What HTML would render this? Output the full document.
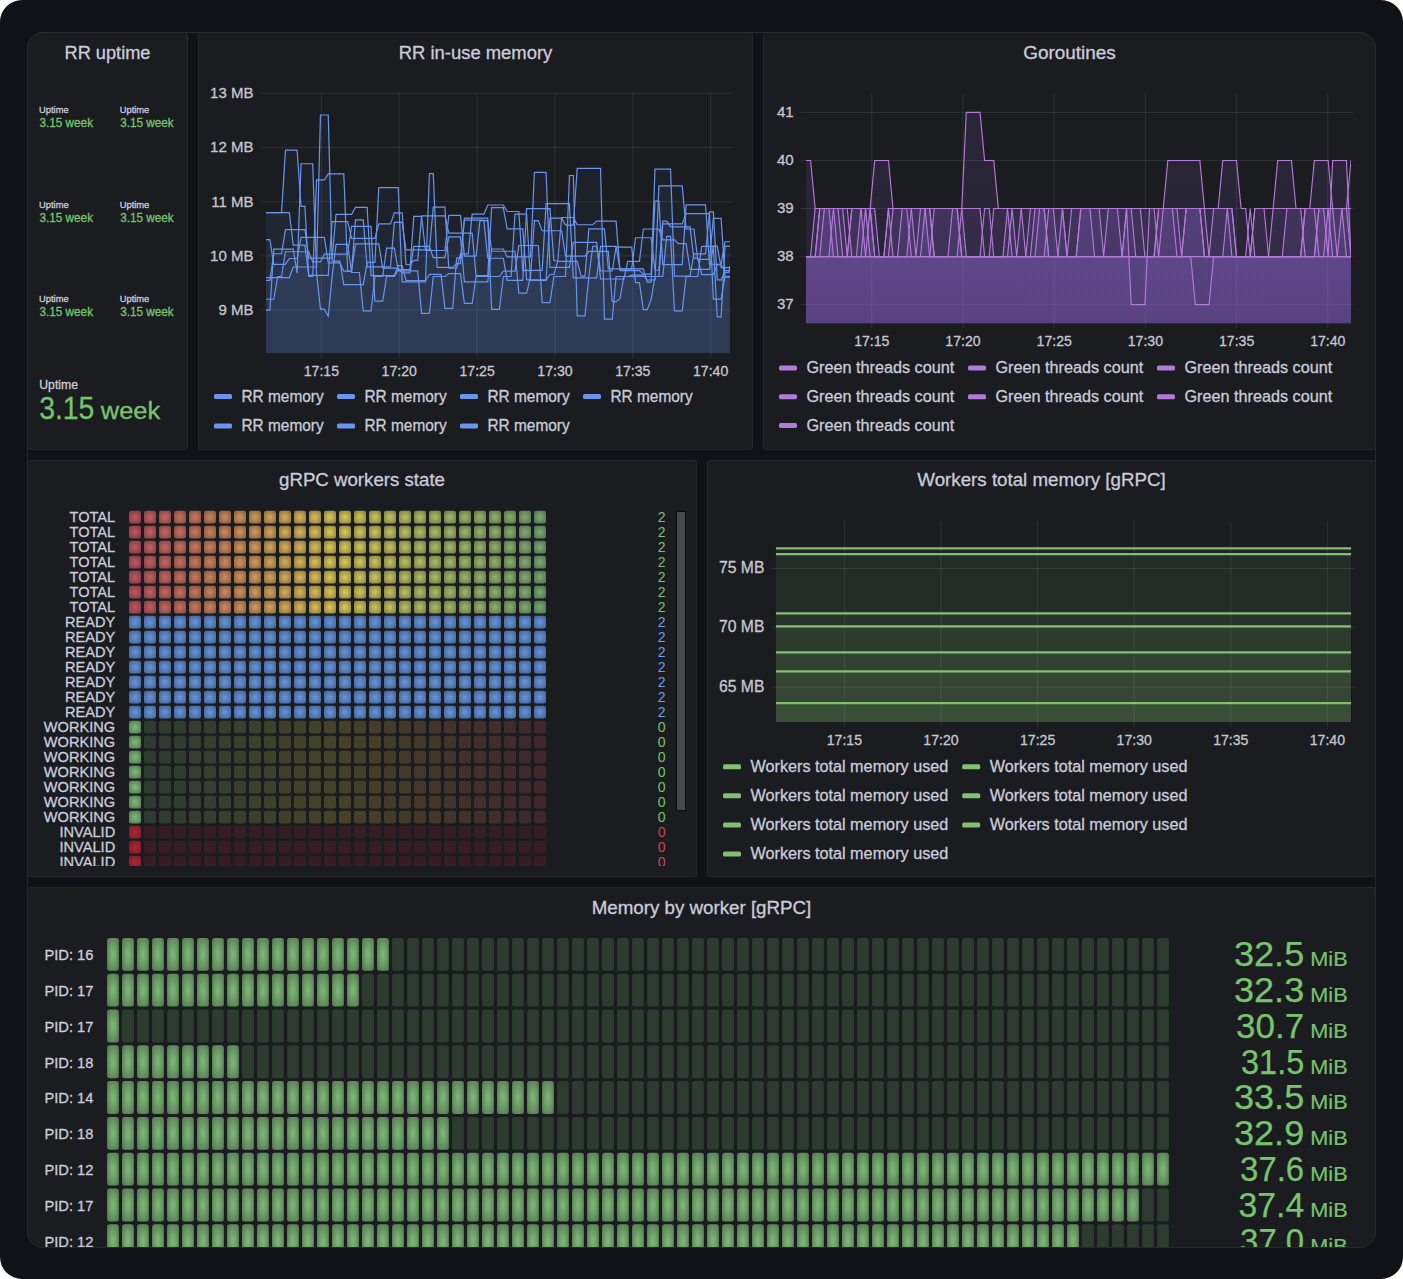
<!DOCTYPE html>
<html><head><meta charset="utf-8"><style>
html,body{margin:0;padding:0;background:#fff;width:1403px;height:1279px;overflow:hidden}
#frame{position:absolute;left:0;top:0;width:1403px;height:1279px;background:#111217;border-radius:22px}
#dash{position:absolute;left:0;top:0;width:1403px;height:1279px;clip-path:inset(32px 27px 31px 27px round 16px)}
.p{position:absolute;box-sizing:border-box;background:#1a1c20;border:1px solid #27282d;border-radius:3px}
#ov{position:absolute;left:27px;top:32px;width:1349px;height:1216px;box-sizing:border-box;border:1px solid #27282d;border-radius:16px;pointer-events:none}
svg{position:absolute;left:0;top:0}
text{font-family:"Liberation Sans", sans-serif}
</style></head><body>
<div id="frame"></div>
<div id="dash">
<div class="p" style="left:27px;top:32px;width:161px;height:418px"></div><div class="p" style="left:198px;top:32px;width:555px;height:418px"></div><div class="p" style="left:763px;top:32px;width:613px;height:418px"></div><div class="p" style="left:27px;top:460px;width:670px;height:417px"></div><div class="p" style="left:707px;top:460px;width:669px;height:417px"></div><div class="p" style="left:27px;top:887px;width:1349px;height:420px"></div>
<svg width="1403" height="1279" viewBox="0 0 1403 1279">
<defs><linearGradient id="lgc2" gradientUnits="userSpaceOnUse" x1="0" y1="93.8" x2="0" y2="323.6"><stop offset="0" stop-color="#a070f0" stop-opacity="0.125"/><stop offset="1" stop-color="#a070f0" stop-opacity="0.085"/></linearGradient><radialGradient id="g1" cx="50%" cy="50%" r="70.7%"><stop offset="10%" stop-color="rgb(198,85,98)" stop-opacity="0.95"/><stop offset="100%" stop-color="rgb(198,85,98)" stop-opacity="0.55"/></radialGradient><radialGradient id="g2" cx="50%" cy="50%" r="70.7%"><stop offset="10%" stop-color="rgb(201,94,97)" stop-opacity="0.95"/><stop offset="100%" stop-color="rgb(201,94,97)" stop-opacity="0.55"/></radialGradient><radialGradient id="g3" cx="50%" cy="50%" r="70.7%"><stop offset="10%" stop-color="rgb(203,103,96)" stop-opacity="0.95"/><stop offset="100%" stop-color="rgb(203,103,96)" stop-opacity="0.55"/></radialGradient><radialGradient id="g4" cx="50%" cy="50%" r="70.7%"><stop offset="10%" stop-color="rgb(205,112,95)" stop-opacity="0.95"/><stop offset="100%" stop-color="rgb(205,112,95)" stop-opacity="0.55"/></radialGradient><radialGradient id="g5" cx="50%" cy="50%" r="70.7%"><stop offset="10%" stop-color="rgb(207,121,95)" stop-opacity="0.95"/><stop offset="100%" stop-color="rgb(207,121,95)" stop-opacity="0.55"/></radialGradient><radialGradient id="g6" cx="50%" cy="50%" r="70.7%"><stop offset="10%" stop-color="rgb(209,130,94)" stop-opacity="0.95"/><stop offset="100%" stop-color="rgb(209,130,94)" stop-opacity="0.55"/></radialGradient><radialGradient id="g7" cx="50%" cy="50%" r="70.7%"><stop offset="10%" stop-color="rgb(211,139,93)" stop-opacity="0.95"/><stop offset="100%" stop-color="rgb(211,139,93)" stop-opacity="0.55"/></radialGradient><radialGradient id="g8" cx="50%" cy="50%" r="70.7%"><stop offset="10%" stop-color="rgb(213,148,92)" stop-opacity="0.95"/><stop offset="100%" stop-color="rgb(213,148,92)" stop-opacity="0.55"/></radialGradient><radialGradient id="g9" cx="50%" cy="50%" r="70.7%"><stop offset="10%" stop-color="rgb(215,157,91)" stop-opacity="0.95"/><stop offset="100%" stop-color="rgb(215,157,91)" stop-opacity="0.55"/></radialGradient><radialGradient id="g10" cx="50%" cy="50%" r="70.7%"><stop offset="10%" stop-color="rgb(217,166,90)" stop-opacity="0.95"/><stop offset="100%" stop-color="rgb(217,166,90)" stop-opacity="0.55"/></radialGradient><radialGradient id="g11" cx="50%" cy="50%" r="70.7%"><stop offset="10%" stop-color="rgb(219,175,89)" stop-opacity="0.95"/><stop offset="100%" stop-color="rgb(219,175,89)" stop-opacity="0.55"/></radialGradient><radialGradient id="g12" cx="50%" cy="50%" r="70.7%"><stop offset="10%" stop-color="rgb(221,184,89)" stop-opacity="0.95"/><stop offset="100%" stop-color="rgb(221,184,89)" stop-opacity="0.55"/></radialGradient><radialGradient id="g13" cx="50%" cy="50%" r="70.7%"><stop offset="10%" stop-color="rgb(223,193,88)" stop-opacity="0.95"/><stop offset="100%" stop-color="rgb(223,193,88)" stop-opacity="0.55"/></radialGradient><radialGradient id="g14" cx="50%" cy="50%" r="70.7%"><stop offset="10%" stop-color="rgb(225,203,87)" stop-opacity="0.95"/><stop offset="100%" stop-color="rgb(225,203,87)" stop-opacity="0.55"/></radialGradient><radialGradient id="g15" cx="50%" cy="50%" r="70.7%"><stop offset="10%" stop-color="rgb(222,206,88)" stop-opacity="0.95"/><stop offset="100%" stop-color="rgb(222,206,88)" stop-opacity="0.55"/></radialGradient><radialGradient id="g16" cx="50%" cy="50%" r="70.7%"><stop offset="10%" stop-color="rgb(214,203,90)" stop-opacity="0.95"/><stop offset="100%" stop-color="rgb(214,203,90)" stop-opacity="0.55"/></radialGradient><radialGradient id="g17" cx="50%" cy="50%" r="70.7%"><stop offset="10%" stop-color="rgb(207,201,92)" stop-opacity="0.95"/><stop offset="100%" stop-color="rgb(207,201,92)" stop-opacity="0.55"/></radialGradient><radialGradient id="g18" cx="50%" cy="50%" r="70.7%"><stop offset="10%" stop-color="rgb(199,198,94)" stop-opacity="0.95"/><stop offset="100%" stop-color="rgb(199,198,94)" stop-opacity="0.55"/></radialGradient><radialGradient id="g19" cx="50%" cy="50%" r="70.7%"><stop offset="10%" stop-color="rgb(191,196,96)" stop-opacity="0.95"/><stop offset="100%" stop-color="rgb(191,196,96)" stop-opacity="0.55"/></radialGradient><radialGradient id="g20" cx="50%" cy="50%" r="70.7%"><stop offset="10%" stop-color="rgb(183,193,98)" stop-opacity="0.95"/><stop offset="100%" stop-color="rgb(183,193,98)" stop-opacity="0.55"/></radialGradient><radialGradient id="g21" cx="50%" cy="50%" r="70.7%"><stop offset="10%" stop-color="rgb(176,191,100)" stop-opacity="0.95"/><stop offset="100%" stop-color="rgb(176,191,100)" stop-opacity="0.55"/></radialGradient><radialGradient id="g22" cx="50%" cy="50%" r="70.7%"><stop offset="10%" stop-color="rgb(168,188,102)" stop-opacity="0.95"/><stop offset="100%" stop-color="rgb(168,188,102)" stop-opacity="0.55"/></radialGradient><radialGradient id="g23" cx="50%" cy="50%" r="70.7%"><stop offset="10%" stop-color="rgb(160,186,105)" stop-opacity="0.95"/><stop offset="100%" stop-color="rgb(160,186,105)" stop-opacity="0.55"/></radialGradient><radialGradient id="g24" cx="50%" cy="50%" r="70.7%"><stop offset="10%" stop-color="rgb(153,183,107)" stop-opacity="0.95"/><stop offset="100%" stop-color="rgb(153,183,107)" stop-opacity="0.55"/></radialGradient><radialGradient id="g25" cx="50%" cy="50%" r="70.7%"><stop offset="10%" stop-color="rgb(145,180,109)" stop-opacity="0.95"/><stop offset="100%" stop-color="rgb(145,180,109)" stop-opacity="0.55"/></radialGradient><radialGradient id="g26" cx="50%" cy="50%" r="70.7%"><stop offset="10%" stop-color="rgb(137,178,111)" stop-opacity="0.95"/><stop offset="100%" stop-color="rgb(137,178,111)" stop-opacity="0.55"/></radialGradient><radialGradient id="g27" cx="50%" cy="50%" r="70.7%"><stop offset="10%" stop-color="rgb(130,175,113)" stop-opacity="0.95"/><stop offset="100%" stop-color="rgb(130,175,113)" stop-opacity="0.55"/></radialGradient><radialGradient id="g28" cx="50%" cy="50%" r="70.7%"><stop offset="10%" stop-color="rgb(122,173,115)" stop-opacity="0.95"/><stop offset="100%" stop-color="rgb(122,173,115)" stop-opacity="0.55"/></radialGradient><radialGradient id="g29" cx="50%" cy="50%" r="70.7%"><stop offset="10%" stop-color="rgb(102,150,226)" stop-opacity="0.95"/><stop offset="100%" stop-color="rgb(102,150,226)" stop-opacity="0.55"/></radialGradient><radialGradient id="g30" cx="50%" cy="50%" r="70.7%"><stop offset="10%" stop-color="rgb(128,188,120)" stop-opacity="0.95"/><stop offset="100%" stop-color="rgb(128,188,120)" stop-opacity="0.55"/></radialGradient><radialGradient id="g31" cx="50%" cy="50%" r="70.7%"><stop offset="10%" stop-color="rgb(182,34,51)" stop-opacity="0.95"/><stop offset="100%" stop-color="rgb(182,34,51)" stop-opacity="0.55"/></radialGradient></defs>
<text x="107.50" y="59.00" font-size="18.54" fill="#ccccdc" text-anchor="middle" font-weight="normal"  textLength="86.0" lengthAdjust="spacingAndGlyphs" stroke="#ccccdc" stroke-width="0.3">RR uptime</text><text x="475.50" y="59.00" font-size="18.54" fill="#ccccdc" text-anchor="middle" font-weight="normal"  textLength="153.5" lengthAdjust="spacingAndGlyphs" stroke="#ccccdc" stroke-width="0.3">RR in-use memory</text><text x="1069.50" y="59.00" font-size="18.54" fill="#ccccdc" text-anchor="middle" font-weight="normal"  textLength="92.6" lengthAdjust="spacingAndGlyphs" stroke="#ccccdc" stroke-width="0.3">Goroutines</text><text x="362.00" y="486.00" font-size="18.54" fill="#ccccdc" text-anchor="middle" font-weight="normal"  textLength="165.9" lengthAdjust="spacingAndGlyphs" stroke="#ccccdc" stroke-width="0.3">gRPC workers state</text><text x="1041.50" y="486.00" font-size="18.54" fill="#ccccdc" text-anchor="middle" font-weight="normal"  textLength="248.4" lengthAdjust="spacingAndGlyphs" stroke="#ccccdc" stroke-width="0.3">Workers total memory [gRPC]</text><text x="701.50" y="913.70" font-size="18.54" fill="#ccccdc" text-anchor="middle" font-weight="normal"  textLength="219.6" lengthAdjust="spacingAndGlyphs" stroke="#ccccdc" stroke-width="0.3">Memory by worker [gRPC]</text><text x="39.10" y="112.60" font-size="9.37" fill="#ccccdc" text-anchor="start" font-weight="normal"  textLength="29.5" lengthAdjust="spacingAndGlyphs" stroke="#ccccdc" stroke-width="0.3">Uptime</text><text x="39.50" y="126.80" font-size="12.09" fill="#78c46d" text-anchor="start" font-weight="normal"  textLength="53.52" lengthAdjust="spacingAndGlyphs" stroke="#78c46d" stroke-width="0.3">3.15 week</text><text x="119.80" y="112.60" font-size="9.37" fill="#ccccdc" text-anchor="start" font-weight="normal"  textLength="29.5" lengthAdjust="spacingAndGlyphs" stroke="#ccccdc" stroke-width="0.3">Uptime</text><text x="120.20" y="126.80" font-size="12.09" fill="#78c46d" text-anchor="start" font-weight="normal"  textLength="53.52" lengthAdjust="spacingAndGlyphs" stroke="#78c46d" stroke-width="0.3">3.15 week</text><text x="39.10" y="207.60" font-size="9.37" fill="#ccccdc" text-anchor="start" font-weight="normal"  textLength="29.5" lengthAdjust="spacingAndGlyphs" stroke="#ccccdc" stroke-width="0.3">Uptime</text><text x="39.50" y="221.80" font-size="12.09" fill="#78c46d" text-anchor="start" font-weight="normal"  textLength="53.52" lengthAdjust="spacingAndGlyphs" stroke="#78c46d" stroke-width="0.3">3.15 week</text><text x="119.80" y="207.60" font-size="9.37" fill="#ccccdc" text-anchor="start" font-weight="normal"  textLength="29.5" lengthAdjust="spacingAndGlyphs" stroke="#ccccdc" stroke-width="0.3">Uptime</text><text x="120.20" y="221.80" font-size="12.09" fill="#78c46d" text-anchor="start" font-weight="normal"  textLength="53.52" lengthAdjust="spacingAndGlyphs" stroke="#78c46d" stroke-width="0.3">3.15 week</text><text x="39.10" y="301.60" font-size="9.37" fill="#ccccdc" text-anchor="start" font-weight="normal"  textLength="29.5" lengthAdjust="spacingAndGlyphs" stroke="#ccccdc" stroke-width="0.3">Uptime</text><text x="39.50" y="315.80" font-size="12.09" fill="#78c46d" text-anchor="start" font-weight="normal"  textLength="53.52" lengthAdjust="spacingAndGlyphs" stroke="#78c46d" stroke-width="0.3">3.15 week</text><text x="119.80" y="301.60" font-size="9.37" fill="#ccccdc" text-anchor="start" font-weight="normal"  textLength="29.5" lengthAdjust="spacingAndGlyphs" stroke="#ccccdc" stroke-width="0.3">Uptime</text><text x="120.20" y="315.80" font-size="12.09" fill="#78c46d" text-anchor="start" font-weight="normal"  textLength="53.52" lengthAdjust="spacingAndGlyphs" stroke="#78c46d" stroke-width="0.3">3.15 week</text><text x="39.30" y="389.00" font-size="12.57" fill="#ccccdc" text-anchor="start" font-weight="normal"  textLength="38.64" lengthAdjust="spacingAndGlyphs" stroke="#ccccdc" stroke-width="0.3">Uptime</text><text x="39.20" y="418.90" font-size="30.9" fill="#78c46d" text-anchor="start" font-weight="normal"  textLength="55.2" lengthAdjust="spacingAndGlyphs" stroke="#78c46d" stroke-width="0.3">3.15</text><text x="100.80" y="418.90" font-size="24.21" fill="#78c46d" text-anchor="start" font-weight="normal"  textLength="59.5" lengthAdjust="spacingAndGlyphs" stroke="#78c46d" stroke-width="0.3">week</text><line x1="260.50" y1="93.30" x2="732.40" y2="93.30" stroke="rgba(240,250,255,0.09)" stroke-width="1"/><text x="253.40" y="98.10" font-size="15.45" fill="#c7c7d1" text-anchor="end" font-weight="normal"  textLength="43.35" lengthAdjust="spacingAndGlyphs" stroke="#c7c7d1" stroke-width="0.3">13 MB</text><line x1="260.50" y1="147.50" x2="732.40" y2="147.50" stroke="rgba(240,250,255,0.09)" stroke-width="1"/><text x="253.40" y="152.30" font-size="15.45" fill="#c7c7d1" text-anchor="end" font-weight="normal"  textLength="43.35" lengthAdjust="spacingAndGlyphs" stroke="#c7c7d1" stroke-width="0.3">12 MB</text><line x1="260.50" y1="201.70" x2="732.40" y2="201.70" stroke="rgba(240,250,255,0.09)" stroke-width="1"/><text x="253.40" y="206.50" font-size="15.45" fill="#c7c7d1" text-anchor="end" font-weight="normal"  textLength="42.24" lengthAdjust="spacingAndGlyphs" stroke="#c7c7d1" stroke-width="0.3">11 MB</text><line x1="260.50" y1="255.90" x2="732.40" y2="255.90" stroke="rgba(240,250,255,0.09)" stroke-width="1"/><text x="253.40" y="260.70" font-size="15.45" fill="#c7c7d1" text-anchor="end" font-weight="normal"  textLength="43.35" lengthAdjust="spacingAndGlyphs" stroke="#c7c7d1" stroke-width="0.3">10 MB</text><line x1="260.50" y1="310.10" x2="732.40" y2="310.10" stroke="rgba(240,250,255,0.09)" stroke-width="1"/><text x="253.40" y="314.90" font-size="15.45" fill="#c7c7d1" text-anchor="end" font-weight="normal"  textLength="35.01" lengthAdjust="spacingAndGlyphs" stroke="#c7c7d1" stroke-width="0.3">9 MB</text><line x1="321.40" y1="93.30" x2="321.40" y2="358.00" stroke="rgba(240,250,255,0.09)" stroke-width="1"/><text x="321.40" y="375.80" font-size="14.52" fill="#c7c7d1" text-anchor="middle" font-weight="normal"  textLength="35.28" lengthAdjust="spacingAndGlyphs" stroke="#c7c7d1" stroke-width="0.3">17:15</text><line x1="399.25" y1="93.30" x2="399.25" y2="358.00" stroke="rgba(240,250,255,0.09)" stroke-width="1"/><text x="399.25" y="375.80" font-size="14.52" fill="#c7c7d1" text-anchor="middle" font-weight="normal"  textLength="35.28" lengthAdjust="spacingAndGlyphs" stroke="#c7c7d1" stroke-width="0.3">17:20</text><line x1="477.10" y1="93.30" x2="477.10" y2="358.00" stroke="rgba(240,250,255,0.09)" stroke-width="1"/><text x="477.10" y="375.80" font-size="14.52" fill="#c7c7d1" text-anchor="middle" font-weight="normal"  textLength="35.28" lengthAdjust="spacingAndGlyphs" stroke="#c7c7d1" stroke-width="0.3">17:25</text><line x1="554.95" y1="93.30" x2="554.95" y2="358.00" stroke="rgba(240,250,255,0.09)" stroke-width="1"/><text x="554.95" y="375.80" font-size="14.52" fill="#c7c7d1" text-anchor="middle" font-weight="normal"  textLength="35.28" lengthAdjust="spacingAndGlyphs" stroke="#c7c7d1" stroke-width="0.3">17:30</text><line x1="632.80" y1="93.30" x2="632.80" y2="358.00" stroke="rgba(240,250,255,0.09)" stroke-width="1"/><text x="632.80" y="375.80" font-size="14.52" fill="#c7c7d1" text-anchor="middle" font-weight="normal"  textLength="35.28" lengthAdjust="spacingAndGlyphs" stroke="#c7c7d1" stroke-width="0.3">17:35</text><line x1="710.65" y1="93.30" x2="710.65" y2="358.00" stroke="rgba(240,250,255,0.09)" stroke-width="1"/><text x="710.65" y="375.80" font-size="14.52" fill="#c7c7d1" text-anchor="middle" font-weight="normal"  textLength="35.28" lengthAdjust="spacingAndGlyphs" stroke="#c7c7d1" stroke-width="0.3">17:40</text><clipPath id="c1"><rect x="266" y="90.3" width="464" height="263.2"/></clipPath><g clip-path="url(#c1)"><path d="M266.00,277.58 L269.89,277.58 L273.78,277.58 L277.67,277.58 L281.56,277.58 L285.45,277.58 L289.34,277.58 L293.23,267.00 L297.12,267.00 L301.01,267.00 L304.90,267.00 L308.79,267.00 L312.68,267.00 L316.57,267.00 L320.46,114.98 L324.35,114.98 L328.24,114.98 L332.13,261.15 L336.02,261.15 L339.91,261.15 L343.80,284.70 L347.69,284.70 L351.58,284.70 L355.47,284.70 L359.36,284.70 L363.25,284.70 L367.14,262.33 L371.03,262.33 L374.92,262.33 L378.81,187.66 L382.70,187.66 L386.59,187.66 L390.48,187.66 L394.37,187.66 L398.26,187.66 L402.15,281.80 L406.04,281.80 L409.93,281.80 L413.82,281.80 L417.71,281.80 L421.60,281.80 L425.49,281.80 L429.38,173.70 L433.27,173.70 L437.16,267.47 L441.05,267.47 L444.94,267.47 L448.83,267.47 L452.72,267.47 L456.61,263.54 L460.50,263.54 L464.39,220.19 L468.28,220.19 L472.17,220.19 L476.06,220.19 L479.95,220.19 L483.84,220.19 L487.73,258.23 L491.62,258.23 L495.51,258.23 L499.40,258.23 L503.29,258.23 L507.18,280.42 L511.07,280.42 L514.96,280.42 L518.85,280.42 L522.74,280.42 L526.63,208.55 L530.52,208.55 L534.41,208.55 L538.30,208.55 L542.19,208.55 L546.08,208.55 L549.97,208.55 L553.86,260.75 L557.75,260.75 L561.64,217.49 L565.53,217.49 L569.42,217.49 L573.31,217.49 L577.20,224.77 L581.09,224.77 L584.98,224.77 L588.87,224.77 L592.76,224.77 L596.65,221.09 L600.54,221.09 L604.43,221.09 L608.32,221.09 L612.21,221.09 L616.10,221.09 L619.99,270.62 L623.88,270.62 L627.77,270.62 L631.66,270.62 L635.55,270.62 L639.44,270.62 L643.33,274.15 L647.22,274.15 L651.11,274.15 L655.00,169.16 L658.89,169.16 L662.78,169.16 L666.67,169.16 L670.56,169.16 L674.45,276.11 L678.34,276.11 L682.23,276.11 L686.12,276.11 L690.01,276.11 L693.90,253.88 L697.79,253.88 L701.68,253.88 L705.57,253.88 L709.46,211.96 L713.35,211.96 L717.24,279.83 L721.13,279.83 L725.02,272.36 L728.91,272.36 L730.00,265.89 L730.00,353.50 L266.00,353.50 Z" fill="#6a95ee" fill-opacity="0.046" stroke="none"/><path d="M266.00,212.54 L269.89,212.54 L273.78,212.54 L277.67,212.54 L281.56,212.54 L285.45,150.21 L289.34,150.21 L293.23,150.21 L297.12,150.21 L301.01,206.36 L304.90,206.36 L308.79,275.30 L312.68,275.30 L316.57,275.30 L320.46,275.30 L324.35,275.30 L328.24,275.30 L332.13,221.55 L336.02,221.55 L339.91,221.55 L343.80,221.55 L347.69,221.55 L351.58,238.41 L355.47,238.41 L359.36,238.41 L363.25,238.41 L367.14,238.41 L371.03,238.41 L374.92,238.41 L378.81,223.96 L382.70,223.96 L386.59,223.96 L390.48,223.96 L394.37,212.80 L398.26,212.80 L402.15,212.80 L406.04,264.76 L409.93,264.76 L413.82,260.33 L417.71,260.33 L421.60,215.86 L425.49,215.86 L429.38,215.86 L433.27,215.86 L437.16,215.86 L441.05,215.86 L444.94,215.86 L448.83,233.21 L452.72,233.21 L456.61,233.21 L460.50,233.21 L464.39,233.21 L468.28,233.21 L472.17,233.21 L476.06,275.70 L479.95,275.70 L483.84,275.70 L487.73,275.70 L491.62,207.69 L495.51,207.69 L499.40,207.69 L503.29,207.69 L507.18,228.87 L511.07,228.87 L514.96,228.87 L518.85,228.87 L522.74,228.87 L526.63,279.81 L530.52,279.81 L534.41,279.81 L538.30,279.81 L542.19,279.81 L546.08,279.81 L549.97,274.49 L553.86,274.49 L557.75,261.33 L561.64,261.33 L565.53,261.33 L569.42,261.33 L573.31,261.33 L577.20,261.33 L581.09,276.03 L584.98,276.03 L588.87,228.90 L592.76,228.90 L596.65,228.90 L600.54,228.90 L604.43,228.90 L608.32,268.84 L612.21,268.84 L616.10,268.84 L619.99,268.84 L623.88,268.84 L627.77,268.84 L631.66,268.84 L635.55,237.74 L639.44,237.74 L643.33,237.74 L647.22,237.74 L651.11,237.74 L655.00,270.25 L658.89,270.25 L662.78,221.19 L666.67,221.19 L670.56,226.92 L674.45,226.92 L678.34,226.92 L682.23,226.92 L686.12,226.92 L690.01,226.92 L693.90,258.06 L697.79,258.06 L701.68,274.68 L705.57,274.68 L709.46,274.68 L713.35,274.68 L717.24,264.75 L721.13,264.75 L725.02,270.56 L728.91,270.56 L730.00,270.56 L730.00,353.50 L266.00,353.50 Z" fill="#6a95ee" fill-opacity="0.046" stroke="none"/><path d="M266.00,310.10 L269.89,310.10 L273.78,249.09 L277.67,249.09 L281.56,249.09 L285.45,249.09 L289.34,249.09 L293.23,249.09 L297.12,272.89 L301.01,163.76 L304.90,163.76 L308.79,163.76 L312.68,163.76 L316.57,272.89 L320.46,309.16 L324.35,309.16 L328.24,316.00 L332.13,276.50 L336.02,244.45 L339.91,244.45 L343.80,244.45 L347.69,244.45 L351.58,272.49 L355.47,272.49 L359.36,272.49 L363.25,310.85 L367.14,310.85 L371.03,310.85 L374.92,276.50 L378.81,276.50 L382.70,276.50 L386.59,248.06 L390.48,248.06 L394.37,248.06 L398.26,270.95 L402.15,270.95 L406.04,270.95 L409.93,270.95 L413.82,270.95 L417.71,270.95 L421.60,313.45 L425.49,313.45 L429.38,313.45 L433.27,276.50 L437.16,276.50 L441.05,276.50 L444.94,276.50 L448.83,273.55 L452.72,273.55 L456.61,273.55 L460.50,273.55 L464.39,303.30 L468.28,303.30 L472.17,303.30 L476.06,276.50 L479.95,276.50 L483.84,276.50 L487.73,276.50 L491.62,276.50 L495.51,276.50 L499.40,276.50 L503.29,271.06 L507.18,271.06 L511.07,271.06 L514.96,271.06 L518.85,245.51 L522.74,245.51 L526.63,245.51 L530.52,245.51 L534.41,245.51 L538.30,245.51 L542.19,302.59 L546.08,302.59 L549.97,302.59 L553.86,276.50 L557.75,276.50 L561.64,276.50 L565.53,276.50 L569.42,175.48 L573.31,175.48 L577.20,315.91 L581.09,315.91 L584.98,315.91 L588.87,276.50 L592.76,246.27 L596.65,246.27 L600.54,270.98 L604.43,270.98 L608.32,270.98 L612.21,270.98 L616.10,247.13 L619.99,247.13 L623.88,247.13 L627.77,247.13 L631.66,247.13 L635.55,282.69 L639.44,282.69 L643.33,309.62 L647.22,309.62 L651.11,299.61 L655.00,276.50 L658.89,276.50 L662.78,276.50 L666.67,236.45 L670.56,236.45 L674.45,310.93 L678.34,310.93 L682.23,310.93 L686.12,276.50 L690.01,276.50 L693.90,276.50 L697.79,276.50 L701.68,246.44 L705.57,246.44 L709.46,246.44 L713.35,246.44 L717.24,316.92 L721.13,316.92 L725.02,246.11 L728.91,246.11 L730.00,246.11 L730.00,353.50 L266.00,353.50 Z" fill="#6a95ee" fill-opacity="0.046" stroke="none"/><path d="M266.00,239.64 L269.89,239.64 L273.78,264.44 L277.67,264.44 L281.56,264.44 L285.45,264.44 L289.34,258.51 L293.23,258.51 L297.12,258.51 L301.01,237.45 L304.90,237.45 L308.79,237.45 L312.68,237.45 L316.57,237.45 L320.46,237.45 L324.35,237.45 L328.24,262.96 L332.13,262.96 L336.02,262.96 L339.91,262.96 L343.80,271.15 L347.69,271.15 L351.58,271.15 L355.47,243.83 L359.36,243.83 L363.25,243.83 L367.14,243.83 L371.03,243.83 L374.92,243.83 L378.81,243.83 L382.70,268.08 L386.59,268.08 L390.48,268.08 L394.37,268.08 L398.26,268.08 L402.15,272.95 L406.04,272.95 L409.93,272.95 L413.82,246.45 L417.71,246.45 L421.60,246.45 L425.49,246.45 L429.38,246.45 L433.27,257.54 L437.16,257.54 L441.05,257.54 L444.94,257.54 L448.83,236.87 L452.72,236.87 L456.61,236.87 L460.50,236.87 L464.39,281.97 L468.28,281.97 L472.17,281.97 L476.06,281.97 L479.95,281.97 L483.84,281.97 L487.73,281.97 L491.62,248.98 L495.51,248.98 L499.40,248.98 L503.29,248.98 L507.18,256.79 L511.07,256.79 L514.96,256.79 L518.85,256.79 L522.74,256.79 L526.63,256.79 L530.52,256.79 L534.41,172.31 L538.30,172.31 L542.19,172.31 L546.08,172.31 L549.97,267.32 L553.86,267.32 L557.75,267.32 L561.64,267.32 L565.53,267.32 L569.42,267.32 L573.31,242.45 L577.20,242.45 L581.09,242.45 L584.98,242.45 L588.87,242.45 L592.76,242.45 L596.65,242.45 L600.54,279.00 L604.43,279.00 L608.32,279.00 L612.21,279.00 L616.10,279.00 L619.99,279.00 L623.88,279.00 L627.77,261.28 L631.66,261.28 L635.55,261.28 L639.44,261.28 L643.33,229.00 L647.22,229.00 L651.11,229.00 L655.00,229.00 L658.89,229.00 L662.78,239.81 L666.67,239.81 L670.56,239.81 L674.45,239.81 L678.34,243.70 L682.23,243.70 L686.12,243.70 L690.01,269.41 L693.90,269.41 L697.79,269.41 L701.68,269.41 L705.57,269.41 L709.46,269.41 L713.35,246.05 L717.24,246.05 L721.13,267.65 L725.02,267.65 L728.91,267.65 L730.00,267.65 L730.00,353.50 L266.00,353.50 Z" fill="#6a95ee" fill-opacity="0.046" stroke="none"/><path d="M266.00,299.26 L269.89,299.26 L273.78,299.26 L277.67,276.50 L281.56,276.50 L285.45,251.76 L289.34,251.76 L293.23,251.76 L297.12,251.76 L301.01,251.76 L304.90,251.76 L308.79,251.76 L312.68,261.93 L316.57,261.93 L320.46,261.93 L324.35,254.22 L328.24,254.22 L332.13,254.22 L336.02,254.22 L339.91,254.22 L343.80,254.22 L347.69,254.22 L351.58,226.32 L355.47,226.32 L359.36,226.32 L363.25,226.32 L367.14,226.32 L371.03,226.32 L374.92,301.14 L378.81,301.14 L382.70,301.14 L386.59,276.50 L390.48,276.50 L394.37,276.50 L398.26,269.55 L402.15,269.55 L406.04,269.55 L409.93,269.55 L413.82,216.34 L417.71,216.34 L421.60,216.34 L425.49,250.50 L429.38,250.50 L433.27,250.50 L437.16,250.50 L441.05,250.50 L444.94,250.50 L448.83,215.30 L452.72,215.30 L456.61,215.30 L460.50,215.30 L464.39,256.14 L468.28,256.14 L472.17,256.14 L476.06,256.14 L479.95,220.63 L483.84,220.63 L487.73,220.63 L491.62,251.25 L495.51,251.25 L499.40,251.25 L503.29,251.25 L507.18,251.25 L511.07,251.25 L514.96,251.25 L518.85,293.15 L522.74,293.15 L526.63,293.15 L530.52,276.50 L534.41,220.64 L538.30,220.64 L542.19,230.75 L546.08,230.75 L549.97,230.75 L553.86,230.75 L557.75,230.75 L561.64,230.75 L565.53,256.16 L569.42,256.16 L573.31,256.16 L577.20,256.16 L581.09,256.16 L584.98,256.16 L588.87,251.29 L592.76,251.29 L596.65,251.29 L600.54,251.29 L604.43,251.29 L608.32,251.29 L612.21,301.69 L616.10,301.69 L619.99,298.76 L623.88,276.50 L627.77,276.50 L631.66,276.50 L635.55,276.50 L639.44,276.50 L643.33,276.50 L647.22,276.50 L651.11,276.50 L655.00,276.50 L658.89,276.50 L662.78,223.97 L666.67,223.97 L670.56,223.97 L674.45,223.97 L678.34,223.97 L682.23,223.97 L686.12,213.67 L690.01,213.67 L693.90,213.67 L697.79,213.67 L701.68,213.67 L705.57,213.67 L709.46,213.67 L713.35,299.15 L717.24,299.15 L721.13,299.15 L725.02,276.50 L728.91,276.50 L730.00,276.50 L730.00,353.50 L266.00,353.50 Z" fill="#6a95ee" fill-opacity="0.046" stroke="none"/><path d="M266.00,280.29 L269.89,280.29 L273.78,253.76 L277.67,253.76 L281.56,253.76 L285.45,229.54 L289.34,229.54 L293.23,229.54 L297.12,229.54 L301.01,229.54 L304.90,229.54 L308.79,258.12 L312.68,258.12 L316.57,258.12 L320.46,258.12 L324.35,258.12 L328.24,258.12 L332.13,258.12 L336.02,214.30 L339.91,214.30 L343.80,214.30 L347.69,214.30 L351.58,214.30 L355.47,207.30 L359.36,207.30 L363.25,207.30 L367.14,207.30 L371.03,275.68 L374.92,275.68 L378.81,275.68 L382.70,275.68 L386.59,275.68 L390.48,275.68 L394.37,275.68 L398.26,265.53 L402.15,265.53 L406.04,280.50 L409.93,280.50 L413.82,280.50 L417.71,280.50 L421.60,280.50 L425.49,280.50 L429.38,274.42 L433.27,274.42 L437.16,274.42 L441.05,274.42 L444.94,308.39 L448.83,308.39 L452.72,308.39 L456.61,258.06 L460.50,258.06 L464.39,218.04 L468.28,218.04 L472.17,218.04 L476.06,218.04 L479.95,218.04 L483.84,218.04 L487.73,218.04 L491.62,309.37 L495.51,309.37 L499.40,309.37 L503.29,276.50 L507.18,276.50 L511.07,276.50 L514.96,214.03 L518.85,214.03 L522.74,214.03 L526.63,214.03 L530.52,280.35 L534.41,280.35 L538.30,280.35 L542.19,280.35 L546.08,280.35 L549.97,218.03 L553.86,218.03 L557.75,218.03 L561.64,218.03 L565.53,225.03 L569.42,225.03 L573.31,225.03 L577.20,168.46 L581.09,168.46 L584.98,168.46 L588.87,168.46 L592.76,168.46 L596.65,168.46 L600.54,168.46 L604.43,319.18 L608.32,319.18 L612.21,319.18 L616.10,276.50 L619.99,276.50 L623.88,276.50 L627.77,276.50 L631.66,275.20 L635.55,275.20 L639.44,275.20 L643.33,275.20 L647.22,280.01 L651.11,280.01 L655.00,280.01 L658.89,185.91 L662.78,185.91 L666.67,185.91 L670.56,185.91 L674.45,185.91 L678.34,185.91 L682.23,185.91 L686.12,229.02 L690.01,229.02 L693.90,229.02 L697.79,259.46 L701.68,259.46 L705.57,259.46 L709.46,259.46 L713.35,218.36 L717.24,218.36 L721.13,218.36 L725.02,277.19 L728.91,277.19 L730.00,277.19 L730.00,353.50 L266.00,353.50 Z" fill="#6a95ee" fill-opacity="0.046" stroke="none"/><path d="M266.00,212.54 L269.89,212.54 L273.78,212.54 L277.67,212.54 L281.56,212.54 L285.45,212.54 L289.34,212.54 L293.23,245.13 L297.12,245.13 L301.01,245.13 L304.90,245.13 L308.79,276.31 L312.68,276.31 L316.57,179.92 L320.46,179.92 L324.35,179.92 L328.24,173.87 L332.13,173.87 L336.02,173.87 L339.91,173.87 L343.80,173.87 L347.69,271.36 L351.58,271.36 L355.47,219.92 L359.36,219.92 L363.25,219.92 L367.14,266.95 L371.03,266.95 L374.92,266.95 L378.81,266.95 L382.70,266.95 L386.59,266.95 L390.48,266.95 L394.37,222.35 L398.26,222.35 L402.15,222.35 L406.04,249.82 L409.93,249.82 L413.82,249.82 L417.71,249.82 L421.60,249.82 L425.49,249.82 L429.38,249.82 L433.27,207.11 L437.16,207.11 L441.05,207.11 L444.94,207.11 L448.83,268.25 L452.72,268.25 L456.61,268.25 L460.50,253.82 L464.39,253.82 L468.28,253.82 L472.17,214.14 L476.06,214.14 L479.95,214.14 L483.84,214.14 L487.73,205.01 L491.62,205.01 L495.51,205.01 L499.40,205.01 L503.29,205.01 L507.18,211.50 L511.07,211.50 L514.96,211.50 L518.85,211.50 L522.74,270.42 L526.63,270.42 L530.52,270.42 L534.41,270.42 L538.30,270.42 L542.19,270.42 L546.08,203.64 L549.97,203.64 L553.86,203.64 L557.75,203.64 L561.64,203.64 L565.53,203.64 L569.42,203.64 L573.31,277.87 L577.20,277.87 L581.09,277.87 L584.98,277.87 L588.87,277.87 L592.76,277.87 L596.65,277.87 L600.54,246.38 L604.43,246.38 L608.32,246.38 L612.21,246.38 L616.10,246.38 L619.99,268.82 L623.88,268.82 L627.77,268.82 L631.66,268.82 L635.55,268.82 L639.44,268.82 L643.33,268.82 L647.22,282.14 L651.11,282.14 L655.00,201.21 L658.89,201.21 L662.78,264.64 L666.67,264.64 L670.56,264.64 L674.45,264.64 L678.34,264.64 L682.23,264.64 L686.12,204.89 L690.01,204.89 L693.90,204.89 L697.79,204.89 L701.68,204.89 L705.57,204.89 L709.46,264.23 L713.35,264.23 L717.24,264.23 L721.13,264.23 L725.02,241.76 L728.91,241.76 L730.00,241.76 L730.00,353.50 L266.00,353.50 Z" fill="#6a95ee" fill-opacity="0.046" stroke="none"/><path d="M266.00,277.58 L269.89,277.58 L273.78,277.58 L277.67,277.58 L281.56,277.58 L285.45,277.58 L289.34,277.58 L293.23,267.00 L297.12,267.00 L301.01,267.00 L304.90,267.00 L308.79,267.00 L312.68,267.00 L316.57,267.00 L320.46,114.98 L324.35,114.98 L328.24,114.98 L332.13,261.15 L336.02,261.15 L339.91,261.15 L343.80,284.70 L347.69,284.70 L351.58,284.70 L355.47,284.70 L359.36,284.70 L363.25,284.70 L367.14,262.33 L371.03,262.33 L374.92,262.33 L378.81,187.66 L382.70,187.66 L386.59,187.66 L390.48,187.66 L394.37,187.66 L398.26,187.66 L402.15,281.80 L406.04,281.80 L409.93,281.80 L413.82,281.80 L417.71,281.80 L421.60,281.80 L425.49,281.80 L429.38,173.70 L433.27,173.70 L437.16,267.47 L441.05,267.47 L444.94,267.47 L448.83,267.47 L452.72,267.47 L456.61,263.54 L460.50,263.54 L464.39,220.19 L468.28,220.19 L472.17,220.19 L476.06,220.19 L479.95,220.19 L483.84,220.19 L487.73,258.23 L491.62,258.23 L495.51,258.23 L499.40,258.23 L503.29,258.23 L507.18,280.42 L511.07,280.42 L514.96,280.42 L518.85,280.42 L522.74,280.42 L526.63,208.55 L530.52,208.55 L534.41,208.55 L538.30,208.55 L542.19,208.55 L546.08,208.55 L549.97,208.55 L553.86,260.75 L557.75,260.75 L561.64,217.49 L565.53,217.49 L569.42,217.49 L573.31,217.49 L577.20,224.77 L581.09,224.77 L584.98,224.77 L588.87,224.77 L592.76,224.77 L596.65,221.09 L600.54,221.09 L604.43,221.09 L608.32,221.09 L612.21,221.09 L616.10,221.09 L619.99,270.62 L623.88,270.62 L627.77,270.62 L631.66,270.62 L635.55,270.62 L639.44,270.62 L643.33,274.15 L647.22,274.15 L651.11,274.15 L655.00,169.16 L658.89,169.16 L662.78,169.16 L666.67,169.16 L670.56,169.16 L674.45,276.11 L678.34,276.11 L682.23,276.11 L686.12,276.11 L690.01,276.11 L693.90,253.88 L697.79,253.88 L701.68,253.88 L705.57,253.88 L709.46,211.96 L713.35,211.96 L717.24,279.83 L721.13,279.83 L725.02,272.36 L728.91,272.36 L730.00,265.89" fill="none" stroke="#6a95ee" stroke-width="1.2" stroke-linejoin="miter"/><path d="M266.00,212.54 L269.89,212.54 L273.78,212.54 L277.67,212.54 L281.56,212.54 L285.45,150.21 L289.34,150.21 L293.23,150.21 L297.12,150.21 L301.01,206.36 L304.90,206.36 L308.79,275.30 L312.68,275.30 L316.57,275.30 L320.46,275.30 L324.35,275.30 L328.24,275.30 L332.13,221.55 L336.02,221.55 L339.91,221.55 L343.80,221.55 L347.69,221.55 L351.58,238.41 L355.47,238.41 L359.36,238.41 L363.25,238.41 L367.14,238.41 L371.03,238.41 L374.92,238.41 L378.81,223.96 L382.70,223.96 L386.59,223.96 L390.48,223.96 L394.37,212.80 L398.26,212.80 L402.15,212.80 L406.04,264.76 L409.93,264.76 L413.82,260.33 L417.71,260.33 L421.60,215.86 L425.49,215.86 L429.38,215.86 L433.27,215.86 L437.16,215.86 L441.05,215.86 L444.94,215.86 L448.83,233.21 L452.72,233.21 L456.61,233.21 L460.50,233.21 L464.39,233.21 L468.28,233.21 L472.17,233.21 L476.06,275.70 L479.95,275.70 L483.84,275.70 L487.73,275.70 L491.62,207.69 L495.51,207.69 L499.40,207.69 L503.29,207.69 L507.18,228.87 L511.07,228.87 L514.96,228.87 L518.85,228.87 L522.74,228.87 L526.63,279.81 L530.52,279.81 L534.41,279.81 L538.30,279.81 L542.19,279.81 L546.08,279.81 L549.97,274.49 L553.86,274.49 L557.75,261.33 L561.64,261.33 L565.53,261.33 L569.42,261.33 L573.31,261.33 L577.20,261.33 L581.09,276.03 L584.98,276.03 L588.87,228.90 L592.76,228.90 L596.65,228.90 L600.54,228.90 L604.43,228.90 L608.32,268.84 L612.21,268.84 L616.10,268.84 L619.99,268.84 L623.88,268.84 L627.77,268.84 L631.66,268.84 L635.55,237.74 L639.44,237.74 L643.33,237.74 L647.22,237.74 L651.11,237.74 L655.00,270.25 L658.89,270.25 L662.78,221.19 L666.67,221.19 L670.56,226.92 L674.45,226.92 L678.34,226.92 L682.23,226.92 L686.12,226.92 L690.01,226.92 L693.90,258.06 L697.79,258.06 L701.68,274.68 L705.57,274.68 L709.46,274.68 L713.35,274.68 L717.24,264.75 L721.13,264.75 L725.02,270.56 L728.91,270.56 L730.00,270.56" fill="none" stroke="#6a95ee" stroke-width="1.2" stroke-linejoin="miter"/><path d="M266.00,310.10 L269.89,310.10 L273.78,249.09 L277.67,249.09 L281.56,249.09 L285.45,249.09 L289.34,249.09 L293.23,249.09 L297.12,272.89 L301.01,163.76 L304.90,163.76 L308.79,163.76 L312.68,163.76 L316.57,272.89 L320.46,309.16 L324.35,309.16 L328.24,316.00 L332.13,276.50 L336.02,244.45 L339.91,244.45 L343.80,244.45 L347.69,244.45 L351.58,272.49 L355.47,272.49 L359.36,272.49 L363.25,310.85 L367.14,310.85 L371.03,310.85 L374.92,276.50 L378.81,276.50 L382.70,276.50 L386.59,248.06 L390.48,248.06 L394.37,248.06 L398.26,270.95 L402.15,270.95 L406.04,270.95 L409.93,270.95 L413.82,270.95 L417.71,270.95 L421.60,313.45 L425.49,313.45 L429.38,313.45 L433.27,276.50 L437.16,276.50 L441.05,276.50 L444.94,276.50 L448.83,273.55 L452.72,273.55 L456.61,273.55 L460.50,273.55 L464.39,303.30 L468.28,303.30 L472.17,303.30 L476.06,276.50 L479.95,276.50 L483.84,276.50 L487.73,276.50 L491.62,276.50 L495.51,276.50 L499.40,276.50 L503.29,271.06 L507.18,271.06 L511.07,271.06 L514.96,271.06 L518.85,245.51 L522.74,245.51 L526.63,245.51 L530.52,245.51 L534.41,245.51 L538.30,245.51 L542.19,302.59 L546.08,302.59 L549.97,302.59 L553.86,276.50 L557.75,276.50 L561.64,276.50 L565.53,276.50 L569.42,175.48 L573.31,175.48 L577.20,315.91 L581.09,315.91 L584.98,315.91 L588.87,276.50 L592.76,246.27 L596.65,246.27 L600.54,270.98 L604.43,270.98 L608.32,270.98 L612.21,270.98 L616.10,247.13 L619.99,247.13 L623.88,247.13 L627.77,247.13 L631.66,247.13 L635.55,282.69 L639.44,282.69 L643.33,309.62 L647.22,309.62 L651.11,299.61 L655.00,276.50 L658.89,276.50 L662.78,276.50 L666.67,236.45 L670.56,236.45 L674.45,310.93 L678.34,310.93 L682.23,310.93 L686.12,276.50 L690.01,276.50 L693.90,276.50 L697.79,276.50 L701.68,246.44 L705.57,246.44 L709.46,246.44 L713.35,246.44 L717.24,316.92 L721.13,316.92 L725.02,246.11 L728.91,246.11 L730.00,246.11" fill="none" stroke="#6a95ee" stroke-width="1.2" stroke-linejoin="miter"/><path d="M266.00,239.64 L269.89,239.64 L273.78,264.44 L277.67,264.44 L281.56,264.44 L285.45,264.44 L289.34,258.51 L293.23,258.51 L297.12,258.51 L301.01,237.45 L304.90,237.45 L308.79,237.45 L312.68,237.45 L316.57,237.45 L320.46,237.45 L324.35,237.45 L328.24,262.96 L332.13,262.96 L336.02,262.96 L339.91,262.96 L343.80,271.15 L347.69,271.15 L351.58,271.15 L355.47,243.83 L359.36,243.83 L363.25,243.83 L367.14,243.83 L371.03,243.83 L374.92,243.83 L378.81,243.83 L382.70,268.08 L386.59,268.08 L390.48,268.08 L394.37,268.08 L398.26,268.08 L402.15,272.95 L406.04,272.95 L409.93,272.95 L413.82,246.45 L417.71,246.45 L421.60,246.45 L425.49,246.45 L429.38,246.45 L433.27,257.54 L437.16,257.54 L441.05,257.54 L444.94,257.54 L448.83,236.87 L452.72,236.87 L456.61,236.87 L460.50,236.87 L464.39,281.97 L468.28,281.97 L472.17,281.97 L476.06,281.97 L479.95,281.97 L483.84,281.97 L487.73,281.97 L491.62,248.98 L495.51,248.98 L499.40,248.98 L503.29,248.98 L507.18,256.79 L511.07,256.79 L514.96,256.79 L518.85,256.79 L522.74,256.79 L526.63,256.79 L530.52,256.79 L534.41,172.31 L538.30,172.31 L542.19,172.31 L546.08,172.31 L549.97,267.32 L553.86,267.32 L557.75,267.32 L561.64,267.32 L565.53,267.32 L569.42,267.32 L573.31,242.45 L577.20,242.45 L581.09,242.45 L584.98,242.45 L588.87,242.45 L592.76,242.45 L596.65,242.45 L600.54,279.00 L604.43,279.00 L608.32,279.00 L612.21,279.00 L616.10,279.00 L619.99,279.00 L623.88,279.00 L627.77,261.28 L631.66,261.28 L635.55,261.28 L639.44,261.28 L643.33,229.00 L647.22,229.00 L651.11,229.00 L655.00,229.00 L658.89,229.00 L662.78,239.81 L666.67,239.81 L670.56,239.81 L674.45,239.81 L678.34,243.70 L682.23,243.70 L686.12,243.70 L690.01,269.41 L693.90,269.41 L697.79,269.41 L701.68,269.41 L705.57,269.41 L709.46,269.41 L713.35,246.05 L717.24,246.05 L721.13,267.65 L725.02,267.65 L728.91,267.65 L730.00,267.65" fill="none" stroke="#6a95ee" stroke-width="1.2" stroke-linejoin="miter"/><path d="M266.00,299.26 L269.89,299.26 L273.78,299.26 L277.67,276.50 L281.56,276.50 L285.45,251.76 L289.34,251.76 L293.23,251.76 L297.12,251.76 L301.01,251.76 L304.90,251.76 L308.79,251.76 L312.68,261.93 L316.57,261.93 L320.46,261.93 L324.35,254.22 L328.24,254.22 L332.13,254.22 L336.02,254.22 L339.91,254.22 L343.80,254.22 L347.69,254.22 L351.58,226.32 L355.47,226.32 L359.36,226.32 L363.25,226.32 L367.14,226.32 L371.03,226.32 L374.92,301.14 L378.81,301.14 L382.70,301.14 L386.59,276.50 L390.48,276.50 L394.37,276.50 L398.26,269.55 L402.15,269.55 L406.04,269.55 L409.93,269.55 L413.82,216.34 L417.71,216.34 L421.60,216.34 L425.49,250.50 L429.38,250.50 L433.27,250.50 L437.16,250.50 L441.05,250.50 L444.94,250.50 L448.83,215.30 L452.72,215.30 L456.61,215.30 L460.50,215.30 L464.39,256.14 L468.28,256.14 L472.17,256.14 L476.06,256.14 L479.95,220.63 L483.84,220.63 L487.73,220.63 L491.62,251.25 L495.51,251.25 L499.40,251.25 L503.29,251.25 L507.18,251.25 L511.07,251.25 L514.96,251.25 L518.85,293.15 L522.74,293.15 L526.63,293.15 L530.52,276.50 L534.41,220.64 L538.30,220.64 L542.19,230.75 L546.08,230.75 L549.97,230.75 L553.86,230.75 L557.75,230.75 L561.64,230.75 L565.53,256.16 L569.42,256.16 L573.31,256.16 L577.20,256.16 L581.09,256.16 L584.98,256.16 L588.87,251.29 L592.76,251.29 L596.65,251.29 L600.54,251.29 L604.43,251.29 L608.32,251.29 L612.21,301.69 L616.10,301.69 L619.99,298.76 L623.88,276.50 L627.77,276.50 L631.66,276.50 L635.55,276.50 L639.44,276.50 L643.33,276.50 L647.22,276.50 L651.11,276.50 L655.00,276.50 L658.89,276.50 L662.78,223.97 L666.67,223.97 L670.56,223.97 L674.45,223.97 L678.34,223.97 L682.23,223.97 L686.12,213.67 L690.01,213.67 L693.90,213.67 L697.79,213.67 L701.68,213.67 L705.57,213.67 L709.46,213.67 L713.35,299.15 L717.24,299.15 L721.13,299.15 L725.02,276.50 L728.91,276.50 L730.00,276.50" fill="none" stroke="#6a95ee" stroke-width="1.2" stroke-linejoin="miter"/><path d="M266.00,280.29 L269.89,280.29 L273.78,253.76 L277.67,253.76 L281.56,253.76 L285.45,229.54 L289.34,229.54 L293.23,229.54 L297.12,229.54 L301.01,229.54 L304.90,229.54 L308.79,258.12 L312.68,258.12 L316.57,258.12 L320.46,258.12 L324.35,258.12 L328.24,258.12 L332.13,258.12 L336.02,214.30 L339.91,214.30 L343.80,214.30 L347.69,214.30 L351.58,214.30 L355.47,207.30 L359.36,207.30 L363.25,207.30 L367.14,207.30 L371.03,275.68 L374.92,275.68 L378.81,275.68 L382.70,275.68 L386.59,275.68 L390.48,275.68 L394.37,275.68 L398.26,265.53 L402.15,265.53 L406.04,280.50 L409.93,280.50 L413.82,280.50 L417.71,280.50 L421.60,280.50 L425.49,280.50 L429.38,274.42 L433.27,274.42 L437.16,274.42 L441.05,274.42 L444.94,308.39 L448.83,308.39 L452.72,308.39 L456.61,258.06 L460.50,258.06 L464.39,218.04 L468.28,218.04 L472.17,218.04 L476.06,218.04 L479.95,218.04 L483.84,218.04 L487.73,218.04 L491.62,309.37 L495.51,309.37 L499.40,309.37 L503.29,276.50 L507.18,276.50 L511.07,276.50 L514.96,214.03 L518.85,214.03 L522.74,214.03 L526.63,214.03 L530.52,280.35 L534.41,280.35 L538.30,280.35 L542.19,280.35 L546.08,280.35 L549.97,218.03 L553.86,218.03 L557.75,218.03 L561.64,218.03 L565.53,225.03 L569.42,225.03 L573.31,225.03 L577.20,168.46 L581.09,168.46 L584.98,168.46 L588.87,168.46 L592.76,168.46 L596.65,168.46 L600.54,168.46 L604.43,319.18 L608.32,319.18 L612.21,319.18 L616.10,276.50 L619.99,276.50 L623.88,276.50 L627.77,276.50 L631.66,275.20 L635.55,275.20 L639.44,275.20 L643.33,275.20 L647.22,280.01 L651.11,280.01 L655.00,280.01 L658.89,185.91 L662.78,185.91 L666.67,185.91 L670.56,185.91 L674.45,185.91 L678.34,185.91 L682.23,185.91 L686.12,229.02 L690.01,229.02 L693.90,229.02 L697.79,259.46 L701.68,259.46 L705.57,259.46 L709.46,259.46 L713.35,218.36 L717.24,218.36 L721.13,218.36 L725.02,277.19 L728.91,277.19 L730.00,277.19" fill="none" stroke="#6a95ee" stroke-width="1.2" stroke-linejoin="miter"/><path d="M266.00,212.54 L269.89,212.54 L273.78,212.54 L277.67,212.54 L281.56,212.54 L285.45,212.54 L289.34,212.54 L293.23,245.13 L297.12,245.13 L301.01,245.13 L304.90,245.13 L308.79,276.31 L312.68,276.31 L316.57,179.92 L320.46,179.92 L324.35,179.92 L328.24,173.87 L332.13,173.87 L336.02,173.87 L339.91,173.87 L343.80,173.87 L347.69,271.36 L351.58,271.36 L355.47,219.92 L359.36,219.92 L363.25,219.92 L367.14,266.95 L371.03,266.95 L374.92,266.95 L378.81,266.95 L382.70,266.95 L386.59,266.95 L390.48,266.95 L394.37,222.35 L398.26,222.35 L402.15,222.35 L406.04,249.82 L409.93,249.82 L413.82,249.82 L417.71,249.82 L421.60,249.82 L425.49,249.82 L429.38,249.82 L433.27,207.11 L437.16,207.11 L441.05,207.11 L444.94,207.11 L448.83,268.25 L452.72,268.25 L456.61,268.25 L460.50,253.82 L464.39,253.82 L468.28,253.82 L472.17,214.14 L476.06,214.14 L479.95,214.14 L483.84,214.14 L487.73,205.01 L491.62,205.01 L495.51,205.01 L499.40,205.01 L503.29,205.01 L507.18,211.50 L511.07,211.50 L514.96,211.50 L518.85,211.50 L522.74,270.42 L526.63,270.42 L530.52,270.42 L534.41,270.42 L538.30,270.42 L542.19,270.42 L546.08,203.64 L549.97,203.64 L553.86,203.64 L557.75,203.64 L561.64,203.64 L565.53,203.64 L569.42,203.64 L573.31,277.87 L577.20,277.87 L581.09,277.87 L584.98,277.87 L588.87,277.87 L592.76,277.87 L596.65,277.87 L600.54,246.38 L604.43,246.38 L608.32,246.38 L612.21,246.38 L616.10,246.38 L619.99,268.82 L623.88,268.82 L627.77,268.82 L631.66,268.82 L635.55,268.82 L639.44,268.82 L643.33,268.82 L647.22,282.14 L651.11,282.14 L655.00,201.21 L658.89,201.21 L662.78,264.64 L666.67,264.64 L670.56,264.64 L674.45,264.64 L678.34,264.64 L682.23,264.64 L686.12,204.89 L690.01,204.89 L693.90,204.89 L697.79,204.89 L701.68,204.89 L705.57,204.89 L709.46,264.23 L713.35,264.23 L717.24,264.23 L721.13,264.23 L725.02,241.76 L728.91,241.76 L730.00,241.76" fill="none" stroke="#6a95ee" stroke-width="1.2" stroke-linejoin="miter"/></g><rect x="214.00" y="394.00" width="18.00" height="5.00" rx="1.5" fill="#6a95ee" /><text x="241.50" y="401.70" font-size="15.86" fill="#ccccdc" text-anchor="start" font-weight="normal"  textLength="82.14" lengthAdjust="spacingAndGlyphs" stroke="#ccccdc" stroke-width="0.3">RR memory</text><rect x="337.00" y="394.00" width="18.00" height="5.00" rx="1.5" fill="#6a95ee" /><text x="364.50" y="401.70" font-size="15.86" fill="#ccccdc" text-anchor="start" font-weight="normal"  textLength="82.14" lengthAdjust="spacingAndGlyphs" stroke="#ccccdc" stroke-width="0.3">RR memory</text><rect x="460.00" y="394.00" width="18.00" height="5.00" rx="1.5" fill="#6a95ee" /><text x="487.50" y="401.70" font-size="15.86" fill="#ccccdc" text-anchor="start" font-weight="normal"  textLength="82.14" lengthAdjust="spacingAndGlyphs" stroke="#ccccdc" stroke-width="0.3">RR memory</text><rect x="583.00" y="394.00" width="18.00" height="5.00" rx="1.5" fill="#6a95ee" /><text x="610.50" y="401.70" font-size="15.86" fill="#ccccdc" text-anchor="start" font-weight="normal"  textLength="82.14" lengthAdjust="spacingAndGlyphs" stroke="#ccccdc" stroke-width="0.3">RR memory</text><rect x="214.00" y="423.50" width="18.00" height="5.00" rx="1.5" fill="#6a95ee" /><text x="241.50" y="431.20" font-size="15.86" fill="#ccccdc" text-anchor="start" font-weight="normal"  textLength="82.14" lengthAdjust="spacingAndGlyphs" stroke="#ccccdc" stroke-width="0.3">RR memory</text><rect x="337.00" y="423.50" width="18.00" height="5.00" rx="1.5" fill="#6a95ee" /><text x="364.50" y="431.20" font-size="15.86" fill="#ccccdc" text-anchor="start" font-weight="normal"  textLength="82.14" lengthAdjust="spacingAndGlyphs" stroke="#ccccdc" stroke-width="0.3">RR memory</text><rect x="460.00" y="423.50" width="18.00" height="5.00" rx="1.5" fill="#6a95ee" /><text x="487.50" y="431.20" font-size="15.86" fill="#ccccdc" text-anchor="start" font-weight="normal"  textLength="82.14" lengthAdjust="spacingAndGlyphs" stroke="#ccccdc" stroke-width="0.3">RR memory</text><line x1="800.60" y1="112.40" x2="1353.50" y2="112.40" stroke="rgba(240,250,255,0.09)" stroke-width="1"/><text x="793.60" y="117.20" font-size="15.45" fill="#c7c7d1" text-anchor="end" font-weight="normal"  textLength="16.68" lengthAdjust="spacingAndGlyphs" stroke="#c7c7d1" stroke-width="0.3">41</text><line x1="800.60" y1="160.45" x2="1353.50" y2="160.45" stroke="rgba(240,250,255,0.09)" stroke-width="1"/><text x="793.60" y="165.25" font-size="15.45" fill="#c7c7d1" text-anchor="end" font-weight="normal"  textLength="16.68" lengthAdjust="spacingAndGlyphs" stroke="#c7c7d1" stroke-width="0.3">40</text><line x1="800.60" y1="208.50" x2="1353.50" y2="208.50" stroke="rgba(240,250,255,0.09)" stroke-width="1"/><text x="793.60" y="213.30" font-size="15.45" fill="#c7c7d1" text-anchor="end" font-weight="normal"  textLength="16.68" lengthAdjust="spacingAndGlyphs" stroke="#c7c7d1" stroke-width="0.3">39</text><line x1="800.60" y1="256.55" x2="1353.50" y2="256.55" stroke="rgba(240,250,255,0.09)" stroke-width="1"/><text x="793.60" y="261.35" font-size="15.45" fill="#c7c7d1" text-anchor="end" font-weight="normal"  textLength="16.68" lengthAdjust="spacingAndGlyphs" stroke="#c7c7d1" stroke-width="0.3">38</text><line x1="800.60" y1="304.60" x2="1353.50" y2="304.60" stroke="rgba(240,250,255,0.09)" stroke-width="1"/><text x="793.60" y="309.40" font-size="15.45" fill="#c7c7d1" text-anchor="end" font-weight="normal"  textLength="16.68" lengthAdjust="spacingAndGlyphs" stroke="#c7c7d1" stroke-width="0.3">37</text><line x1="871.80" y1="93.80" x2="871.80" y2="328.00" stroke="rgba(240,250,255,0.09)" stroke-width="1"/><text x="871.80" y="346.30" font-size="14.52" fill="#c7c7d1" text-anchor="middle" font-weight="normal"  textLength="35.28" lengthAdjust="spacingAndGlyphs" stroke="#c7c7d1" stroke-width="0.3">17:15</text><line x1="963.00" y1="93.80" x2="963.00" y2="328.00" stroke="rgba(240,250,255,0.09)" stroke-width="1"/><text x="963.00" y="346.30" font-size="14.52" fill="#c7c7d1" text-anchor="middle" font-weight="normal"  textLength="35.28" lengthAdjust="spacingAndGlyphs" stroke="#c7c7d1" stroke-width="0.3">17:20</text><line x1="1054.20" y1="93.80" x2="1054.20" y2="328.00" stroke="rgba(240,250,255,0.09)" stroke-width="1"/><text x="1054.20" y="346.30" font-size="14.52" fill="#c7c7d1" text-anchor="middle" font-weight="normal"  textLength="35.28" lengthAdjust="spacingAndGlyphs" stroke="#c7c7d1" stroke-width="0.3">17:25</text><line x1="1145.40" y1="93.80" x2="1145.40" y2="328.00" stroke="rgba(240,250,255,0.09)" stroke-width="1"/><text x="1145.40" y="346.30" font-size="14.52" fill="#c7c7d1" text-anchor="middle" font-weight="normal"  textLength="35.28" lengthAdjust="spacingAndGlyphs" stroke="#c7c7d1" stroke-width="0.3">17:30</text><line x1="1236.60" y1="93.80" x2="1236.60" y2="328.00" stroke="rgba(240,250,255,0.09)" stroke-width="1"/><text x="1236.60" y="346.30" font-size="14.52" fill="#c7c7d1" text-anchor="middle" font-weight="normal"  textLength="35.28" lengthAdjust="spacingAndGlyphs" stroke="#c7c7d1" stroke-width="0.3">17:35</text><line x1="1327.80" y1="93.80" x2="1327.80" y2="328.00" stroke="rgba(240,250,255,0.09)" stroke-width="1"/><text x="1327.80" y="346.30" font-size="14.52" fill="#c7c7d1" text-anchor="middle" font-weight="normal"  textLength="35.28" lengthAdjust="spacingAndGlyphs" stroke="#c7c7d1" stroke-width="0.3">17:40</text><clipPath id="c2"><rect x="806" y="90.8" width="545" height="232.8"/></clipPath><g clip-path="url(#c2)"><path d="M806.00,256.55 L810.58,256.55 L815.16,256.55 L819.74,208.50 L824.32,208.50 L828.90,208.50 L833.48,208.50 L838.06,256.55 L842.64,256.55 L847.22,256.55 L851.80,256.55 L856.38,256.55 L860.96,256.55 L865.54,208.50 L870.12,256.55 L874.70,256.55 L879.28,256.55 L883.86,256.55 L888.44,208.50 L893.02,256.55 L897.60,256.55 L902.18,256.55 L906.76,256.55 L911.34,256.55 L915.92,256.55 L920.50,256.55 L925.08,208.50 L929.66,208.50 L934.24,208.50 L938.82,208.50 L943.39,208.50 L947.97,208.50 L952.55,208.50 L957.13,208.50 L961.71,208.50 L966.29,256.55 L970.87,256.55 L975.45,256.55 L980.03,256.55 L984.61,256.55 L989.19,256.55 L993.77,256.55 L998.35,256.55 L1002.93,256.55 L1007.51,208.50 L1012.09,208.50 L1016.67,208.50 L1021.25,208.50 L1025.83,256.55 L1030.41,256.55 L1034.99,256.55 L1039.57,256.55 L1044.15,256.55 L1048.73,208.50 L1053.31,208.50 L1057.89,256.55 L1062.47,256.55 L1067.05,256.55 L1071.63,256.55 L1076.21,256.55 L1080.79,208.50 L1085.37,208.50 L1089.95,208.50 L1094.53,208.50 L1099.11,208.50 L1103.69,256.55 L1108.27,208.50 L1112.85,208.50 L1117.43,208.50 L1122.01,208.50 L1126.59,208.50 L1131.17,208.50 L1135.75,256.55 L1140.33,256.55 L1144.91,256.55 L1149.49,256.55 L1154.07,256.55 L1158.65,256.55 L1163.23,256.55 L1167.81,256.55 L1172.39,256.55 L1176.97,256.55 L1181.55,256.55 L1186.13,208.50 L1190.71,208.50 L1195.29,208.50 L1199.87,208.50 L1204.45,208.50 L1209.03,256.55 L1213.61,256.55 L1218.18,256.55 L1222.76,256.55 L1227.34,256.55 L1231.92,256.55 L1236.50,256.55 L1241.08,256.55 L1245.66,256.55 L1250.24,208.50 L1254.82,256.55 L1259.40,256.55 L1263.98,256.55 L1268.56,256.55 L1273.14,208.50 L1277.72,208.50 L1282.30,208.50 L1286.88,208.50 L1291.46,208.50 L1296.04,208.50 L1300.62,208.50 L1305.20,208.50 L1309.78,208.50 L1314.36,208.50 L1318.94,208.50 L1323.52,208.50 L1328.10,256.55 L1332.68,160.45 L1337.26,160.45 L1341.84,160.45 L1346.42,160.45 L1351.00,256.55 L1351.00,323.60 L806.00,323.60 Z" fill="url(#lgc2)" stroke="none"/><path d="M806.00,256.55 L810.58,256.55 L815.16,208.50 L819.74,208.50 L824.32,208.50 L828.90,208.50 L833.48,256.55 L838.06,256.55 L842.64,256.55 L847.22,256.55 L851.80,208.50 L856.38,208.50 L860.96,208.50 L865.54,256.55 L870.12,256.55 L874.70,256.55 L879.28,256.55 L883.86,256.55 L888.44,256.55 L893.02,256.55 L897.60,256.55 L902.18,256.55 L906.76,256.55 L911.34,256.55 L915.92,256.55 L920.50,256.55 L925.08,256.55 L929.66,256.55 L934.24,256.55 L938.82,256.55 L943.39,256.55 L947.97,256.55 L952.55,256.55 L957.13,256.55 L961.71,256.55 L966.29,256.55 L970.87,256.55 L975.45,256.55 L980.03,256.55 L984.61,256.55 L989.19,256.55 L993.77,256.55 L998.35,256.55 L1002.93,256.55 L1007.51,256.55 L1012.09,256.55 L1016.67,256.55 L1021.25,256.55 L1025.83,256.55 L1030.41,256.55 L1034.99,256.55 L1039.57,208.50 L1044.15,208.50 L1048.73,208.50 L1053.31,208.50 L1057.89,208.50 L1062.47,208.50 L1067.05,256.55 L1071.63,256.55 L1076.21,256.55 L1080.79,256.55 L1085.37,256.55 L1089.95,256.55 L1094.53,256.55 L1099.11,256.55 L1103.69,256.55 L1108.27,256.55 L1112.85,256.55 L1117.43,256.55 L1122.01,256.55 L1126.59,256.55 L1131.17,256.55 L1135.75,256.55 L1140.33,256.55 L1144.91,256.55 L1149.49,256.55 L1154.07,256.55 L1158.65,208.50 L1163.23,208.50 L1167.81,208.50 L1172.39,208.50 L1176.97,208.50 L1181.55,208.50 L1186.13,208.50 L1190.71,208.50 L1195.29,208.50 L1199.87,208.50 L1204.45,256.55 L1209.03,256.55 L1213.61,256.55 L1218.18,256.55 L1222.76,256.55 L1227.34,256.55 L1231.92,256.55 L1236.50,256.55 L1241.08,256.55 L1245.66,256.55 L1250.24,256.55 L1254.82,256.55 L1259.40,256.55 L1263.98,256.55 L1268.56,256.55 L1273.14,256.55 L1277.72,256.55 L1282.30,256.55 L1286.88,256.55 L1291.46,256.55 L1296.04,256.55 L1300.62,256.55 L1305.20,256.55 L1309.78,256.55 L1314.36,256.55 L1318.94,256.55 L1323.52,256.55 L1328.10,208.50 L1332.68,208.50 L1337.26,208.50 L1341.84,208.50 L1346.42,208.50 L1351.00,256.55 L1351.00,323.60 L806.00,323.60 Z" fill="url(#lgc2)" stroke="none"/><path d="M806.00,256.55 L810.58,256.55 L815.16,256.55 L819.74,256.55 L824.32,208.50 L828.90,208.50 L833.48,208.50 L838.06,208.50 L842.64,208.50 L847.22,256.55 L851.80,256.55 L856.38,256.55 L860.96,256.55 L865.54,256.55 L870.12,208.50 L874.70,256.55 L879.28,256.55 L883.86,256.55 L888.44,256.55 L893.02,208.50 L897.60,208.50 L902.18,208.50 L906.76,208.50 L911.34,208.50 L915.92,208.50 L920.50,208.50 L925.08,208.50 L929.66,256.55 L934.24,256.55 L938.82,256.55 L943.39,256.55 L947.97,256.55 L952.55,256.55 L957.13,256.55 L961.71,256.55 L966.29,256.55 L970.87,256.55 L975.45,256.55 L980.03,256.55 L984.61,256.55 L989.19,256.55 L993.77,256.55 L998.35,256.55 L1002.93,256.55 L1007.51,256.55 L1012.09,208.50 L1016.67,256.55 L1021.25,208.50 L1025.83,208.50 L1030.41,208.50 L1034.99,208.50 L1039.57,208.50 L1044.15,208.50 L1048.73,256.55 L1053.31,256.55 L1057.89,256.55 L1062.47,256.55 L1067.05,256.55 L1071.63,256.55 L1076.21,256.55 L1080.79,256.55 L1085.37,256.55 L1089.95,256.55 L1094.53,256.55 L1099.11,256.55 L1103.69,256.55 L1108.27,256.55 L1112.85,256.55 L1117.43,256.55 L1122.01,256.55 L1126.59,208.50 L1131.17,208.50 L1135.75,208.50 L1140.33,208.50 L1144.91,208.50 L1149.49,208.50 L1154.07,208.50 L1158.65,256.55 L1163.23,208.50 L1167.81,208.50 L1172.39,208.50 L1176.97,208.50 L1181.55,208.50 L1186.13,208.50 L1190.71,208.50 L1195.29,208.50 L1199.87,208.50 L1204.45,208.50 L1209.03,208.50 L1213.61,208.50 L1218.18,208.50 L1222.76,208.50 L1227.34,208.50 L1231.92,208.50 L1236.50,256.55 L1241.08,256.55 L1245.66,256.55 L1250.24,256.55 L1254.82,256.55 L1259.40,256.55 L1263.98,256.55 L1268.56,256.55 L1273.14,256.55 L1277.72,256.55 L1282.30,256.55 L1286.88,256.55 L1291.46,256.55 L1296.04,256.55 L1300.62,256.55 L1305.20,256.55 L1309.78,256.55 L1314.36,256.55 L1318.94,208.50 L1323.52,208.50 L1328.10,208.50 L1332.68,256.55 L1337.26,256.55 L1341.84,256.55 L1346.42,256.55 L1351.00,256.55 L1351.00,323.60 L806.00,323.60 Z" fill="url(#lgc2)" stroke="none"/><path d="M806.00,256.55 L810.58,256.55 L815.16,256.55 L819.74,208.50 L824.32,208.50 L828.90,208.50 L833.48,208.50 L838.06,208.50 L842.64,256.55 L847.22,256.55 L851.80,208.50 L856.38,208.50 L860.96,208.50 L865.54,208.50 L870.12,208.50 L874.70,256.55 L879.28,256.55 L883.86,256.55 L888.44,256.55 L893.02,256.55 L897.60,256.55 L902.18,208.50 L906.76,208.50 L911.34,208.50 L915.92,208.50 L920.50,208.50 L925.08,208.50 L929.66,208.50 L934.24,256.55 L938.82,256.55 L943.39,256.55 L947.97,256.55 L952.55,208.50 L957.13,208.50 L961.71,256.55 L966.29,256.55 L970.87,256.55 L975.45,256.55 L980.03,256.55 L984.61,256.55 L989.19,256.55 L993.77,208.50 L998.35,208.50 L1002.93,208.50 L1007.51,208.50 L1012.09,256.55 L1016.67,256.55 L1021.25,256.55 L1025.83,256.55 L1030.41,208.50 L1034.99,208.50 L1039.57,208.50 L1044.15,208.50 L1048.73,256.55 L1053.31,256.55 L1057.89,256.55 L1062.47,208.50 L1067.05,208.50 L1071.63,208.50 L1076.21,208.50 L1080.79,208.50 L1085.37,208.50 L1089.95,208.50 L1094.53,208.50 L1099.11,208.50 L1103.69,208.50 L1108.27,208.50 L1112.85,208.50 L1117.43,208.50 L1122.01,256.55 L1126.59,256.55 L1131.17,256.55 L1135.75,256.55 L1140.33,256.55 L1144.91,256.55 L1149.49,256.55 L1154.07,256.55 L1158.65,256.55 L1163.23,256.55 L1167.81,256.55 L1172.39,256.55 L1176.97,256.55 L1181.55,256.55 L1186.13,208.50 L1190.71,208.50 L1195.29,208.50 L1199.87,208.50 L1204.45,256.55 L1209.03,256.55 L1213.61,208.50 L1218.18,208.50 L1222.76,208.50 L1227.34,208.50 L1231.92,208.50 L1236.50,256.55 L1241.08,256.55 L1245.66,256.55 L1250.24,256.55 L1254.82,256.55 L1259.40,256.55 L1263.98,256.55 L1268.56,256.55 L1273.14,256.55 L1277.72,256.55 L1282.30,256.55 L1286.88,256.55 L1291.46,256.55 L1296.04,256.55 L1300.62,256.55 L1305.20,208.50 L1309.78,208.50 L1314.36,208.50 L1318.94,256.55 L1323.52,256.55 L1328.10,256.55 L1332.68,256.55 L1337.26,256.55 L1341.84,208.50 L1346.42,208.50 L1351.00,208.50 L1351.00,323.60 L806.00,323.60 Z" fill="url(#lgc2)" stroke="none"/><path d="M806.00,256.55 L810.58,256.55 L815.16,256.55 L819.74,256.55 L824.32,256.55 L828.90,256.55 L833.48,208.50 L838.06,208.50 L842.64,208.50 L847.22,208.50 L851.80,256.55 L856.38,256.55 L860.96,256.55 L865.54,256.55 L870.12,256.55 L874.70,256.55 L879.28,256.55 L883.86,256.55 L888.44,256.55 L893.02,256.55 L897.60,256.55 L902.18,256.55 L906.76,256.55 L911.34,208.50 L915.92,208.50 L920.50,208.50 L925.08,208.50 L929.66,208.50 L934.24,256.55 L938.82,256.55 L943.39,256.55 L947.97,256.55 L952.55,256.55 L957.13,256.55 L961.71,208.50 L966.29,208.50 L970.87,208.50 L975.45,208.50 L980.03,208.50 L984.61,256.55 L989.19,256.55 L993.77,256.55 L998.35,256.55 L1002.93,256.55 L1007.51,256.55 L1012.09,256.55 L1016.67,256.55 L1021.25,256.55 L1025.83,256.55 L1030.41,256.55 L1034.99,208.50 L1039.57,208.50 L1044.15,208.50 L1048.73,208.50 L1053.31,208.50 L1057.89,208.50 L1062.47,208.50 L1067.05,208.50 L1071.63,208.50 L1076.21,208.50 L1080.79,208.50 L1085.37,208.50 L1089.95,208.50 L1094.53,208.50 L1099.11,208.50 L1103.69,208.50 L1108.27,208.50 L1112.85,208.50 L1117.43,208.50 L1122.01,208.50 L1126.59,208.50 L1131.17,208.50 L1135.75,208.50 L1140.33,208.50 L1144.91,256.55 L1149.49,256.55 L1154.07,256.55 L1158.65,208.50 L1163.23,208.50 L1167.81,208.50 L1172.39,208.50 L1176.97,208.50 L1181.55,256.55 L1186.13,256.55 L1190.71,256.55 L1195.29,256.55 L1199.87,256.55 L1204.45,256.55 L1209.03,256.55 L1213.61,256.55 L1218.18,256.55 L1222.76,256.55 L1227.34,256.55 L1231.92,256.55 L1236.50,256.55 L1241.08,256.55 L1245.66,256.55 L1250.24,256.55 L1254.82,256.55 L1259.40,256.55 L1263.98,256.55 L1268.56,256.55 L1273.14,256.55 L1277.72,256.55 L1282.30,256.55 L1286.88,256.55 L1291.46,256.55 L1296.04,256.55 L1300.62,256.55 L1305.20,208.50 L1309.78,208.50 L1314.36,208.50 L1318.94,208.50 L1323.52,208.50 L1328.10,208.50 L1332.68,208.50 L1337.26,208.50 L1341.84,208.50 L1346.42,256.55 L1351.00,256.55 L1351.00,323.60 L806.00,323.60 Z" fill="url(#lgc2)" stroke="none"/><path d="M806.00,160.45 L810.58,160.45 L815.16,208.50 L819.74,208.50 L824.32,208.50 L828.90,208.50 L833.48,208.50 L838.06,208.50 L842.64,208.50 L847.22,208.50 L851.80,208.50 L856.38,208.50 L860.96,208.50 L865.54,208.50 L870.12,208.50 L874.70,160.45 L879.28,160.45 L883.86,160.45 L888.44,160.45 L893.02,208.50 L897.60,208.50 L902.18,208.50 L906.76,208.50 L911.34,208.50 L915.92,256.55 L920.50,208.50 L925.08,208.50 L929.66,208.50 L934.24,208.50 L938.82,208.50 L943.39,208.50 L947.97,208.50 L952.55,208.50 L957.13,208.50 L961.71,208.50 L966.29,112.40 L970.87,112.40 L975.45,112.40 L980.03,112.40 L984.61,160.45 L989.19,160.45 L993.77,160.45 L998.35,208.50 L1002.93,208.50 L1007.51,208.50 L1012.09,208.50 L1016.67,208.50 L1021.25,208.50 L1025.83,208.50 L1030.41,208.50 L1034.99,208.50 L1039.57,208.50 L1044.15,208.50 L1048.73,208.50 L1053.31,208.50 L1057.89,208.50 L1062.47,208.50 L1067.05,256.55 L1071.63,208.50 L1076.21,208.50 L1080.79,208.50 L1085.37,208.50 L1089.95,208.50 L1094.53,208.50 L1099.11,208.50 L1103.69,208.50 L1108.27,208.50 L1112.85,208.50 L1117.43,208.50 L1122.01,208.50 L1126.59,208.50 L1131.17,208.50 L1135.75,208.50 L1140.33,208.50 L1144.91,208.50 L1149.49,208.50 L1154.07,208.50 L1158.65,208.50 L1163.23,208.50 L1167.81,160.45 L1172.39,160.45 L1176.97,160.45 L1181.55,160.45 L1186.13,160.45 L1190.71,160.45 L1195.29,160.45 L1199.87,160.45 L1204.45,208.50 L1209.03,208.50 L1213.61,208.50 L1218.18,208.50 L1222.76,160.45 L1227.34,160.45 L1231.92,160.45 L1236.50,160.45 L1241.08,208.50 L1245.66,208.50 L1250.24,256.55 L1254.82,208.50 L1259.40,208.50 L1263.98,208.50 L1268.56,208.50 L1273.14,208.50 L1277.72,160.45 L1282.30,160.45 L1286.88,160.45 L1291.46,160.45 L1296.04,208.50 L1300.62,208.50 L1305.20,208.50 L1309.78,208.50 L1314.36,160.45 L1318.94,160.45 L1323.52,160.45 L1328.10,160.45 L1332.68,208.50 L1337.26,208.50 L1341.84,208.50 L1346.42,208.50 L1351.00,160.45 L1351.00,323.60 L806.00,323.60 Z" fill="url(#lgc2)" stroke="none"/><path d="M806.00,256.55 L810.58,256.55 L815.16,256.55 L819.74,256.55 L824.32,256.55 L828.90,256.55 L833.48,256.55 L838.06,256.55 L842.64,256.55 L847.22,256.55 L851.80,256.55 L856.38,256.55 L860.96,208.50 L865.54,208.50 L870.12,208.50 L874.70,208.50 L879.28,256.55 L883.86,256.55 L888.44,208.50 L893.02,208.50 L897.60,208.50 L902.18,208.50 L906.76,208.50 L911.34,256.55 L915.92,256.55 L920.50,256.55 L925.08,256.55 L929.66,256.55 L934.24,208.50 L938.82,208.50 L943.39,208.50 L947.97,208.50 L952.55,208.50 L957.13,208.50 L961.71,256.55 L966.29,256.55 L970.87,256.55 L975.45,256.55 L980.03,256.55 L984.61,208.50 L989.19,208.50 L993.77,256.55 L998.35,256.55 L1002.93,256.55 L1007.51,256.55 L1012.09,256.55 L1016.67,256.55 L1021.25,256.55 L1025.83,256.55 L1030.41,256.55 L1034.99,256.55 L1039.57,256.55 L1044.15,256.55 L1048.73,256.55 L1053.31,256.55 L1057.89,256.55 L1062.47,256.55 L1067.05,256.55 L1071.63,256.55 L1076.21,256.55 L1080.79,208.50 L1085.37,208.50 L1089.95,208.50 L1094.53,256.55 L1099.11,256.55 L1103.69,256.55 L1108.27,256.55 L1112.85,256.55 L1117.43,256.55 L1122.01,256.55 L1126.59,208.50 L1131.17,304.60 L1135.75,304.60 L1140.33,304.60 L1144.91,304.60 L1149.49,208.50 L1154.07,208.50 L1158.65,208.50 L1163.23,208.50 L1167.81,208.50 L1172.39,208.50 L1176.97,256.55 L1181.55,256.55 L1186.13,256.55 L1190.71,256.55 L1195.29,304.60 L1199.87,304.60 L1204.45,304.60 L1209.03,304.60 L1213.61,256.55 L1218.18,256.55 L1222.76,256.55 L1227.34,208.50 L1231.92,256.55 L1236.50,256.55 L1241.08,256.55 L1245.66,256.55 L1250.24,256.55 L1254.82,208.50 L1259.40,208.50 L1263.98,208.50 L1268.56,256.55 L1273.14,256.55 L1277.72,256.55 L1282.30,256.55 L1286.88,208.50 L1291.46,208.50 L1296.04,208.50 L1300.62,208.50 L1305.20,256.55 L1309.78,256.55 L1314.36,256.55 L1318.94,208.50 L1323.52,208.50 L1328.10,208.50 L1332.68,208.50 L1337.26,256.55 L1341.84,256.55 L1346.42,256.55 L1351.00,256.55 L1351.00,323.60 L806.00,323.60 Z" fill="url(#lgc2)" stroke="none"/><path d="M806.00,256.55 L810.58,256.55 L815.16,256.55 L819.74,208.50 L824.32,208.50 L828.90,208.50 L833.48,208.50 L838.06,256.55 L842.64,256.55 L847.22,256.55 L851.80,256.55 L856.38,256.55 L860.96,256.55 L865.54,208.50 L870.12,256.55 L874.70,256.55 L879.28,256.55 L883.86,256.55 L888.44,208.50 L893.02,256.55 L897.60,256.55 L902.18,256.55 L906.76,256.55 L911.34,256.55 L915.92,256.55 L920.50,256.55 L925.08,208.50 L929.66,208.50 L934.24,208.50 L938.82,208.50 L943.39,208.50 L947.97,208.50 L952.55,208.50 L957.13,208.50 L961.71,208.50 L966.29,256.55 L970.87,256.55 L975.45,256.55 L980.03,256.55 L984.61,256.55 L989.19,256.55 L993.77,256.55 L998.35,256.55 L1002.93,256.55 L1007.51,208.50 L1012.09,208.50 L1016.67,208.50 L1021.25,208.50 L1025.83,256.55 L1030.41,256.55 L1034.99,256.55 L1039.57,256.55 L1044.15,256.55 L1048.73,208.50 L1053.31,208.50 L1057.89,256.55 L1062.47,256.55 L1067.05,256.55 L1071.63,256.55 L1076.21,256.55 L1080.79,208.50 L1085.37,208.50 L1089.95,208.50 L1094.53,208.50 L1099.11,208.50 L1103.69,256.55 L1108.27,208.50 L1112.85,208.50 L1117.43,208.50 L1122.01,208.50 L1126.59,208.50 L1131.17,208.50 L1135.75,256.55 L1140.33,256.55 L1144.91,256.55 L1149.49,256.55 L1154.07,256.55 L1158.65,256.55 L1163.23,256.55 L1167.81,256.55 L1172.39,256.55 L1176.97,256.55 L1181.55,256.55 L1186.13,208.50 L1190.71,208.50 L1195.29,208.50 L1199.87,208.50 L1204.45,208.50 L1209.03,256.55 L1213.61,256.55 L1218.18,256.55 L1222.76,256.55 L1227.34,256.55 L1231.92,256.55 L1236.50,256.55 L1241.08,256.55 L1245.66,256.55 L1250.24,208.50 L1254.82,256.55 L1259.40,256.55 L1263.98,256.55 L1268.56,256.55 L1273.14,208.50 L1277.72,208.50 L1282.30,208.50 L1286.88,208.50 L1291.46,208.50 L1296.04,208.50 L1300.62,208.50 L1305.20,208.50 L1309.78,208.50 L1314.36,208.50 L1318.94,208.50 L1323.52,208.50 L1328.10,256.55 L1332.68,160.45 L1337.26,160.45 L1341.84,160.45 L1346.42,160.45 L1351.00,256.55" fill="none" stroke="#b47ad8" stroke-width="1.15" stroke-linejoin="miter"/><path d="M806.00,256.55 L810.58,256.55 L815.16,208.50 L819.74,208.50 L824.32,208.50 L828.90,208.50 L833.48,256.55 L838.06,256.55 L842.64,256.55 L847.22,256.55 L851.80,208.50 L856.38,208.50 L860.96,208.50 L865.54,256.55 L870.12,256.55 L874.70,256.55 L879.28,256.55 L883.86,256.55 L888.44,256.55 L893.02,256.55 L897.60,256.55 L902.18,256.55 L906.76,256.55 L911.34,256.55 L915.92,256.55 L920.50,256.55 L925.08,256.55 L929.66,256.55 L934.24,256.55 L938.82,256.55 L943.39,256.55 L947.97,256.55 L952.55,256.55 L957.13,256.55 L961.71,256.55 L966.29,256.55 L970.87,256.55 L975.45,256.55 L980.03,256.55 L984.61,256.55 L989.19,256.55 L993.77,256.55 L998.35,256.55 L1002.93,256.55 L1007.51,256.55 L1012.09,256.55 L1016.67,256.55 L1021.25,256.55 L1025.83,256.55 L1030.41,256.55 L1034.99,256.55 L1039.57,208.50 L1044.15,208.50 L1048.73,208.50 L1053.31,208.50 L1057.89,208.50 L1062.47,208.50 L1067.05,256.55 L1071.63,256.55 L1076.21,256.55 L1080.79,256.55 L1085.37,256.55 L1089.95,256.55 L1094.53,256.55 L1099.11,256.55 L1103.69,256.55 L1108.27,256.55 L1112.85,256.55 L1117.43,256.55 L1122.01,256.55 L1126.59,256.55 L1131.17,256.55 L1135.75,256.55 L1140.33,256.55 L1144.91,256.55 L1149.49,256.55 L1154.07,256.55 L1158.65,208.50 L1163.23,208.50 L1167.81,208.50 L1172.39,208.50 L1176.97,208.50 L1181.55,208.50 L1186.13,208.50 L1190.71,208.50 L1195.29,208.50 L1199.87,208.50 L1204.45,256.55 L1209.03,256.55 L1213.61,256.55 L1218.18,256.55 L1222.76,256.55 L1227.34,256.55 L1231.92,256.55 L1236.50,256.55 L1241.08,256.55 L1245.66,256.55 L1250.24,256.55 L1254.82,256.55 L1259.40,256.55 L1263.98,256.55 L1268.56,256.55 L1273.14,256.55 L1277.72,256.55 L1282.30,256.55 L1286.88,256.55 L1291.46,256.55 L1296.04,256.55 L1300.62,256.55 L1305.20,256.55 L1309.78,256.55 L1314.36,256.55 L1318.94,256.55 L1323.52,256.55 L1328.10,208.50 L1332.68,208.50 L1337.26,208.50 L1341.84,208.50 L1346.42,208.50 L1351.00,256.55" fill="none" stroke="#b47ad8" stroke-width="1.15" stroke-linejoin="miter"/><path d="M806.00,256.55 L810.58,256.55 L815.16,256.55 L819.74,256.55 L824.32,208.50 L828.90,208.50 L833.48,208.50 L838.06,208.50 L842.64,208.50 L847.22,256.55 L851.80,256.55 L856.38,256.55 L860.96,256.55 L865.54,256.55 L870.12,208.50 L874.70,256.55 L879.28,256.55 L883.86,256.55 L888.44,256.55 L893.02,208.50 L897.60,208.50 L902.18,208.50 L906.76,208.50 L911.34,208.50 L915.92,208.50 L920.50,208.50 L925.08,208.50 L929.66,256.55 L934.24,256.55 L938.82,256.55 L943.39,256.55 L947.97,256.55 L952.55,256.55 L957.13,256.55 L961.71,256.55 L966.29,256.55 L970.87,256.55 L975.45,256.55 L980.03,256.55 L984.61,256.55 L989.19,256.55 L993.77,256.55 L998.35,256.55 L1002.93,256.55 L1007.51,256.55 L1012.09,208.50 L1016.67,256.55 L1021.25,208.50 L1025.83,208.50 L1030.41,208.50 L1034.99,208.50 L1039.57,208.50 L1044.15,208.50 L1048.73,256.55 L1053.31,256.55 L1057.89,256.55 L1062.47,256.55 L1067.05,256.55 L1071.63,256.55 L1076.21,256.55 L1080.79,256.55 L1085.37,256.55 L1089.95,256.55 L1094.53,256.55 L1099.11,256.55 L1103.69,256.55 L1108.27,256.55 L1112.85,256.55 L1117.43,256.55 L1122.01,256.55 L1126.59,208.50 L1131.17,208.50 L1135.75,208.50 L1140.33,208.50 L1144.91,208.50 L1149.49,208.50 L1154.07,208.50 L1158.65,256.55 L1163.23,208.50 L1167.81,208.50 L1172.39,208.50 L1176.97,208.50 L1181.55,208.50 L1186.13,208.50 L1190.71,208.50 L1195.29,208.50 L1199.87,208.50 L1204.45,208.50 L1209.03,208.50 L1213.61,208.50 L1218.18,208.50 L1222.76,208.50 L1227.34,208.50 L1231.92,208.50 L1236.50,256.55 L1241.08,256.55 L1245.66,256.55 L1250.24,256.55 L1254.82,256.55 L1259.40,256.55 L1263.98,256.55 L1268.56,256.55 L1273.14,256.55 L1277.72,256.55 L1282.30,256.55 L1286.88,256.55 L1291.46,256.55 L1296.04,256.55 L1300.62,256.55 L1305.20,256.55 L1309.78,256.55 L1314.36,256.55 L1318.94,208.50 L1323.52,208.50 L1328.10,208.50 L1332.68,256.55 L1337.26,256.55 L1341.84,256.55 L1346.42,256.55 L1351.00,256.55" fill="none" stroke="#b47ad8" stroke-width="1.15" stroke-linejoin="miter"/><path d="M806.00,256.55 L810.58,256.55 L815.16,256.55 L819.74,208.50 L824.32,208.50 L828.90,208.50 L833.48,208.50 L838.06,208.50 L842.64,256.55 L847.22,256.55 L851.80,208.50 L856.38,208.50 L860.96,208.50 L865.54,208.50 L870.12,208.50 L874.70,256.55 L879.28,256.55 L883.86,256.55 L888.44,256.55 L893.02,256.55 L897.60,256.55 L902.18,208.50 L906.76,208.50 L911.34,208.50 L915.92,208.50 L920.50,208.50 L925.08,208.50 L929.66,208.50 L934.24,256.55 L938.82,256.55 L943.39,256.55 L947.97,256.55 L952.55,208.50 L957.13,208.50 L961.71,256.55 L966.29,256.55 L970.87,256.55 L975.45,256.55 L980.03,256.55 L984.61,256.55 L989.19,256.55 L993.77,208.50 L998.35,208.50 L1002.93,208.50 L1007.51,208.50 L1012.09,256.55 L1016.67,256.55 L1021.25,256.55 L1025.83,256.55 L1030.41,208.50 L1034.99,208.50 L1039.57,208.50 L1044.15,208.50 L1048.73,256.55 L1053.31,256.55 L1057.89,256.55 L1062.47,208.50 L1067.05,208.50 L1071.63,208.50 L1076.21,208.50 L1080.79,208.50 L1085.37,208.50 L1089.95,208.50 L1094.53,208.50 L1099.11,208.50 L1103.69,208.50 L1108.27,208.50 L1112.85,208.50 L1117.43,208.50 L1122.01,256.55 L1126.59,256.55 L1131.17,256.55 L1135.75,256.55 L1140.33,256.55 L1144.91,256.55 L1149.49,256.55 L1154.07,256.55 L1158.65,256.55 L1163.23,256.55 L1167.81,256.55 L1172.39,256.55 L1176.97,256.55 L1181.55,256.55 L1186.13,208.50 L1190.71,208.50 L1195.29,208.50 L1199.87,208.50 L1204.45,256.55 L1209.03,256.55 L1213.61,208.50 L1218.18,208.50 L1222.76,208.50 L1227.34,208.50 L1231.92,208.50 L1236.50,256.55 L1241.08,256.55 L1245.66,256.55 L1250.24,256.55 L1254.82,256.55 L1259.40,256.55 L1263.98,256.55 L1268.56,256.55 L1273.14,256.55 L1277.72,256.55 L1282.30,256.55 L1286.88,256.55 L1291.46,256.55 L1296.04,256.55 L1300.62,256.55 L1305.20,208.50 L1309.78,208.50 L1314.36,208.50 L1318.94,256.55 L1323.52,256.55 L1328.10,256.55 L1332.68,256.55 L1337.26,256.55 L1341.84,208.50 L1346.42,208.50 L1351.00,208.50" fill="none" stroke="#b47ad8" stroke-width="1.15" stroke-linejoin="miter"/><path d="M806.00,256.55 L810.58,256.55 L815.16,256.55 L819.74,256.55 L824.32,256.55 L828.90,256.55 L833.48,208.50 L838.06,208.50 L842.64,208.50 L847.22,208.50 L851.80,256.55 L856.38,256.55 L860.96,256.55 L865.54,256.55 L870.12,256.55 L874.70,256.55 L879.28,256.55 L883.86,256.55 L888.44,256.55 L893.02,256.55 L897.60,256.55 L902.18,256.55 L906.76,256.55 L911.34,208.50 L915.92,208.50 L920.50,208.50 L925.08,208.50 L929.66,208.50 L934.24,256.55 L938.82,256.55 L943.39,256.55 L947.97,256.55 L952.55,256.55 L957.13,256.55 L961.71,208.50 L966.29,208.50 L970.87,208.50 L975.45,208.50 L980.03,208.50 L984.61,256.55 L989.19,256.55 L993.77,256.55 L998.35,256.55 L1002.93,256.55 L1007.51,256.55 L1012.09,256.55 L1016.67,256.55 L1021.25,256.55 L1025.83,256.55 L1030.41,256.55 L1034.99,208.50 L1039.57,208.50 L1044.15,208.50 L1048.73,208.50 L1053.31,208.50 L1057.89,208.50 L1062.47,208.50 L1067.05,208.50 L1071.63,208.50 L1076.21,208.50 L1080.79,208.50 L1085.37,208.50 L1089.95,208.50 L1094.53,208.50 L1099.11,208.50 L1103.69,208.50 L1108.27,208.50 L1112.85,208.50 L1117.43,208.50 L1122.01,208.50 L1126.59,208.50 L1131.17,208.50 L1135.75,208.50 L1140.33,208.50 L1144.91,256.55 L1149.49,256.55 L1154.07,256.55 L1158.65,208.50 L1163.23,208.50 L1167.81,208.50 L1172.39,208.50 L1176.97,208.50 L1181.55,256.55 L1186.13,256.55 L1190.71,256.55 L1195.29,256.55 L1199.87,256.55 L1204.45,256.55 L1209.03,256.55 L1213.61,256.55 L1218.18,256.55 L1222.76,256.55 L1227.34,256.55 L1231.92,256.55 L1236.50,256.55 L1241.08,256.55 L1245.66,256.55 L1250.24,256.55 L1254.82,256.55 L1259.40,256.55 L1263.98,256.55 L1268.56,256.55 L1273.14,256.55 L1277.72,256.55 L1282.30,256.55 L1286.88,256.55 L1291.46,256.55 L1296.04,256.55 L1300.62,256.55 L1305.20,208.50 L1309.78,208.50 L1314.36,208.50 L1318.94,208.50 L1323.52,208.50 L1328.10,208.50 L1332.68,208.50 L1337.26,208.50 L1341.84,208.50 L1346.42,256.55 L1351.00,256.55" fill="none" stroke="#b47ad8" stroke-width="1.15" stroke-linejoin="miter"/><path d="M806.00,160.45 L810.58,160.45 L815.16,208.50 L819.74,208.50 L824.32,208.50 L828.90,208.50 L833.48,208.50 L838.06,208.50 L842.64,208.50 L847.22,208.50 L851.80,208.50 L856.38,208.50 L860.96,208.50 L865.54,208.50 L870.12,208.50 L874.70,160.45 L879.28,160.45 L883.86,160.45 L888.44,160.45 L893.02,208.50 L897.60,208.50 L902.18,208.50 L906.76,208.50 L911.34,208.50 L915.92,256.55 L920.50,208.50 L925.08,208.50 L929.66,208.50 L934.24,208.50 L938.82,208.50 L943.39,208.50 L947.97,208.50 L952.55,208.50 L957.13,208.50 L961.71,208.50 L966.29,112.40 L970.87,112.40 L975.45,112.40 L980.03,112.40 L984.61,160.45 L989.19,160.45 L993.77,160.45 L998.35,208.50 L1002.93,208.50 L1007.51,208.50 L1012.09,208.50 L1016.67,208.50 L1021.25,208.50 L1025.83,208.50 L1030.41,208.50 L1034.99,208.50 L1039.57,208.50 L1044.15,208.50 L1048.73,208.50 L1053.31,208.50 L1057.89,208.50 L1062.47,208.50 L1067.05,256.55 L1071.63,208.50 L1076.21,208.50 L1080.79,208.50 L1085.37,208.50 L1089.95,208.50 L1094.53,208.50 L1099.11,208.50 L1103.69,208.50 L1108.27,208.50 L1112.85,208.50 L1117.43,208.50 L1122.01,208.50 L1126.59,208.50 L1131.17,208.50 L1135.75,208.50 L1140.33,208.50 L1144.91,208.50 L1149.49,208.50 L1154.07,208.50 L1158.65,208.50 L1163.23,208.50 L1167.81,160.45 L1172.39,160.45 L1176.97,160.45 L1181.55,160.45 L1186.13,160.45 L1190.71,160.45 L1195.29,160.45 L1199.87,160.45 L1204.45,208.50 L1209.03,208.50 L1213.61,208.50 L1218.18,208.50 L1222.76,160.45 L1227.34,160.45 L1231.92,160.45 L1236.50,160.45 L1241.08,208.50 L1245.66,208.50 L1250.24,256.55 L1254.82,208.50 L1259.40,208.50 L1263.98,208.50 L1268.56,208.50 L1273.14,208.50 L1277.72,160.45 L1282.30,160.45 L1286.88,160.45 L1291.46,160.45 L1296.04,208.50 L1300.62,208.50 L1305.20,208.50 L1309.78,208.50 L1314.36,160.45 L1318.94,160.45 L1323.52,160.45 L1328.10,160.45 L1332.68,208.50 L1337.26,208.50 L1341.84,208.50 L1346.42,208.50 L1351.00,160.45" fill="none" stroke="#b47ad8" stroke-width="1.15" stroke-linejoin="miter"/><path d="M806.00,256.55 L810.58,256.55 L815.16,256.55 L819.74,256.55 L824.32,256.55 L828.90,256.55 L833.48,256.55 L838.06,256.55 L842.64,256.55 L847.22,256.55 L851.80,256.55 L856.38,256.55 L860.96,208.50 L865.54,208.50 L870.12,208.50 L874.70,208.50 L879.28,256.55 L883.86,256.55 L888.44,208.50 L893.02,208.50 L897.60,208.50 L902.18,208.50 L906.76,208.50 L911.34,256.55 L915.92,256.55 L920.50,256.55 L925.08,256.55 L929.66,256.55 L934.24,208.50 L938.82,208.50 L943.39,208.50 L947.97,208.50 L952.55,208.50 L957.13,208.50 L961.71,256.55 L966.29,256.55 L970.87,256.55 L975.45,256.55 L980.03,256.55 L984.61,208.50 L989.19,208.50 L993.77,256.55 L998.35,256.55 L1002.93,256.55 L1007.51,256.55 L1012.09,256.55 L1016.67,256.55 L1021.25,256.55 L1025.83,256.55 L1030.41,256.55 L1034.99,256.55 L1039.57,256.55 L1044.15,256.55 L1048.73,256.55 L1053.31,256.55 L1057.89,256.55 L1062.47,256.55 L1067.05,256.55 L1071.63,256.55 L1076.21,256.55 L1080.79,208.50 L1085.37,208.50 L1089.95,208.50 L1094.53,256.55 L1099.11,256.55 L1103.69,256.55 L1108.27,256.55 L1112.85,256.55 L1117.43,256.55 L1122.01,256.55 L1126.59,208.50 L1131.17,304.60 L1135.75,304.60 L1140.33,304.60 L1144.91,304.60 L1149.49,208.50 L1154.07,208.50 L1158.65,208.50 L1163.23,208.50 L1167.81,208.50 L1172.39,208.50 L1176.97,256.55 L1181.55,256.55 L1186.13,256.55 L1190.71,256.55 L1195.29,304.60 L1199.87,304.60 L1204.45,304.60 L1209.03,304.60 L1213.61,256.55 L1218.18,256.55 L1222.76,256.55 L1227.34,208.50 L1231.92,256.55 L1236.50,256.55 L1241.08,256.55 L1245.66,256.55 L1250.24,256.55 L1254.82,208.50 L1259.40,208.50 L1263.98,208.50 L1268.56,256.55 L1273.14,256.55 L1277.72,256.55 L1282.30,256.55 L1286.88,208.50 L1291.46,208.50 L1296.04,208.50 L1300.62,208.50 L1305.20,256.55 L1309.78,256.55 L1314.36,256.55 L1318.94,208.50 L1323.52,208.50 L1328.10,208.50 L1332.68,208.50 L1337.26,256.55 L1341.84,256.55 L1346.42,256.55 L1351.00,256.55" fill="none" stroke="#b47ad8" stroke-width="1.15" stroke-linejoin="miter"/></g><rect x="779.00" y="365.50" width="18.00" height="5.00" rx="1.5" fill="#b47ad8" /><text x="806.50" y="373.20" font-size="16.69" fill="#ccccdc" text-anchor="start" font-weight="normal"  textLength="147.69" lengthAdjust="spacingAndGlyphs" stroke="#ccccdc" stroke-width="0.3">Green threads count</text><rect x="968.00" y="365.50" width="18.00" height="5.00" rx="1.5" fill="#b47ad8" /><text x="995.50" y="373.20" font-size="16.69" fill="#ccccdc" text-anchor="start" font-weight="normal"  textLength="147.69" lengthAdjust="spacingAndGlyphs" stroke="#ccccdc" stroke-width="0.3">Green threads count</text><rect x="1157.00" y="365.50" width="18.00" height="5.00" rx="1.5" fill="#b47ad8" /><text x="1184.50" y="373.20" font-size="16.69" fill="#ccccdc" text-anchor="start" font-weight="normal"  textLength="147.69" lengthAdjust="spacingAndGlyphs" stroke="#ccccdc" stroke-width="0.3">Green threads count</text><rect x="779.00" y="394.20" width="18.00" height="5.00" rx="1.5" fill="#b47ad8" /><text x="806.50" y="401.90" font-size="16.69" fill="#ccccdc" text-anchor="start" font-weight="normal"  textLength="147.69" lengthAdjust="spacingAndGlyphs" stroke="#ccccdc" stroke-width="0.3">Green threads count</text><rect x="968.00" y="394.20" width="18.00" height="5.00" rx="1.5" fill="#b47ad8" /><text x="995.50" y="401.90" font-size="16.69" fill="#ccccdc" text-anchor="start" font-weight="normal"  textLength="147.69" lengthAdjust="spacingAndGlyphs" stroke="#ccccdc" stroke-width="0.3">Green threads count</text><rect x="1157.00" y="394.20" width="18.00" height="5.00" rx="1.5" fill="#b47ad8" /><text x="1184.50" y="401.90" font-size="16.69" fill="#ccccdc" text-anchor="start" font-weight="normal"  textLength="147.69" lengthAdjust="spacingAndGlyphs" stroke="#ccccdc" stroke-width="0.3">Green threads count</text><rect x="779.00" y="422.90" width="18.00" height="5.00" rx="1.5" fill="#b47ad8" /><text x="806.50" y="430.60" font-size="16.69" fill="#ccccdc" text-anchor="start" font-weight="normal"  textLength="147.69" lengthAdjust="spacingAndGlyphs" stroke="#ccccdc" stroke-width="0.3">Green threads count</text><line x1="771.60" y1="568.50" x2="1354.80" y2="568.50" stroke="rgba(240,250,255,0.09)" stroke-width="1"/><text x="764.40" y="573.30" font-size="16.17" fill="#c7c7d1" text-anchor="end" font-weight="normal"  textLength="45.38" lengthAdjust="spacingAndGlyphs" stroke="#c7c7d1" stroke-width="0.3">75 MB</text><line x1="771.60" y1="627.60" x2="1354.80" y2="627.60" stroke="rgba(240,250,255,0.09)" stroke-width="1"/><text x="764.40" y="632.40" font-size="16.17" fill="#c7c7d1" text-anchor="end" font-weight="normal"  textLength="45.38" lengthAdjust="spacingAndGlyphs" stroke="#c7c7d1" stroke-width="0.3">70 MB</text><line x1="771.60" y1="687.20" x2="1354.80" y2="687.20" stroke="rgba(240,250,255,0.09)" stroke-width="1"/><text x="764.40" y="692.00" font-size="16.17" fill="#c7c7d1" text-anchor="end" font-weight="normal"  textLength="45.38" lengthAdjust="spacingAndGlyphs" stroke="#c7c7d1" stroke-width="0.3">65 MB</text><line x1="844.40" y1="521.70" x2="844.40" y2="727.00" stroke="rgba(240,250,255,0.09)" stroke-width="1"/><text x="844.40" y="745.30" font-size="14.52" fill="#c7c7d1" text-anchor="middle" font-weight="normal"  textLength="35.28" lengthAdjust="spacingAndGlyphs" stroke="#c7c7d1" stroke-width="0.3">17:15</text><line x1="941.00" y1="521.70" x2="941.00" y2="727.00" stroke="rgba(240,250,255,0.09)" stroke-width="1"/><text x="941.00" y="745.30" font-size="14.52" fill="#c7c7d1" text-anchor="middle" font-weight="normal"  textLength="35.28" lengthAdjust="spacingAndGlyphs" stroke="#c7c7d1" stroke-width="0.3">17:20</text><line x1="1037.60" y1="521.70" x2="1037.60" y2="727.00" stroke="rgba(240,250,255,0.09)" stroke-width="1"/><text x="1037.60" y="745.30" font-size="14.52" fill="#c7c7d1" text-anchor="middle" font-weight="normal"  textLength="35.28" lengthAdjust="spacingAndGlyphs" stroke="#c7c7d1" stroke-width="0.3">17:25</text><line x1="1134.20" y1="521.70" x2="1134.20" y2="727.00" stroke="rgba(240,250,255,0.09)" stroke-width="1"/><text x="1134.20" y="745.30" font-size="14.52" fill="#c7c7d1" text-anchor="middle" font-weight="normal"  textLength="35.28" lengthAdjust="spacingAndGlyphs" stroke="#c7c7d1" stroke-width="0.3">17:30</text><line x1="1230.80" y1="521.70" x2="1230.80" y2="727.00" stroke="rgba(240,250,255,0.09)" stroke-width="1"/><text x="1230.80" y="745.30" font-size="14.52" fill="#c7c7d1" text-anchor="middle" font-weight="normal"  textLength="35.28" lengthAdjust="spacingAndGlyphs" stroke="#c7c7d1" stroke-width="0.3">17:35</text><line x1="1327.40" y1="521.70" x2="1327.40" y2="727.00" stroke="rgba(240,250,255,0.09)" stroke-width="1"/><text x="1327.40" y="745.30" font-size="14.52" fill="#c7c7d1" text-anchor="middle" font-weight="normal"  textLength="35.28" lengthAdjust="spacingAndGlyphs" stroke="#c7c7d1" stroke-width="0.3">17:40</text><clipPath id="c3"><rect x="775.8" y="518.7" width="575.5" height="203.5999999999999"/></clipPath><g clip-path="url(#c3)"><path d="M775.80,548.30 L1351.30,548.30 L1351.30,722.30 L775.80,722.30 Z" fill="#80c070" fill-opacity="0.05" stroke="none"/><path d="M775.80,554.20 L1351.30,554.20 L1351.30,722.30 L775.80,722.30 Z" fill="#80c070" fill-opacity="0.05" stroke="none"/><path d="M775.80,613.30 L1351.30,613.30 L1351.30,722.30 L775.80,722.30 Z" fill="#80c070" fill-opacity="0.05" stroke="none"/><path d="M775.80,626.40 L1351.30,626.40 L1351.30,722.30 L775.80,722.30 Z" fill="#80c070" fill-opacity="0.05" stroke="none"/><path d="M775.80,652.30 L1351.30,652.30 L1351.30,722.30 L775.80,722.30 Z" fill="#80c070" fill-opacity="0.05" stroke="none"/><path d="M775.80,671.30 L1351.30,671.30 L1351.30,722.30 L775.80,722.30 Z" fill="#80c070" fill-opacity="0.05" stroke="none"/><path d="M775.80,703.10 L1351.30,703.10 L1351.30,722.30 L775.80,722.30 Z" fill="#80c070" fill-opacity="0.05" stroke="none"/><path d="M775.80,548.30 L1351.30,548.30" fill="none" stroke="#80c070" stroke-width="2.2" stroke-linejoin="miter"/><path d="M775.80,554.20 L1351.30,554.20" fill="none" stroke="#80c070" stroke-width="2.2" stroke-linejoin="miter"/><path d="M775.80,613.30 L1351.30,613.30" fill="none" stroke="#80c070" stroke-width="2.2" stroke-linejoin="miter"/><path d="M775.80,626.40 L1351.30,626.40" fill="none" stroke="#80c070" stroke-width="2.2" stroke-linejoin="miter"/><path d="M775.80,652.30 L1351.30,652.30" fill="none" stroke="#80c070" stroke-width="2.2" stroke-linejoin="miter"/><path d="M775.80,671.30 L1351.30,671.30" fill="none" stroke="#80c070" stroke-width="2.2" stroke-linejoin="miter"/><path d="M775.80,703.10 L1351.30,703.10" fill="none" stroke="#80c070" stroke-width="2.2" stroke-linejoin="miter"/></g><rect x="723.00" y="764.20" width="18.00" height="5.00" rx="1.5" fill="#80c070" /><text x="750.50" y="771.90" font-size="16.69" fill="#ccccdc" text-anchor="start" font-weight="normal"  textLength="197.76" lengthAdjust="spacingAndGlyphs" stroke="#ccccdc" stroke-width="0.3">Workers total memory used</text><rect x="962.20" y="764.20" width="18.00" height="5.00" rx="1.5" fill="#80c070" /><text x="989.70" y="771.90" font-size="16.69" fill="#ccccdc" text-anchor="start" font-weight="normal"  textLength="197.76" lengthAdjust="spacingAndGlyphs" stroke="#ccccdc" stroke-width="0.3">Workers total memory used</text><rect x="723.00" y="793.30" width="18.00" height="5.00" rx="1.5" fill="#80c070" /><text x="750.50" y="801.00" font-size="16.69" fill="#ccccdc" text-anchor="start" font-weight="normal"  textLength="197.76" lengthAdjust="spacingAndGlyphs" stroke="#ccccdc" stroke-width="0.3">Workers total memory used</text><rect x="962.20" y="793.30" width="18.00" height="5.00" rx="1.5" fill="#80c070" /><text x="989.70" y="801.00" font-size="16.69" fill="#ccccdc" text-anchor="start" font-weight="normal"  textLength="197.76" lengthAdjust="spacingAndGlyphs" stroke="#ccccdc" stroke-width="0.3">Workers total memory used</text><rect x="723.00" y="822.40" width="18.00" height="5.00" rx="1.5" fill="#80c070" /><text x="750.50" y="830.10" font-size="16.69" fill="#ccccdc" text-anchor="start" font-weight="normal"  textLength="197.76" lengthAdjust="spacingAndGlyphs" stroke="#ccccdc" stroke-width="0.3">Workers total memory used</text><rect x="962.20" y="822.40" width="18.00" height="5.00" rx="1.5" fill="#80c070" /><text x="989.70" y="830.10" font-size="16.69" fill="#ccccdc" text-anchor="start" font-weight="normal"  textLength="197.76" lengthAdjust="spacingAndGlyphs" stroke="#ccccdc" stroke-width="0.3">Workers total memory used</text><rect x="723.00" y="851.50" width="18.00" height="5.00" rx="1.5" fill="#80c070" /><text x="750.50" y="859.20" font-size="16.69" fill="#ccccdc" text-anchor="start" font-weight="normal"  textLength="197.76" lengthAdjust="spacingAndGlyphs" stroke="#ccccdc" stroke-width="0.3">Workers total memory used</text><clipPath id="c4"><rect x="28" y="500" width="660" height="366"/></clipPath><g clip-path="url(#c4)"><text x="115.20" y="522.00" font-size="15.04" fill="#ccccdc" text-anchor="end" font-weight="normal"  textLength="45.7" lengthAdjust="spacingAndGlyphs" stroke="#ccccdc" stroke-width="0.3">TOTAL</text><rect x="129.00" y="510.80" width="12.00" height="12.80" rx="2" fill="url(#g1)" /><rect x="144.00" y="510.80" width="12.00" height="12.80" rx="2" fill="url(#g2)" /><rect x="159.00" y="510.80" width="12.00" height="12.80" rx="2" fill="url(#g3)" /><rect x="174.00" y="510.80" width="12.00" height="12.80" rx="2" fill="url(#g4)" /><rect x="189.00" y="510.80" width="12.00" height="12.80" rx="2" fill="url(#g5)" /><rect x="204.00" y="510.80" width="12.00" height="12.80" rx="2" fill="url(#g6)" /><rect x="219.00" y="510.80" width="12.00" height="12.80" rx="2" fill="url(#g7)" /><rect x="234.00" y="510.80" width="12.00" height="12.80" rx="2" fill="url(#g8)" /><rect x="249.00" y="510.80" width="12.00" height="12.80" rx="2" fill="url(#g9)" /><rect x="264.00" y="510.80" width="12.00" height="12.80" rx="2" fill="url(#g10)" /><rect x="279.00" y="510.80" width="12.00" height="12.80" rx="2" fill="url(#g11)" /><rect x="294.00" y="510.80" width="12.00" height="12.80" rx="2" fill="url(#g12)" /><rect x="309.00" y="510.80" width="12.00" height="12.80" rx="2" fill="url(#g13)" /><rect x="324.00" y="510.80" width="12.00" height="12.80" rx="2" fill="url(#g14)" /><rect x="339.00" y="510.80" width="12.00" height="12.80" rx="2" fill="url(#g15)" /><rect x="354.00" y="510.80" width="12.00" height="12.80" rx="2" fill="url(#g16)" /><rect x="369.00" y="510.80" width="12.00" height="12.80" rx="2" fill="url(#g17)" /><rect x="384.00" y="510.80" width="12.00" height="12.80" rx="2" fill="url(#g18)" /><rect x="399.00" y="510.80" width="12.00" height="12.80" rx="2" fill="url(#g19)" /><rect x="414.00" y="510.80" width="12.00" height="12.80" rx="2" fill="url(#g20)" /><rect x="429.00" y="510.80" width="12.00" height="12.80" rx="2" fill="url(#g21)" /><rect x="444.00" y="510.80" width="12.00" height="12.80" rx="2" fill="url(#g22)" /><rect x="459.00" y="510.80" width="12.00" height="12.80" rx="2" fill="url(#g23)" /><rect x="474.00" y="510.80" width="12.00" height="12.80" rx="2" fill="url(#g24)" /><rect x="489.00" y="510.80" width="12.00" height="12.80" rx="2" fill="url(#g25)" /><rect x="504.00" y="510.80" width="12.00" height="12.80" rx="2" fill="url(#g26)" /><rect x="519.00" y="510.80" width="12.00" height="12.80" rx="2" fill="url(#g27)" /><rect x="534.00" y="510.80" width="12.00" height="12.80" rx="2" fill="url(#g28)" /><text x="661.70" y="522.00" font-size="14.42" fill="#78c46d" text-anchor="middle" font-weight="normal"  textLength="7.79" lengthAdjust="spacingAndGlyphs">2</text><text x="115.20" y="537.00" font-size="15.04" fill="#ccccdc" text-anchor="end" font-weight="normal"  textLength="45.7" lengthAdjust="spacingAndGlyphs" stroke="#ccccdc" stroke-width="0.3">TOTAL</text><rect x="129.00" y="525.80" width="12.00" height="12.80" rx="2" fill="url(#g1)" /><rect x="144.00" y="525.80" width="12.00" height="12.80" rx="2" fill="url(#g2)" /><rect x="159.00" y="525.80" width="12.00" height="12.80" rx="2" fill="url(#g3)" /><rect x="174.00" y="525.80" width="12.00" height="12.80" rx="2" fill="url(#g4)" /><rect x="189.00" y="525.80" width="12.00" height="12.80" rx="2" fill="url(#g5)" /><rect x="204.00" y="525.80" width="12.00" height="12.80" rx="2" fill="url(#g6)" /><rect x="219.00" y="525.80" width="12.00" height="12.80" rx="2" fill="url(#g7)" /><rect x="234.00" y="525.80" width="12.00" height="12.80" rx="2" fill="url(#g8)" /><rect x="249.00" y="525.80" width="12.00" height="12.80" rx="2" fill="url(#g9)" /><rect x="264.00" y="525.80" width="12.00" height="12.80" rx="2" fill="url(#g10)" /><rect x="279.00" y="525.80" width="12.00" height="12.80" rx="2" fill="url(#g11)" /><rect x="294.00" y="525.80" width="12.00" height="12.80" rx="2" fill="url(#g12)" /><rect x="309.00" y="525.80" width="12.00" height="12.80" rx="2" fill="url(#g13)" /><rect x="324.00" y="525.80" width="12.00" height="12.80" rx="2" fill="url(#g14)" /><rect x="339.00" y="525.80" width="12.00" height="12.80" rx="2" fill="url(#g15)" /><rect x="354.00" y="525.80" width="12.00" height="12.80" rx="2" fill="url(#g16)" /><rect x="369.00" y="525.80" width="12.00" height="12.80" rx="2" fill="url(#g17)" /><rect x="384.00" y="525.80" width="12.00" height="12.80" rx="2" fill="url(#g18)" /><rect x="399.00" y="525.80" width="12.00" height="12.80" rx="2" fill="url(#g19)" /><rect x="414.00" y="525.80" width="12.00" height="12.80" rx="2" fill="url(#g20)" /><rect x="429.00" y="525.80" width="12.00" height="12.80" rx="2" fill="url(#g21)" /><rect x="444.00" y="525.80" width="12.00" height="12.80" rx="2" fill="url(#g22)" /><rect x="459.00" y="525.80" width="12.00" height="12.80" rx="2" fill="url(#g23)" /><rect x="474.00" y="525.80" width="12.00" height="12.80" rx="2" fill="url(#g24)" /><rect x="489.00" y="525.80" width="12.00" height="12.80" rx="2" fill="url(#g25)" /><rect x="504.00" y="525.80" width="12.00" height="12.80" rx="2" fill="url(#g26)" /><rect x="519.00" y="525.80" width="12.00" height="12.80" rx="2" fill="url(#g27)" /><rect x="534.00" y="525.80" width="12.00" height="12.80" rx="2" fill="url(#g28)" /><text x="661.70" y="537.00" font-size="14.42" fill="#78c46d" text-anchor="middle" font-weight="normal"  textLength="7.79" lengthAdjust="spacingAndGlyphs">2</text><text x="115.20" y="552.00" font-size="15.04" fill="#ccccdc" text-anchor="end" font-weight="normal"  textLength="45.7" lengthAdjust="spacingAndGlyphs" stroke="#ccccdc" stroke-width="0.3">TOTAL</text><rect x="129.00" y="540.80" width="12.00" height="12.80" rx="2" fill="url(#g1)" /><rect x="144.00" y="540.80" width="12.00" height="12.80" rx="2" fill="url(#g2)" /><rect x="159.00" y="540.80" width="12.00" height="12.80" rx="2" fill="url(#g3)" /><rect x="174.00" y="540.80" width="12.00" height="12.80" rx="2" fill="url(#g4)" /><rect x="189.00" y="540.80" width="12.00" height="12.80" rx="2" fill="url(#g5)" /><rect x="204.00" y="540.80" width="12.00" height="12.80" rx="2" fill="url(#g6)" /><rect x="219.00" y="540.80" width="12.00" height="12.80" rx="2" fill="url(#g7)" /><rect x="234.00" y="540.80" width="12.00" height="12.80" rx="2" fill="url(#g8)" /><rect x="249.00" y="540.80" width="12.00" height="12.80" rx="2" fill="url(#g9)" /><rect x="264.00" y="540.80" width="12.00" height="12.80" rx="2" fill="url(#g10)" /><rect x="279.00" y="540.80" width="12.00" height="12.80" rx="2" fill="url(#g11)" /><rect x="294.00" y="540.80" width="12.00" height="12.80" rx="2" fill="url(#g12)" /><rect x="309.00" y="540.80" width="12.00" height="12.80" rx="2" fill="url(#g13)" /><rect x="324.00" y="540.80" width="12.00" height="12.80" rx="2" fill="url(#g14)" /><rect x="339.00" y="540.80" width="12.00" height="12.80" rx="2" fill="url(#g15)" /><rect x="354.00" y="540.80" width="12.00" height="12.80" rx="2" fill="url(#g16)" /><rect x="369.00" y="540.80" width="12.00" height="12.80" rx="2" fill="url(#g17)" /><rect x="384.00" y="540.80" width="12.00" height="12.80" rx="2" fill="url(#g18)" /><rect x="399.00" y="540.80" width="12.00" height="12.80" rx="2" fill="url(#g19)" /><rect x="414.00" y="540.80" width="12.00" height="12.80" rx="2" fill="url(#g20)" /><rect x="429.00" y="540.80" width="12.00" height="12.80" rx="2" fill="url(#g21)" /><rect x="444.00" y="540.80" width="12.00" height="12.80" rx="2" fill="url(#g22)" /><rect x="459.00" y="540.80" width="12.00" height="12.80" rx="2" fill="url(#g23)" /><rect x="474.00" y="540.80" width="12.00" height="12.80" rx="2" fill="url(#g24)" /><rect x="489.00" y="540.80" width="12.00" height="12.80" rx="2" fill="url(#g25)" /><rect x="504.00" y="540.80" width="12.00" height="12.80" rx="2" fill="url(#g26)" /><rect x="519.00" y="540.80" width="12.00" height="12.80" rx="2" fill="url(#g27)" /><rect x="534.00" y="540.80" width="12.00" height="12.80" rx="2" fill="url(#g28)" /><text x="661.70" y="552.00" font-size="14.42" fill="#78c46d" text-anchor="middle" font-weight="normal"  textLength="7.79" lengthAdjust="spacingAndGlyphs">2</text><text x="115.20" y="567.00" font-size="15.04" fill="#ccccdc" text-anchor="end" font-weight="normal"  textLength="45.7" lengthAdjust="spacingAndGlyphs" stroke="#ccccdc" stroke-width="0.3">TOTAL</text><rect x="129.00" y="555.80" width="12.00" height="12.80" rx="2" fill="url(#g1)" /><rect x="144.00" y="555.80" width="12.00" height="12.80" rx="2" fill="url(#g2)" /><rect x="159.00" y="555.80" width="12.00" height="12.80" rx="2" fill="url(#g3)" /><rect x="174.00" y="555.80" width="12.00" height="12.80" rx="2" fill="url(#g4)" /><rect x="189.00" y="555.80" width="12.00" height="12.80" rx="2" fill="url(#g5)" /><rect x="204.00" y="555.80" width="12.00" height="12.80" rx="2" fill="url(#g6)" /><rect x="219.00" y="555.80" width="12.00" height="12.80" rx="2" fill="url(#g7)" /><rect x="234.00" y="555.80" width="12.00" height="12.80" rx="2" fill="url(#g8)" /><rect x="249.00" y="555.80" width="12.00" height="12.80" rx="2" fill="url(#g9)" /><rect x="264.00" y="555.80" width="12.00" height="12.80" rx="2" fill="url(#g10)" /><rect x="279.00" y="555.80" width="12.00" height="12.80" rx="2" fill="url(#g11)" /><rect x="294.00" y="555.80" width="12.00" height="12.80" rx="2" fill="url(#g12)" /><rect x="309.00" y="555.80" width="12.00" height="12.80" rx="2" fill="url(#g13)" /><rect x="324.00" y="555.80" width="12.00" height="12.80" rx="2" fill="url(#g14)" /><rect x="339.00" y="555.80" width="12.00" height="12.80" rx="2" fill="url(#g15)" /><rect x="354.00" y="555.80" width="12.00" height="12.80" rx="2" fill="url(#g16)" /><rect x="369.00" y="555.80" width="12.00" height="12.80" rx="2" fill="url(#g17)" /><rect x="384.00" y="555.80" width="12.00" height="12.80" rx="2" fill="url(#g18)" /><rect x="399.00" y="555.80" width="12.00" height="12.80" rx="2" fill="url(#g19)" /><rect x="414.00" y="555.80" width="12.00" height="12.80" rx="2" fill="url(#g20)" /><rect x="429.00" y="555.80" width="12.00" height="12.80" rx="2" fill="url(#g21)" /><rect x="444.00" y="555.80" width="12.00" height="12.80" rx="2" fill="url(#g22)" /><rect x="459.00" y="555.80" width="12.00" height="12.80" rx="2" fill="url(#g23)" /><rect x="474.00" y="555.80" width="12.00" height="12.80" rx="2" fill="url(#g24)" /><rect x="489.00" y="555.80" width="12.00" height="12.80" rx="2" fill="url(#g25)" /><rect x="504.00" y="555.80" width="12.00" height="12.80" rx="2" fill="url(#g26)" /><rect x="519.00" y="555.80" width="12.00" height="12.80" rx="2" fill="url(#g27)" /><rect x="534.00" y="555.80" width="12.00" height="12.80" rx="2" fill="url(#g28)" /><text x="661.70" y="567.00" font-size="14.42" fill="#78c46d" text-anchor="middle" font-weight="normal"  textLength="7.79" lengthAdjust="spacingAndGlyphs">2</text><text x="115.20" y="582.00" font-size="15.04" fill="#ccccdc" text-anchor="end" font-weight="normal"  textLength="45.7" lengthAdjust="spacingAndGlyphs" stroke="#ccccdc" stroke-width="0.3">TOTAL</text><rect x="129.00" y="570.80" width="12.00" height="12.80" rx="2" fill="url(#g1)" /><rect x="144.00" y="570.80" width="12.00" height="12.80" rx="2" fill="url(#g2)" /><rect x="159.00" y="570.80" width="12.00" height="12.80" rx="2" fill="url(#g3)" /><rect x="174.00" y="570.80" width="12.00" height="12.80" rx="2" fill="url(#g4)" /><rect x="189.00" y="570.80" width="12.00" height="12.80" rx="2" fill="url(#g5)" /><rect x="204.00" y="570.80" width="12.00" height="12.80" rx="2" fill="url(#g6)" /><rect x="219.00" y="570.80" width="12.00" height="12.80" rx="2" fill="url(#g7)" /><rect x="234.00" y="570.80" width="12.00" height="12.80" rx="2" fill="url(#g8)" /><rect x="249.00" y="570.80" width="12.00" height="12.80" rx="2" fill="url(#g9)" /><rect x="264.00" y="570.80" width="12.00" height="12.80" rx="2" fill="url(#g10)" /><rect x="279.00" y="570.80" width="12.00" height="12.80" rx="2" fill="url(#g11)" /><rect x="294.00" y="570.80" width="12.00" height="12.80" rx="2" fill="url(#g12)" /><rect x="309.00" y="570.80" width="12.00" height="12.80" rx="2" fill="url(#g13)" /><rect x="324.00" y="570.80" width="12.00" height="12.80" rx="2" fill="url(#g14)" /><rect x="339.00" y="570.80" width="12.00" height="12.80" rx="2" fill="url(#g15)" /><rect x="354.00" y="570.80" width="12.00" height="12.80" rx="2" fill="url(#g16)" /><rect x="369.00" y="570.80" width="12.00" height="12.80" rx="2" fill="url(#g17)" /><rect x="384.00" y="570.80" width="12.00" height="12.80" rx="2" fill="url(#g18)" /><rect x="399.00" y="570.80" width="12.00" height="12.80" rx="2" fill="url(#g19)" /><rect x="414.00" y="570.80" width="12.00" height="12.80" rx="2" fill="url(#g20)" /><rect x="429.00" y="570.80" width="12.00" height="12.80" rx="2" fill="url(#g21)" /><rect x="444.00" y="570.80" width="12.00" height="12.80" rx="2" fill="url(#g22)" /><rect x="459.00" y="570.80" width="12.00" height="12.80" rx="2" fill="url(#g23)" /><rect x="474.00" y="570.80" width="12.00" height="12.80" rx="2" fill="url(#g24)" /><rect x="489.00" y="570.80" width="12.00" height="12.80" rx="2" fill="url(#g25)" /><rect x="504.00" y="570.80" width="12.00" height="12.80" rx="2" fill="url(#g26)" /><rect x="519.00" y="570.80" width="12.00" height="12.80" rx="2" fill="url(#g27)" /><rect x="534.00" y="570.80" width="12.00" height="12.80" rx="2" fill="url(#g28)" /><text x="661.70" y="582.00" font-size="14.42" fill="#78c46d" text-anchor="middle" font-weight="normal"  textLength="7.79" lengthAdjust="spacingAndGlyphs">2</text><text x="115.20" y="597.00" font-size="15.04" fill="#ccccdc" text-anchor="end" font-weight="normal"  textLength="45.7" lengthAdjust="spacingAndGlyphs" stroke="#ccccdc" stroke-width="0.3">TOTAL</text><rect x="129.00" y="585.80" width="12.00" height="12.80" rx="2" fill="url(#g1)" /><rect x="144.00" y="585.80" width="12.00" height="12.80" rx="2" fill="url(#g2)" /><rect x="159.00" y="585.80" width="12.00" height="12.80" rx="2" fill="url(#g3)" /><rect x="174.00" y="585.80" width="12.00" height="12.80" rx="2" fill="url(#g4)" /><rect x="189.00" y="585.80" width="12.00" height="12.80" rx="2" fill="url(#g5)" /><rect x="204.00" y="585.80" width="12.00" height="12.80" rx="2" fill="url(#g6)" /><rect x="219.00" y="585.80" width="12.00" height="12.80" rx="2" fill="url(#g7)" /><rect x="234.00" y="585.80" width="12.00" height="12.80" rx="2" fill="url(#g8)" /><rect x="249.00" y="585.80" width="12.00" height="12.80" rx="2" fill="url(#g9)" /><rect x="264.00" y="585.80" width="12.00" height="12.80" rx="2" fill="url(#g10)" /><rect x="279.00" y="585.80" width="12.00" height="12.80" rx="2" fill="url(#g11)" /><rect x="294.00" y="585.80" width="12.00" height="12.80" rx="2" fill="url(#g12)" /><rect x="309.00" y="585.80" width="12.00" height="12.80" rx="2" fill="url(#g13)" /><rect x="324.00" y="585.80" width="12.00" height="12.80" rx="2" fill="url(#g14)" /><rect x="339.00" y="585.80" width="12.00" height="12.80" rx="2" fill="url(#g15)" /><rect x="354.00" y="585.80" width="12.00" height="12.80" rx="2" fill="url(#g16)" /><rect x="369.00" y="585.80" width="12.00" height="12.80" rx="2" fill="url(#g17)" /><rect x="384.00" y="585.80" width="12.00" height="12.80" rx="2" fill="url(#g18)" /><rect x="399.00" y="585.80" width="12.00" height="12.80" rx="2" fill="url(#g19)" /><rect x="414.00" y="585.80" width="12.00" height="12.80" rx="2" fill="url(#g20)" /><rect x="429.00" y="585.80" width="12.00" height="12.80" rx="2" fill="url(#g21)" /><rect x="444.00" y="585.80" width="12.00" height="12.80" rx="2" fill="url(#g22)" /><rect x="459.00" y="585.80" width="12.00" height="12.80" rx="2" fill="url(#g23)" /><rect x="474.00" y="585.80" width="12.00" height="12.80" rx="2" fill="url(#g24)" /><rect x="489.00" y="585.80" width="12.00" height="12.80" rx="2" fill="url(#g25)" /><rect x="504.00" y="585.80" width="12.00" height="12.80" rx="2" fill="url(#g26)" /><rect x="519.00" y="585.80" width="12.00" height="12.80" rx="2" fill="url(#g27)" /><rect x="534.00" y="585.80" width="12.00" height="12.80" rx="2" fill="url(#g28)" /><text x="661.70" y="597.00" font-size="14.42" fill="#78c46d" text-anchor="middle" font-weight="normal"  textLength="7.79" lengthAdjust="spacingAndGlyphs">2</text><text x="115.20" y="612.00" font-size="15.04" fill="#ccccdc" text-anchor="end" font-weight="normal"  textLength="45.7" lengthAdjust="spacingAndGlyphs" stroke="#ccccdc" stroke-width="0.3">TOTAL</text><rect x="129.00" y="600.80" width="12.00" height="12.80" rx="2" fill="url(#g1)" /><rect x="144.00" y="600.80" width="12.00" height="12.80" rx="2" fill="url(#g2)" /><rect x="159.00" y="600.80" width="12.00" height="12.80" rx="2" fill="url(#g3)" /><rect x="174.00" y="600.80" width="12.00" height="12.80" rx="2" fill="url(#g4)" /><rect x="189.00" y="600.80" width="12.00" height="12.80" rx="2" fill="url(#g5)" /><rect x="204.00" y="600.80" width="12.00" height="12.80" rx="2" fill="url(#g6)" /><rect x="219.00" y="600.80" width="12.00" height="12.80" rx="2" fill="url(#g7)" /><rect x="234.00" y="600.80" width="12.00" height="12.80" rx="2" fill="url(#g8)" /><rect x="249.00" y="600.80" width="12.00" height="12.80" rx="2" fill="url(#g9)" /><rect x="264.00" y="600.80" width="12.00" height="12.80" rx="2" fill="url(#g10)" /><rect x="279.00" y="600.80" width="12.00" height="12.80" rx="2" fill="url(#g11)" /><rect x="294.00" y="600.80" width="12.00" height="12.80" rx="2" fill="url(#g12)" /><rect x="309.00" y="600.80" width="12.00" height="12.80" rx="2" fill="url(#g13)" /><rect x="324.00" y="600.80" width="12.00" height="12.80" rx="2" fill="url(#g14)" /><rect x="339.00" y="600.80" width="12.00" height="12.80" rx="2" fill="url(#g15)" /><rect x="354.00" y="600.80" width="12.00" height="12.80" rx="2" fill="url(#g16)" /><rect x="369.00" y="600.80" width="12.00" height="12.80" rx="2" fill="url(#g17)" /><rect x="384.00" y="600.80" width="12.00" height="12.80" rx="2" fill="url(#g18)" /><rect x="399.00" y="600.80" width="12.00" height="12.80" rx="2" fill="url(#g19)" /><rect x="414.00" y="600.80" width="12.00" height="12.80" rx="2" fill="url(#g20)" /><rect x="429.00" y="600.80" width="12.00" height="12.80" rx="2" fill="url(#g21)" /><rect x="444.00" y="600.80" width="12.00" height="12.80" rx="2" fill="url(#g22)" /><rect x="459.00" y="600.80" width="12.00" height="12.80" rx="2" fill="url(#g23)" /><rect x="474.00" y="600.80" width="12.00" height="12.80" rx="2" fill="url(#g24)" /><rect x="489.00" y="600.80" width="12.00" height="12.80" rx="2" fill="url(#g25)" /><rect x="504.00" y="600.80" width="12.00" height="12.80" rx="2" fill="url(#g26)" /><rect x="519.00" y="600.80" width="12.00" height="12.80" rx="2" fill="url(#g27)" /><rect x="534.00" y="600.80" width="12.00" height="12.80" rx="2" fill="url(#g28)" /><text x="661.70" y="612.00" font-size="14.42" fill="#78c46d" text-anchor="middle" font-weight="normal"  textLength="7.79" lengthAdjust="spacingAndGlyphs">2</text><text x="115.20" y="627.00" font-size="15.04" fill="#ccccdc" text-anchor="end" font-weight="normal"  textLength="50.3" lengthAdjust="spacingAndGlyphs" stroke="#ccccdc" stroke-width="0.3">READY</text><rect x="129.00" y="615.80" width="12.00" height="12.80" rx="2" fill="url(#g29)" /><rect x="144.00" y="615.80" width="12.00" height="12.80" rx="2" fill="url(#g29)" /><rect x="159.00" y="615.80" width="12.00" height="12.80" rx="2" fill="url(#g29)" /><rect x="174.00" y="615.80" width="12.00" height="12.80" rx="2" fill="url(#g29)" /><rect x="189.00" y="615.80" width="12.00" height="12.80" rx="2" fill="url(#g29)" /><rect x="204.00" y="615.80" width="12.00" height="12.80" rx="2" fill="url(#g29)" /><rect x="219.00" y="615.80" width="12.00" height="12.80" rx="2" fill="url(#g29)" /><rect x="234.00" y="615.80" width="12.00" height="12.80" rx="2" fill="url(#g29)" /><rect x="249.00" y="615.80" width="12.00" height="12.80" rx="2" fill="url(#g29)" /><rect x="264.00" y="615.80" width="12.00" height="12.80" rx="2" fill="url(#g29)" /><rect x="279.00" y="615.80" width="12.00" height="12.80" rx="2" fill="url(#g29)" /><rect x="294.00" y="615.80" width="12.00" height="12.80" rx="2" fill="url(#g29)" /><rect x="309.00" y="615.80" width="12.00" height="12.80" rx="2" fill="url(#g29)" /><rect x="324.00" y="615.80" width="12.00" height="12.80" rx="2" fill="url(#g29)" /><rect x="339.00" y="615.80" width="12.00" height="12.80" rx="2" fill="url(#g29)" /><rect x="354.00" y="615.80" width="12.00" height="12.80" rx="2" fill="url(#g29)" /><rect x="369.00" y="615.80" width="12.00" height="12.80" rx="2" fill="url(#g29)" /><rect x="384.00" y="615.80" width="12.00" height="12.80" rx="2" fill="url(#g29)" /><rect x="399.00" y="615.80" width="12.00" height="12.80" rx="2" fill="url(#g29)" /><rect x="414.00" y="615.80" width="12.00" height="12.80" rx="2" fill="url(#g29)" /><rect x="429.00" y="615.80" width="12.00" height="12.80" rx="2" fill="url(#g29)" /><rect x="444.00" y="615.80" width="12.00" height="12.80" rx="2" fill="url(#g29)" /><rect x="459.00" y="615.80" width="12.00" height="12.80" rx="2" fill="url(#g29)" /><rect x="474.00" y="615.80" width="12.00" height="12.80" rx="2" fill="url(#g29)" /><rect x="489.00" y="615.80" width="12.00" height="12.80" rx="2" fill="url(#g29)" /><rect x="504.00" y="615.80" width="12.00" height="12.80" rx="2" fill="url(#g29)" /><rect x="519.00" y="615.80" width="12.00" height="12.80" rx="2" fill="url(#g29)" /><rect x="534.00" y="615.80" width="12.00" height="12.80" rx="2" fill="url(#g29)" /><text x="661.70" y="627.00" font-size="14.42" fill="#6e9df2" text-anchor="middle" font-weight="normal"  textLength="7.79" lengthAdjust="spacingAndGlyphs">2</text><text x="115.20" y="642.00" font-size="15.04" fill="#ccccdc" text-anchor="end" font-weight="normal"  textLength="50.3" lengthAdjust="spacingAndGlyphs" stroke="#ccccdc" stroke-width="0.3">READY</text><rect x="129.00" y="630.80" width="12.00" height="12.80" rx="2" fill="url(#g29)" /><rect x="144.00" y="630.80" width="12.00" height="12.80" rx="2" fill="url(#g29)" /><rect x="159.00" y="630.80" width="12.00" height="12.80" rx="2" fill="url(#g29)" /><rect x="174.00" y="630.80" width="12.00" height="12.80" rx="2" fill="url(#g29)" /><rect x="189.00" y="630.80" width="12.00" height="12.80" rx="2" fill="url(#g29)" /><rect x="204.00" y="630.80" width="12.00" height="12.80" rx="2" fill="url(#g29)" /><rect x="219.00" y="630.80" width="12.00" height="12.80" rx="2" fill="url(#g29)" /><rect x="234.00" y="630.80" width="12.00" height="12.80" rx="2" fill="url(#g29)" /><rect x="249.00" y="630.80" width="12.00" height="12.80" rx="2" fill="url(#g29)" /><rect x="264.00" y="630.80" width="12.00" height="12.80" rx="2" fill="url(#g29)" /><rect x="279.00" y="630.80" width="12.00" height="12.80" rx="2" fill="url(#g29)" /><rect x="294.00" y="630.80" width="12.00" height="12.80" rx="2" fill="url(#g29)" /><rect x="309.00" y="630.80" width="12.00" height="12.80" rx="2" fill="url(#g29)" /><rect x="324.00" y="630.80" width="12.00" height="12.80" rx="2" fill="url(#g29)" /><rect x="339.00" y="630.80" width="12.00" height="12.80" rx="2" fill="url(#g29)" /><rect x="354.00" y="630.80" width="12.00" height="12.80" rx="2" fill="url(#g29)" /><rect x="369.00" y="630.80" width="12.00" height="12.80" rx="2" fill="url(#g29)" /><rect x="384.00" y="630.80" width="12.00" height="12.80" rx="2" fill="url(#g29)" /><rect x="399.00" y="630.80" width="12.00" height="12.80" rx="2" fill="url(#g29)" /><rect x="414.00" y="630.80" width="12.00" height="12.80" rx="2" fill="url(#g29)" /><rect x="429.00" y="630.80" width="12.00" height="12.80" rx="2" fill="url(#g29)" /><rect x="444.00" y="630.80" width="12.00" height="12.80" rx="2" fill="url(#g29)" /><rect x="459.00" y="630.80" width="12.00" height="12.80" rx="2" fill="url(#g29)" /><rect x="474.00" y="630.80" width="12.00" height="12.80" rx="2" fill="url(#g29)" /><rect x="489.00" y="630.80" width="12.00" height="12.80" rx="2" fill="url(#g29)" /><rect x="504.00" y="630.80" width="12.00" height="12.80" rx="2" fill="url(#g29)" /><rect x="519.00" y="630.80" width="12.00" height="12.80" rx="2" fill="url(#g29)" /><rect x="534.00" y="630.80" width="12.00" height="12.80" rx="2" fill="url(#g29)" /><text x="661.70" y="642.00" font-size="14.42" fill="#6e9df2" text-anchor="middle" font-weight="normal"  textLength="7.79" lengthAdjust="spacingAndGlyphs">2</text><text x="115.20" y="657.00" font-size="15.04" fill="#ccccdc" text-anchor="end" font-weight="normal"  textLength="50.3" lengthAdjust="spacingAndGlyphs" stroke="#ccccdc" stroke-width="0.3">READY</text><rect x="129.00" y="645.80" width="12.00" height="12.80" rx="2" fill="url(#g29)" /><rect x="144.00" y="645.80" width="12.00" height="12.80" rx="2" fill="url(#g29)" /><rect x="159.00" y="645.80" width="12.00" height="12.80" rx="2" fill="url(#g29)" /><rect x="174.00" y="645.80" width="12.00" height="12.80" rx="2" fill="url(#g29)" /><rect x="189.00" y="645.80" width="12.00" height="12.80" rx="2" fill="url(#g29)" /><rect x="204.00" y="645.80" width="12.00" height="12.80" rx="2" fill="url(#g29)" /><rect x="219.00" y="645.80" width="12.00" height="12.80" rx="2" fill="url(#g29)" /><rect x="234.00" y="645.80" width="12.00" height="12.80" rx="2" fill="url(#g29)" /><rect x="249.00" y="645.80" width="12.00" height="12.80" rx="2" fill="url(#g29)" /><rect x="264.00" y="645.80" width="12.00" height="12.80" rx="2" fill="url(#g29)" /><rect x="279.00" y="645.80" width="12.00" height="12.80" rx="2" fill="url(#g29)" /><rect x="294.00" y="645.80" width="12.00" height="12.80" rx="2" fill="url(#g29)" /><rect x="309.00" y="645.80" width="12.00" height="12.80" rx="2" fill="url(#g29)" /><rect x="324.00" y="645.80" width="12.00" height="12.80" rx="2" fill="url(#g29)" /><rect x="339.00" y="645.80" width="12.00" height="12.80" rx="2" fill="url(#g29)" /><rect x="354.00" y="645.80" width="12.00" height="12.80" rx="2" fill="url(#g29)" /><rect x="369.00" y="645.80" width="12.00" height="12.80" rx="2" fill="url(#g29)" /><rect x="384.00" y="645.80" width="12.00" height="12.80" rx="2" fill="url(#g29)" /><rect x="399.00" y="645.80" width="12.00" height="12.80" rx="2" fill="url(#g29)" /><rect x="414.00" y="645.80" width="12.00" height="12.80" rx="2" fill="url(#g29)" /><rect x="429.00" y="645.80" width="12.00" height="12.80" rx="2" fill="url(#g29)" /><rect x="444.00" y="645.80" width="12.00" height="12.80" rx="2" fill="url(#g29)" /><rect x="459.00" y="645.80" width="12.00" height="12.80" rx="2" fill="url(#g29)" /><rect x="474.00" y="645.80" width="12.00" height="12.80" rx="2" fill="url(#g29)" /><rect x="489.00" y="645.80" width="12.00" height="12.80" rx="2" fill="url(#g29)" /><rect x="504.00" y="645.80" width="12.00" height="12.80" rx="2" fill="url(#g29)" /><rect x="519.00" y="645.80" width="12.00" height="12.80" rx="2" fill="url(#g29)" /><rect x="534.00" y="645.80" width="12.00" height="12.80" rx="2" fill="url(#g29)" /><text x="661.70" y="657.00" font-size="14.42" fill="#6e9df2" text-anchor="middle" font-weight="normal"  textLength="7.79" lengthAdjust="spacingAndGlyphs">2</text><text x="115.20" y="672.00" font-size="15.04" fill="#ccccdc" text-anchor="end" font-weight="normal"  textLength="50.3" lengthAdjust="spacingAndGlyphs" stroke="#ccccdc" stroke-width="0.3">READY</text><rect x="129.00" y="660.80" width="12.00" height="12.80" rx="2" fill="url(#g29)" /><rect x="144.00" y="660.80" width="12.00" height="12.80" rx="2" fill="url(#g29)" /><rect x="159.00" y="660.80" width="12.00" height="12.80" rx="2" fill="url(#g29)" /><rect x="174.00" y="660.80" width="12.00" height="12.80" rx="2" fill="url(#g29)" /><rect x="189.00" y="660.80" width="12.00" height="12.80" rx="2" fill="url(#g29)" /><rect x="204.00" y="660.80" width="12.00" height="12.80" rx="2" fill="url(#g29)" /><rect x="219.00" y="660.80" width="12.00" height="12.80" rx="2" fill="url(#g29)" /><rect x="234.00" y="660.80" width="12.00" height="12.80" rx="2" fill="url(#g29)" /><rect x="249.00" y="660.80" width="12.00" height="12.80" rx="2" fill="url(#g29)" /><rect x="264.00" y="660.80" width="12.00" height="12.80" rx="2" fill="url(#g29)" /><rect x="279.00" y="660.80" width="12.00" height="12.80" rx="2" fill="url(#g29)" /><rect x="294.00" y="660.80" width="12.00" height="12.80" rx="2" fill="url(#g29)" /><rect x="309.00" y="660.80" width="12.00" height="12.80" rx="2" fill="url(#g29)" /><rect x="324.00" y="660.80" width="12.00" height="12.80" rx="2" fill="url(#g29)" /><rect x="339.00" y="660.80" width="12.00" height="12.80" rx="2" fill="url(#g29)" /><rect x="354.00" y="660.80" width="12.00" height="12.80" rx="2" fill="url(#g29)" /><rect x="369.00" y="660.80" width="12.00" height="12.80" rx="2" fill="url(#g29)" /><rect x="384.00" y="660.80" width="12.00" height="12.80" rx="2" fill="url(#g29)" /><rect x="399.00" y="660.80" width="12.00" height="12.80" rx="2" fill="url(#g29)" /><rect x="414.00" y="660.80" width="12.00" height="12.80" rx="2" fill="url(#g29)" /><rect x="429.00" y="660.80" width="12.00" height="12.80" rx="2" fill="url(#g29)" /><rect x="444.00" y="660.80" width="12.00" height="12.80" rx="2" fill="url(#g29)" /><rect x="459.00" y="660.80" width="12.00" height="12.80" rx="2" fill="url(#g29)" /><rect x="474.00" y="660.80" width="12.00" height="12.80" rx="2" fill="url(#g29)" /><rect x="489.00" y="660.80" width="12.00" height="12.80" rx="2" fill="url(#g29)" /><rect x="504.00" y="660.80" width="12.00" height="12.80" rx="2" fill="url(#g29)" /><rect x="519.00" y="660.80" width="12.00" height="12.80" rx="2" fill="url(#g29)" /><rect x="534.00" y="660.80" width="12.00" height="12.80" rx="2" fill="url(#g29)" /><text x="661.70" y="672.00" font-size="14.42" fill="#6e9df2" text-anchor="middle" font-weight="normal"  textLength="7.79" lengthAdjust="spacingAndGlyphs">2</text><text x="115.20" y="687.00" font-size="15.04" fill="#ccccdc" text-anchor="end" font-weight="normal"  textLength="50.3" lengthAdjust="spacingAndGlyphs" stroke="#ccccdc" stroke-width="0.3">READY</text><rect x="129.00" y="675.80" width="12.00" height="12.80" rx="2" fill="url(#g29)" /><rect x="144.00" y="675.80" width="12.00" height="12.80" rx="2" fill="url(#g29)" /><rect x="159.00" y="675.80" width="12.00" height="12.80" rx="2" fill="url(#g29)" /><rect x="174.00" y="675.80" width="12.00" height="12.80" rx="2" fill="url(#g29)" /><rect x="189.00" y="675.80" width="12.00" height="12.80" rx="2" fill="url(#g29)" /><rect x="204.00" y="675.80" width="12.00" height="12.80" rx="2" fill="url(#g29)" /><rect x="219.00" y="675.80" width="12.00" height="12.80" rx="2" fill="url(#g29)" /><rect x="234.00" y="675.80" width="12.00" height="12.80" rx="2" fill="url(#g29)" /><rect x="249.00" y="675.80" width="12.00" height="12.80" rx="2" fill="url(#g29)" /><rect x="264.00" y="675.80" width="12.00" height="12.80" rx="2" fill="url(#g29)" /><rect x="279.00" y="675.80" width="12.00" height="12.80" rx="2" fill="url(#g29)" /><rect x="294.00" y="675.80" width="12.00" height="12.80" rx="2" fill="url(#g29)" /><rect x="309.00" y="675.80" width="12.00" height="12.80" rx="2" fill="url(#g29)" /><rect x="324.00" y="675.80" width="12.00" height="12.80" rx="2" fill="url(#g29)" /><rect x="339.00" y="675.80" width="12.00" height="12.80" rx="2" fill="url(#g29)" /><rect x="354.00" y="675.80" width="12.00" height="12.80" rx="2" fill="url(#g29)" /><rect x="369.00" y="675.80" width="12.00" height="12.80" rx="2" fill="url(#g29)" /><rect x="384.00" y="675.80" width="12.00" height="12.80" rx="2" fill="url(#g29)" /><rect x="399.00" y="675.80" width="12.00" height="12.80" rx="2" fill="url(#g29)" /><rect x="414.00" y="675.80" width="12.00" height="12.80" rx="2" fill="url(#g29)" /><rect x="429.00" y="675.80" width="12.00" height="12.80" rx="2" fill="url(#g29)" /><rect x="444.00" y="675.80" width="12.00" height="12.80" rx="2" fill="url(#g29)" /><rect x="459.00" y="675.80" width="12.00" height="12.80" rx="2" fill="url(#g29)" /><rect x="474.00" y="675.80" width="12.00" height="12.80" rx="2" fill="url(#g29)" /><rect x="489.00" y="675.80" width="12.00" height="12.80" rx="2" fill="url(#g29)" /><rect x="504.00" y="675.80" width="12.00" height="12.80" rx="2" fill="url(#g29)" /><rect x="519.00" y="675.80" width="12.00" height="12.80" rx="2" fill="url(#g29)" /><rect x="534.00" y="675.80" width="12.00" height="12.80" rx="2" fill="url(#g29)" /><text x="661.70" y="687.00" font-size="14.42" fill="#6e9df2" text-anchor="middle" font-weight="normal"  textLength="7.79" lengthAdjust="spacingAndGlyphs">2</text><text x="115.20" y="702.00" font-size="15.04" fill="#ccccdc" text-anchor="end" font-weight="normal"  textLength="50.3" lengthAdjust="spacingAndGlyphs" stroke="#ccccdc" stroke-width="0.3">READY</text><rect x="129.00" y="690.80" width="12.00" height="12.80" rx="2" fill="url(#g29)" /><rect x="144.00" y="690.80" width="12.00" height="12.80" rx="2" fill="url(#g29)" /><rect x="159.00" y="690.80" width="12.00" height="12.80" rx="2" fill="url(#g29)" /><rect x="174.00" y="690.80" width="12.00" height="12.80" rx="2" fill="url(#g29)" /><rect x="189.00" y="690.80" width="12.00" height="12.80" rx="2" fill="url(#g29)" /><rect x="204.00" y="690.80" width="12.00" height="12.80" rx="2" fill="url(#g29)" /><rect x="219.00" y="690.80" width="12.00" height="12.80" rx="2" fill="url(#g29)" /><rect x="234.00" y="690.80" width="12.00" height="12.80" rx="2" fill="url(#g29)" /><rect x="249.00" y="690.80" width="12.00" height="12.80" rx="2" fill="url(#g29)" /><rect x="264.00" y="690.80" width="12.00" height="12.80" rx="2" fill="url(#g29)" /><rect x="279.00" y="690.80" width="12.00" height="12.80" rx="2" fill="url(#g29)" /><rect x="294.00" y="690.80" width="12.00" height="12.80" rx="2" fill="url(#g29)" /><rect x="309.00" y="690.80" width="12.00" height="12.80" rx="2" fill="url(#g29)" /><rect x="324.00" y="690.80" width="12.00" height="12.80" rx="2" fill="url(#g29)" /><rect x="339.00" y="690.80" width="12.00" height="12.80" rx="2" fill="url(#g29)" /><rect x="354.00" y="690.80" width="12.00" height="12.80" rx="2" fill="url(#g29)" /><rect x="369.00" y="690.80" width="12.00" height="12.80" rx="2" fill="url(#g29)" /><rect x="384.00" y="690.80" width="12.00" height="12.80" rx="2" fill="url(#g29)" /><rect x="399.00" y="690.80" width="12.00" height="12.80" rx="2" fill="url(#g29)" /><rect x="414.00" y="690.80" width="12.00" height="12.80" rx="2" fill="url(#g29)" /><rect x="429.00" y="690.80" width="12.00" height="12.80" rx="2" fill="url(#g29)" /><rect x="444.00" y="690.80" width="12.00" height="12.80" rx="2" fill="url(#g29)" /><rect x="459.00" y="690.80" width="12.00" height="12.80" rx="2" fill="url(#g29)" /><rect x="474.00" y="690.80" width="12.00" height="12.80" rx="2" fill="url(#g29)" /><rect x="489.00" y="690.80" width="12.00" height="12.80" rx="2" fill="url(#g29)" /><rect x="504.00" y="690.80" width="12.00" height="12.80" rx="2" fill="url(#g29)" /><rect x="519.00" y="690.80" width="12.00" height="12.80" rx="2" fill="url(#g29)" /><rect x="534.00" y="690.80" width="12.00" height="12.80" rx="2" fill="url(#g29)" /><text x="661.70" y="702.00" font-size="14.42" fill="#6e9df2" text-anchor="middle" font-weight="normal"  textLength="7.79" lengthAdjust="spacingAndGlyphs">2</text><text x="115.20" y="717.00" font-size="15.04" fill="#ccccdc" text-anchor="end" font-weight="normal"  textLength="50.3" lengthAdjust="spacingAndGlyphs" stroke="#ccccdc" stroke-width="0.3">READY</text><rect x="129.00" y="705.80" width="12.00" height="12.80" rx="2" fill="url(#g29)" /><rect x="144.00" y="705.80" width="12.00" height="12.80" rx="2" fill="url(#g29)" /><rect x="159.00" y="705.80" width="12.00" height="12.80" rx="2" fill="url(#g29)" /><rect x="174.00" y="705.80" width="12.00" height="12.80" rx="2" fill="url(#g29)" /><rect x="189.00" y="705.80" width="12.00" height="12.80" rx="2" fill="url(#g29)" /><rect x="204.00" y="705.80" width="12.00" height="12.80" rx="2" fill="url(#g29)" /><rect x="219.00" y="705.80" width="12.00" height="12.80" rx="2" fill="url(#g29)" /><rect x="234.00" y="705.80" width="12.00" height="12.80" rx="2" fill="url(#g29)" /><rect x="249.00" y="705.80" width="12.00" height="12.80" rx="2" fill="url(#g29)" /><rect x="264.00" y="705.80" width="12.00" height="12.80" rx="2" fill="url(#g29)" /><rect x="279.00" y="705.80" width="12.00" height="12.80" rx="2" fill="url(#g29)" /><rect x="294.00" y="705.80" width="12.00" height="12.80" rx="2" fill="url(#g29)" /><rect x="309.00" y="705.80" width="12.00" height="12.80" rx="2" fill="url(#g29)" /><rect x="324.00" y="705.80" width="12.00" height="12.80" rx="2" fill="url(#g29)" /><rect x="339.00" y="705.80" width="12.00" height="12.80" rx="2" fill="url(#g29)" /><rect x="354.00" y="705.80" width="12.00" height="12.80" rx="2" fill="url(#g29)" /><rect x="369.00" y="705.80" width="12.00" height="12.80" rx="2" fill="url(#g29)" /><rect x="384.00" y="705.80" width="12.00" height="12.80" rx="2" fill="url(#g29)" /><rect x="399.00" y="705.80" width="12.00" height="12.80" rx="2" fill="url(#g29)" /><rect x="414.00" y="705.80" width="12.00" height="12.80" rx="2" fill="url(#g29)" /><rect x="429.00" y="705.80" width="12.00" height="12.80" rx="2" fill="url(#g29)" /><rect x="444.00" y="705.80" width="12.00" height="12.80" rx="2" fill="url(#g29)" /><rect x="459.00" y="705.80" width="12.00" height="12.80" rx="2" fill="url(#g29)" /><rect x="474.00" y="705.80" width="12.00" height="12.80" rx="2" fill="url(#g29)" /><rect x="489.00" y="705.80" width="12.00" height="12.80" rx="2" fill="url(#g29)" /><rect x="504.00" y="705.80" width="12.00" height="12.80" rx="2" fill="url(#g29)" /><rect x="519.00" y="705.80" width="12.00" height="12.80" rx="2" fill="url(#g29)" /><rect x="534.00" y="705.80" width="12.00" height="12.80" rx="2" fill="url(#g29)" /><text x="661.70" y="717.00" font-size="14.42" fill="#6e9df2" text-anchor="middle" font-weight="normal"  textLength="7.79" lengthAdjust="spacingAndGlyphs">2</text><text x="115.20" y="732.00" font-size="15.04" fill="#ccccdc" text-anchor="end" font-weight="normal"  textLength="71.37" lengthAdjust="spacingAndGlyphs" stroke="#ccccdc" stroke-width="0.3">WORKING</text><rect x="129.00" y="720.80" width="12.00" height="12.80" rx="2" fill="url(#g30)" /><rect x="144.00" y="720.80" width="12.00" height="12.80" rx="2" fill="rgba(132,187,113,0.2)" /><rect x="159.00" y="720.80" width="12.00" height="12.80" rx="2" fill="rgba(141,190,110,0.2)" /><rect x="174.00" y="720.80" width="12.00" height="12.80" rx="2" fill="rgba(150,192,107,0.2)" /><rect x="189.00" y="720.80" width="12.00" height="12.80" rx="2" fill="rgba(159,195,104,0.2)" /><rect x="204.00" y="720.80" width="12.00" height="12.80" rx="2" fill="rgba(168,197,101,0.2)" /><rect x="219.00" y="720.80" width="12.00" height="12.80" rx="2" fill="rgba(176,200,98,0.2)" /><rect x="234.00" y="720.80" width="12.00" height="12.80" rx="2" fill="rgba(185,203,95,0.2)" /><rect x="249.00" y="720.80" width="12.00" height="12.80" rx="2" fill="rgba(194,205,92,0.2)" /><rect x="264.00" y="720.80" width="12.00" height="12.80" rx="2" fill="rgba(203,208,89,0.2)" /><rect x="279.00" y="720.80" width="12.00" height="12.80" rx="2" fill="rgba(211,210,86,0.2)" /><rect x="294.00" y="720.80" width="12.00" height="12.80" rx="2" fill="rgba(220,213,83,0.2)" /><rect x="309.00" y="720.80" width="12.00" height="12.80" rx="2" fill="rgba(229,216,80,0.2)" /><rect x="324.00" y="720.80" width="12.00" height="12.80" rx="2" fill="rgba(238,218,77,0.2)" /><rect x="339.00" y="720.80" width="12.00" height="12.80" rx="2" fill="rgba(241,215,76,0.2)" /><rect x="354.00" y="720.80" width="12.00" height="12.80" rx="2" fill="rgba(239,204,78,0.2)" /><rect x="369.00" y="720.80" width="12.00" height="12.80" rx="2" fill="rgba(238,194,80,0.2)" /><rect x="384.00" y="720.80" width="12.00" height="12.80" rx="2" fill="rgba(236,184,82,0.2)" /><rect x="399.00" y="720.80" width="12.00" height="12.80" rx="2" fill="rgba(234,174,83,0.2)" /><rect x="414.00" y="720.80" width="12.00" height="12.80" rx="2" fill="rgba(233,164,85,0.2)" /><rect x="429.00" y="720.80" width="12.00" height="12.80" rx="2" fill="rgba(231,154,87,0.2)" /><rect x="444.00" y="720.80" width="12.00" height="12.80" rx="2" fill="rgba(229,144,88,0.2)" /><rect x="459.00" y="720.80" width="12.00" height="12.80" rx="2" fill="rgba(227,134,90,0.2)" /><rect x="474.00" y="720.80" width="12.00" height="12.80" rx="2" fill="rgba(226,124,92,0.2)" /><rect x="489.00" y="720.80" width="12.00" height="12.80" rx="2" fill="rgba(224,114,94,0.2)" /><rect x="504.00" y="720.80" width="12.00" height="12.80" rx="2" fill="rgba(222,104,95,0.2)" /><rect x="519.00" y="720.80" width="12.00" height="12.80" rx="2" fill="rgba(220,94,97,0.2)" /><rect x="534.00" y="720.80" width="12.00" height="12.80" rx="2" fill="rgba(219,84,99,0.2)" /><text x="661.70" y="732.00" font-size="14.42" fill="#78c46d" text-anchor="middle" font-weight="normal"  textLength="7.79" lengthAdjust="spacingAndGlyphs">0</text><text x="115.20" y="747.00" font-size="15.04" fill="#ccccdc" text-anchor="end" font-weight="normal"  textLength="71.37" lengthAdjust="spacingAndGlyphs" stroke="#ccccdc" stroke-width="0.3">WORKING</text><rect x="129.00" y="735.80" width="12.00" height="12.80" rx="2" fill="url(#g30)" /><rect x="144.00" y="735.80" width="12.00" height="12.80" rx="2" fill="rgba(132,187,113,0.2)" /><rect x="159.00" y="735.80" width="12.00" height="12.80" rx="2" fill="rgba(141,190,110,0.2)" /><rect x="174.00" y="735.80" width="12.00" height="12.80" rx="2" fill="rgba(150,192,107,0.2)" /><rect x="189.00" y="735.80" width="12.00" height="12.80" rx="2" fill="rgba(159,195,104,0.2)" /><rect x="204.00" y="735.80" width="12.00" height="12.80" rx="2" fill="rgba(168,197,101,0.2)" /><rect x="219.00" y="735.80" width="12.00" height="12.80" rx="2" fill="rgba(176,200,98,0.2)" /><rect x="234.00" y="735.80" width="12.00" height="12.80" rx="2" fill="rgba(185,203,95,0.2)" /><rect x="249.00" y="735.80" width="12.00" height="12.80" rx="2" fill="rgba(194,205,92,0.2)" /><rect x="264.00" y="735.80" width="12.00" height="12.80" rx="2" fill="rgba(203,208,89,0.2)" /><rect x="279.00" y="735.80" width="12.00" height="12.80" rx="2" fill="rgba(211,210,86,0.2)" /><rect x="294.00" y="735.80" width="12.00" height="12.80" rx="2" fill="rgba(220,213,83,0.2)" /><rect x="309.00" y="735.80" width="12.00" height="12.80" rx="2" fill="rgba(229,216,80,0.2)" /><rect x="324.00" y="735.80" width="12.00" height="12.80" rx="2" fill="rgba(238,218,77,0.2)" /><rect x="339.00" y="735.80" width="12.00" height="12.80" rx="2" fill="rgba(241,215,76,0.2)" /><rect x="354.00" y="735.80" width="12.00" height="12.80" rx="2" fill="rgba(239,204,78,0.2)" /><rect x="369.00" y="735.80" width="12.00" height="12.80" rx="2" fill="rgba(238,194,80,0.2)" /><rect x="384.00" y="735.80" width="12.00" height="12.80" rx="2" fill="rgba(236,184,82,0.2)" /><rect x="399.00" y="735.80" width="12.00" height="12.80" rx="2" fill="rgba(234,174,83,0.2)" /><rect x="414.00" y="735.80" width="12.00" height="12.80" rx="2" fill="rgba(233,164,85,0.2)" /><rect x="429.00" y="735.80" width="12.00" height="12.80" rx="2" fill="rgba(231,154,87,0.2)" /><rect x="444.00" y="735.80" width="12.00" height="12.80" rx="2" fill="rgba(229,144,88,0.2)" /><rect x="459.00" y="735.80" width="12.00" height="12.80" rx="2" fill="rgba(227,134,90,0.2)" /><rect x="474.00" y="735.80" width="12.00" height="12.80" rx="2" fill="rgba(226,124,92,0.2)" /><rect x="489.00" y="735.80" width="12.00" height="12.80" rx="2" fill="rgba(224,114,94,0.2)" /><rect x="504.00" y="735.80" width="12.00" height="12.80" rx="2" fill="rgba(222,104,95,0.2)" /><rect x="519.00" y="735.80" width="12.00" height="12.80" rx="2" fill="rgba(220,94,97,0.2)" /><rect x="534.00" y="735.80" width="12.00" height="12.80" rx="2" fill="rgba(219,84,99,0.2)" /><text x="661.70" y="747.00" font-size="14.42" fill="#78c46d" text-anchor="middle" font-weight="normal"  textLength="7.79" lengthAdjust="spacingAndGlyphs">0</text><text x="115.20" y="762.00" font-size="15.04" fill="#ccccdc" text-anchor="end" font-weight="normal"  textLength="71.37" lengthAdjust="spacingAndGlyphs" stroke="#ccccdc" stroke-width="0.3">WORKING</text><rect x="129.00" y="750.80" width="12.00" height="12.80" rx="2" fill="url(#g30)" /><rect x="144.00" y="750.80" width="12.00" height="12.80" rx="2" fill="rgba(132,187,113,0.2)" /><rect x="159.00" y="750.80" width="12.00" height="12.80" rx="2" fill="rgba(141,190,110,0.2)" /><rect x="174.00" y="750.80" width="12.00" height="12.80" rx="2" fill="rgba(150,192,107,0.2)" /><rect x="189.00" y="750.80" width="12.00" height="12.80" rx="2" fill="rgba(159,195,104,0.2)" /><rect x="204.00" y="750.80" width="12.00" height="12.80" rx="2" fill="rgba(168,197,101,0.2)" /><rect x="219.00" y="750.80" width="12.00" height="12.80" rx="2" fill="rgba(176,200,98,0.2)" /><rect x="234.00" y="750.80" width="12.00" height="12.80" rx="2" fill="rgba(185,203,95,0.2)" /><rect x="249.00" y="750.80" width="12.00" height="12.80" rx="2" fill="rgba(194,205,92,0.2)" /><rect x="264.00" y="750.80" width="12.00" height="12.80" rx="2" fill="rgba(203,208,89,0.2)" /><rect x="279.00" y="750.80" width="12.00" height="12.80" rx="2" fill="rgba(211,210,86,0.2)" /><rect x="294.00" y="750.80" width="12.00" height="12.80" rx="2" fill="rgba(220,213,83,0.2)" /><rect x="309.00" y="750.80" width="12.00" height="12.80" rx="2" fill="rgba(229,216,80,0.2)" /><rect x="324.00" y="750.80" width="12.00" height="12.80" rx="2" fill="rgba(238,218,77,0.2)" /><rect x="339.00" y="750.80" width="12.00" height="12.80" rx="2" fill="rgba(241,215,76,0.2)" /><rect x="354.00" y="750.80" width="12.00" height="12.80" rx="2" fill="rgba(239,204,78,0.2)" /><rect x="369.00" y="750.80" width="12.00" height="12.80" rx="2" fill="rgba(238,194,80,0.2)" /><rect x="384.00" y="750.80" width="12.00" height="12.80" rx="2" fill="rgba(236,184,82,0.2)" /><rect x="399.00" y="750.80" width="12.00" height="12.80" rx="2" fill="rgba(234,174,83,0.2)" /><rect x="414.00" y="750.80" width="12.00" height="12.80" rx="2" fill="rgba(233,164,85,0.2)" /><rect x="429.00" y="750.80" width="12.00" height="12.80" rx="2" fill="rgba(231,154,87,0.2)" /><rect x="444.00" y="750.80" width="12.00" height="12.80" rx="2" fill="rgba(229,144,88,0.2)" /><rect x="459.00" y="750.80" width="12.00" height="12.80" rx="2" fill="rgba(227,134,90,0.2)" /><rect x="474.00" y="750.80" width="12.00" height="12.80" rx="2" fill="rgba(226,124,92,0.2)" /><rect x="489.00" y="750.80" width="12.00" height="12.80" rx="2" fill="rgba(224,114,94,0.2)" /><rect x="504.00" y="750.80" width="12.00" height="12.80" rx="2" fill="rgba(222,104,95,0.2)" /><rect x="519.00" y="750.80" width="12.00" height="12.80" rx="2" fill="rgba(220,94,97,0.2)" /><rect x="534.00" y="750.80" width="12.00" height="12.80" rx="2" fill="rgba(219,84,99,0.2)" /><text x="661.70" y="762.00" font-size="14.42" fill="#78c46d" text-anchor="middle" font-weight="normal"  textLength="7.79" lengthAdjust="spacingAndGlyphs">0</text><text x="115.20" y="777.00" font-size="15.04" fill="#ccccdc" text-anchor="end" font-weight="normal"  textLength="71.37" lengthAdjust="spacingAndGlyphs" stroke="#ccccdc" stroke-width="0.3">WORKING</text><rect x="129.00" y="765.80" width="12.00" height="12.80" rx="2" fill="url(#g30)" /><rect x="144.00" y="765.80" width="12.00" height="12.80" rx="2" fill="rgba(132,187,113,0.2)" /><rect x="159.00" y="765.80" width="12.00" height="12.80" rx="2" fill="rgba(141,190,110,0.2)" /><rect x="174.00" y="765.80" width="12.00" height="12.80" rx="2" fill="rgba(150,192,107,0.2)" /><rect x="189.00" y="765.80" width="12.00" height="12.80" rx="2" fill="rgba(159,195,104,0.2)" /><rect x="204.00" y="765.80" width="12.00" height="12.80" rx="2" fill="rgba(168,197,101,0.2)" /><rect x="219.00" y="765.80" width="12.00" height="12.80" rx="2" fill="rgba(176,200,98,0.2)" /><rect x="234.00" y="765.80" width="12.00" height="12.80" rx="2" fill="rgba(185,203,95,0.2)" /><rect x="249.00" y="765.80" width="12.00" height="12.80" rx="2" fill="rgba(194,205,92,0.2)" /><rect x="264.00" y="765.80" width="12.00" height="12.80" rx="2" fill="rgba(203,208,89,0.2)" /><rect x="279.00" y="765.80" width="12.00" height="12.80" rx="2" fill="rgba(211,210,86,0.2)" /><rect x="294.00" y="765.80" width="12.00" height="12.80" rx="2" fill="rgba(220,213,83,0.2)" /><rect x="309.00" y="765.80" width="12.00" height="12.80" rx="2" fill="rgba(229,216,80,0.2)" /><rect x="324.00" y="765.80" width="12.00" height="12.80" rx="2" fill="rgba(238,218,77,0.2)" /><rect x="339.00" y="765.80" width="12.00" height="12.80" rx="2" fill="rgba(241,215,76,0.2)" /><rect x="354.00" y="765.80" width="12.00" height="12.80" rx="2" fill="rgba(239,204,78,0.2)" /><rect x="369.00" y="765.80" width="12.00" height="12.80" rx="2" fill="rgba(238,194,80,0.2)" /><rect x="384.00" y="765.80" width="12.00" height="12.80" rx="2" fill="rgba(236,184,82,0.2)" /><rect x="399.00" y="765.80" width="12.00" height="12.80" rx="2" fill="rgba(234,174,83,0.2)" /><rect x="414.00" y="765.80" width="12.00" height="12.80" rx="2" fill="rgba(233,164,85,0.2)" /><rect x="429.00" y="765.80" width="12.00" height="12.80" rx="2" fill="rgba(231,154,87,0.2)" /><rect x="444.00" y="765.80" width="12.00" height="12.80" rx="2" fill="rgba(229,144,88,0.2)" /><rect x="459.00" y="765.80" width="12.00" height="12.80" rx="2" fill="rgba(227,134,90,0.2)" /><rect x="474.00" y="765.80" width="12.00" height="12.80" rx="2" fill="rgba(226,124,92,0.2)" /><rect x="489.00" y="765.80" width="12.00" height="12.80" rx="2" fill="rgba(224,114,94,0.2)" /><rect x="504.00" y="765.80" width="12.00" height="12.80" rx="2" fill="rgba(222,104,95,0.2)" /><rect x="519.00" y="765.80" width="12.00" height="12.80" rx="2" fill="rgba(220,94,97,0.2)" /><rect x="534.00" y="765.80" width="12.00" height="12.80" rx="2" fill="rgba(219,84,99,0.2)" /><text x="661.70" y="777.00" font-size="14.42" fill="#78c46d" text-anchor="middle" font-weight="normal"  textLength="7.79" lengthAdjust="spacingAndGlyphs">0</text><text x="115.20" y="792.00" font-size="15.04" fill="#ccccdc" text-anchor="end" font-weight="normal"  textLength="71.37" lengthAdjust="spacingAndGlyphs" stroke="#ccccdc" stroke-width="0.3">WORKING</text><rect x="129.00" y="780.80" width="12.00" height="12.80" rx="2" fill="url(#g30)" /><rect x="144.00" y="780.80" width="12.00" height="12.80" rx="2" fill="rgba(132,187,113,0.2)" /><rect x="159.00" y="780.80" width="12.00" height="12.80" rx="2" fill="rgba(141,190,110,0.2)" /><rect x="174.00" y="780.80" width="12.00" height="12.80" rx="2" fill="rgba(150,192,107,0.2)" /><rect x="189.00" y="780.80" width="12.00" height="12.80" rx="2" fill="rgba(159,195,104,0.2)" /><rect x="204.00" y="780.80" width="12.00" height="12.80" rx="2" fill="rgba(168,197,101,0.2)" /><rect x="219.00" y="780.80" width="12.00" height="12.80" rx="2" fill="rgba(176,200,98,0.2)" /><rect x="234.00" y="780.80" width="12.00" height="12.80" rx="2" fill="rgba(185,203,95,0.2)" /><rect x="249.00" y="780.80" width="12.00" height="12.80" rx="2" fill="rgba(194,205,92,0.2)" /><rect x="264.00" y="780.80" width="12.00" height="12.80" rx="2" fill="rgba(203,208,89,0.2)" /><rect x="279.00" y="780.80" width="12.00" height="12.80" rx="2" fill="rgba(211,210,86,0.2)" /><rect x="294.00" y="780.80" width="12.00" height="12.80" rx="2" fill="rgba(220,213,83,0.2)" /><rect x="309.00" y="780.80" width="12.00" height="12.80" rx="2" fill="rgba(229,216,80,0.2)" /><rect x="324.00" y="780.80" width="12.00" height="12.80" rx="2" fill="rgba(238,218,77,0.2)" /><rect x="339.00" y="780.80" width="12.00" height="12.80" rx="2" fill="rgba(241,215,76,0.2)" /><rect x="354.00" y="780.80" width="12.00" height="12.80" rx="2" fill="rgba(239,204,78,0.2)" /><rect x="369.00" y="780.80" width="12.00" height="12.80" rx="2" fill="rgba(238,194,80,0.2)" /><rect x="384.00" y="780.80" width="12.00" height="12.80" rx="2" fill="rgba(236,184,82,0.2)" /><rect x="399.00" y="780.80" width="12.00" height="12.80" rx="2" fill="rgba(234,174,83,0.2)" /><rect x="414.00" y="780.80" width="12.00" height="12.80" rx="2" fill="rgba(233,164,85,0.2)" /><rect x="429.00" y="780.80" width="12.00" height="12.80" rx="2" fill="rgba(231,154,87,0.2)" /><rect x="444.00" y="780.80" width="12.00" height="12.80" rx="2" fill="rgba(229,144,88,0.2)" /><rect x="459.00" y="780.80" width="12.00" height="12.80" rx="2" fill="rgba(227,134,90,0.2)" /><rect x="474.00" y="780.80" width="12.00" height="12.80" rx="2" fill="rgba(226,124,92,0.2)" /><rect x="489.00" y="780.80" width="12.00" height="12.80" rx="2" fill="rgba(224,114,94,0.2)" /><rect x="504.00" y="780.80" width="12.00" height="12.80" rx="2" fill="rgba(222,104,95,0.2)" /><rect x="519.00" y="780.80" width="12.00" height="12.80" rx="2" fill="rgba(220,94,97,0.2)" /><rect x="534.00" y="780.80" width="12.00" height="12.80" rx="2" fill="rgba(219,84,99,0.2)" /><text x="661.70" y="792.00" font-size="14.42" fill="#78c46d" text-anchor="middle" font-weight="normal"  textLength="7.79" lengthAdjust="spacingAndGlyphs">0</text><text x="115.20" y="807.00" font-size="15.04" fill="#ccccdc" text-anchor="end" font-weight="normal"  textLength="71.37" lengthAdjust="spacingAndGlyphs" stroke="#ccccdc" stroke-width="0.3">WORKING</text><rect x="129.00" y="795.80" width="12.00" height="12.80" rx="2" fill="url(#g30)" /><rect x="144.00" y="795.80" width="12.00" height="12.80" rx="2" fill="rgba(132,187,113,0.2)" /><rect x="159.00" y="795.80" width="12.00" height="12.80" rx="2" fill="rgba(141,190,110,0.2)" /><rect x="174.00" y="795.80" width="12.00" height="12.80" rx="2" fill="rgba(150,192,107,0.2)" /><rect x="189.00" y="795.80" width="12.00" height="12.80" rx="2" fill="rgba(159,195,104,0.2)" /><rect x="204.00" y="795.80" width="12.00" height="12.80" rx="2" fill="rgba(168,197,101,0.2)" /><rect x="219.00" y="795.80" width="12.00" height="12.80" rx="2" fill="rgba(176,200,98,0.2)" /><rect x="234.00" y="795.80" width="12.00" height="12.80" rx="2" fill="rgba(185,203,95,0.2)" /><rect x="249.00" y="795.80" width="12.00" height="12.80" rx="2" fill="rgba(194,205,92,0.2)" /><rect x="264.00" y="795.80" width="12.00" height="12.80" rx="2" fill="rgba(203,208,89,0.2)" /><rect x="279.00" y="795.80" width="12.00" height="12.80" rx="2" fill="rgba(211,210,86,0.2)" /><rect x="294.00" y="795.80" width="12.00" height="12.80" rx="2" fill="rgba(220,213,83,0.2)" /><rect x="309.00" y="795.80" width="12.00" height="12.80" rx="2" fill="rgba(229,216,80,0.2)" /><rect x="324.00" y="795.80" width="12.00" height="12.80" rx="2" fill="rgba(238,218,77,0.2)" /><rect x="339.00" y="795.80" width="12.00" height="12.80" rx="2" fill="rgba(241,215,76,0.2)" /><rect x="354.00" y="795.80" width="12.00" height="12.80" rx="2" fill="rgba(239,204,78,0.2)" /><rect x="369.00" y="795.80" width="12.00" height="12.80" rx="2" fill="rgba(238,194,80,0.2)" /><rect x="384.00" y="795.80" width="12.00" height="12.80" rx="2" fill="rgba(236,184,82,0.2)" /><rect x="399.00" y="795.80" width="12.00" height="12.80" rx="2" fill="rgba(234,174,83,0.2)" /><rect x="414.00" y="795.80" width="12.00" height="12.80" rx="2" fill="rgba(233,164,85,0.2)" /><rect x="429.00" y="795.80" width="12.00" height="12.80" rx="2" fill="rgba(231,154,87,0.2)" /><rect x="444.00" y="795.80" width="12.00" height="12.80" rx="2" fill="rgba(229,144,88,0.2)" /><rect x="459.00" y="795.80" width="12.00" height="12.80" rx="2" fill="rgba(227,134,90,0.2)" /><rect x="474.00" y="795.80" width="12.00" height="12.80" rx="2" fill="rgba(226,124,92,0.2)" /><rect x="489.00" y="795.80" width="12.00" height="12.80" rx="2" fill="rgba(224,114,94,0.2)" /><rect x="504.00" y="795.80" width="12.00" height="12.80" rx="2" fill="rgba(222,104,95,0.2)" /><rect x="519.00" y="795.80" width="12.00" height="12.80" rx="2" fill="rgba(220,94,97,0.2)" /><rect x="534.00" y="795.80" width="12.00" height="12.80" rx="2" fill="rgba(219,84,99,0.2)" /><text x="661.70" y="807.00" font-size="14.42" fill="#78c46d" text-anchor="middle" font-weight="normal"  textLength="7.79" lengthAdjust="spacingAndGlyphs">0</text><text x="115.20" y="822.00" font-size="15.04" fill="#ccccdc" text-anchor="end" font-weight="normal"  textLength="71.37" lengthAdjust="spacingAndGlyphs" stroke="#ccccdc" stroke-width="0.3">WORKING</text><rect x="129.00" y="810.80" width="12.00" height="12.80" rx="2" fill="url(#g30)" /><rect x="144.00" y="810.80" width="12.00" height="12.80" rx="2" fill="rgba(132,187,113,0.2)" /><rect x="159.00" y="810.80" width="12.00" height="12.80" rx="2" fill="rgba(141,190,110,0.2)" /><rect x="174.00" y="810.80" width="12.00" height="12.80" rx="2" fill="rgba(150,192,107,0.2)" /><rect x="189.00" y="810.80" width="12.00" height="12.80" rx="2" fill="rgba(159,195,104,0.2)" /><rect x="204.00" y="810.80" width="12.00" height="12.80" rx="2" fill="rgba(168,197,101,0.2)" /><rect x="219.00" y="810.80" width="12.00" height="12.80" rx="2" fill="rgba(176,200,98,0.2)" /><rect x="234.00" y="810.80" width="12.00" height="12.80" rx="2" fill="rgba(185,203,95,0.2)" /><rect x="249.00" y="810.80" width="12.00" height="12.80" rx="2" fill="rgba(194,205,92,0.2)" /><rect x="264.00" y="810.80" width="12.00" height="12.80" rx="2" fill="rgba(203,208,89,0.2)" /><rect x="279.00" y="810.80" width="12.00" height="12.80" rx="2" fill="rgba(211,210,86,0.2)" /><rect x="294.00" y="810.80" width="12.00" height="12.80" rx="2" fill="rgba(220,213,83,0.2)" /><rect x="309.00" y="810.80" width="12.00" height="12.80" rx="2" fill="rgba(229,216,80,0.2)" /><rect x="324.00" y="810.80" width="12.00" height="12.80" rx="2" fill="rgba(238,218,77,0.2)" /><rect x="339.00" y="810.80" width="12.00" height="12.80" rx="2" fill="rgba(241,215,76,0.2)" /><rect x="354.00" y="810.80" width="12.00" height="12.80" rx="2" fill="rgba(239,204,78,0.2)" /><rect x="369.00" y="810.80" width="12.00" height="12.80" rx="2" fill="rgba(238,194,80,0.2)" /><rect x="384.00" y="810.80" width="12.00" height="12.80" rx="2" fill="rgba(236,184,82,0.2)" /><rect x="399.00" y="810.80" width="12.00" height="12.80" rx="2" fill="rgba(234,174,83,0.2)" /><rect x="414.00" y="810.80" width="12.00" height="12.80" rx="2" fill="rgba(233,164,85,0.2)" /><rect x="429.00" y="810.80" width="12.00" height="12.80" rx="2" fill="rgba(231,154,87,0.2)" /><rect x="444.00" y="810.80" width="12.00" height="12.80" rx="2" fill="rgba(229,144,88,0.2)" /><rect x="459.00" y="810.80" width="12.00" height="12.80" rx="2" fill="rgba(227,134,90,0.2)" /><rect x="474.00" y="810.80" width="12.00" height="12.80" rx="2" fill="rgba(226,124,92,0.2)" /><rect x="489.00" y="810.80" width="12.00" height="12.80" rx="2" fill="rgba(224,114,94,0.2)" /><rect x="504.00" y="810.80" width="12.00" height="12.80" rx="2" fill="rgba(222,104,95,0.2)" /><rect x="519.00" y="810.80" width="12.00" height="12.80" rx="2" fill="rgba(220,94,97,0.2)" /><rect x="534.00" y="810.80" width="12.00" height="12.80" rx="2" fill="rgba(219,84,99,0.2)" /><text x="661.70" y="822.00" font-size="14.42" fill="#78c46d" text-anchor="middle" font-weight="normal"  textLength="7.79" lengthAdjust="spacingAndGlyphs">0</text><text x="115.20" y="837.00" font-size="15.04" fill="#ccccdc" text-anchor="end" font-weight="normal"  textLength="55.71" lengthAdjust="spacingAndGlyphs" stroke="#ccccdc" stroke-width="0.3">INVALID</text><rect x="129.00" y="825.80" width="12.00" height="12.80" rx="2" fill="url(#g31)" /><rect x="144.00" y="825.80" width="12.00" height="12.80" rx="2" fill="rgba(172,33,49,0.2)" /><rect x="159.00" y="825.80" width="12.00" height="12.80" rx="2" fill="rgba(172,33,49,0.2)" /><rect x="174.00" y="825.80" width="12.00" height="12.80" rx="2" fill="rgba(172,33,49,0.2)" /><rect x="189.00" y="825.80" width="12.00" height="12.80" rx="2" fill="rgba(172,33,49,0.2)" /><rect x="204.00" y="825.80" width="12.00" height="12.80" rx="2" fill="rgba(172,33,49,0.2)" /><rect x="219.00" y="825.80" width="12.00" height="12.80" rx="2" fill="rgba(172,33,49,0.2)" /><rect x="234.00" y="825.80" width="12.00" height="12.80" rx="2" fill="rgba(172,33,49,0.2)" /><rect x="249.00" y="825.80" width="12.00" height="12.80" rx="2" fill="rgba(172,33,49,0.2)" /><rect x="264.00" y="825.80" width="12.00" height="12.80" rx="2" fill="rgba(172,33,49,0.2)" /><rect x="279.00" y="825.80" width="12.00" height="12.80" rx="2" fill="rgba(172,33,49,0.2)" /><rect x="294.00" y="825.80" width="12.00" height="12.80" rx="2" fill="rgba(172,33,49,0.2)" /><rect x="309.00" y="825.80" width="12.00" height="12.80" rx="2" fill="rgba(172,33,49,0.2)" /><rect x="324.00" y="825.80" width="12.00" height="12.80" rx="2" fill="rgba(172,33,49,0.2)" /><rect x="339.00" y="825.80" width="12.00" height="12.80" rx="2" fill="rgba(172,33,49,0.2)" /><rect x="354.00" y="825.80" width="12.00" height="12.80" rx="2" fill="rgba(172,33,49,0.2)" /><rect x="369.00" y="825.80" width="12.00" height="12.80" rx="2" fill="rgba(172,33,49,0.2)" /><rect x="384.00" y="825.80" width="12.00" height="12.80" rx="2" fill="rgba(172,33,49,0.2)" /><rect x="399.00" y="825.80" width="12.00" height="12.80" rx="2" fill="rgba(172,33,49,0.2)" /><rect x="414.00" y="825.80" width="12.00" height="12.80" rx="2" fill="rgba(172,33,49,0.2)" /><rect x="429.00" y="825.80" width="12.00" height="12.80" rx="2" fill="rgba(172,33,49,0.2)" /><rect x="444.00" y="825.80" width="12.00" height="12.80" rx="2" fill="rgba(172,33,49,0.2)" /><rect x="459.00" y="825.80" width="12.00" height="12.80" rx="2" fill="rgba(172,33,49,0.2)" /><rect x="474.00" y="825.80" width="12.00" height="12.80" rx="2" fill="rgba(172,33,49,0.2)" /><rect x="489.00" y="825.80" width="12.00" height="12.80" rx="2" fill="rgba(172,33,49,0.2)" /><rect x="504.00" y="825.80" width="12.00" height="12.80" rx="2" fill="rgba(172,33,49,0.2)" /><rect x="519.00" y="825.80" width="12.00" height="12.80" rx="2" fill="rgba(172,33,49,0.2)" /><rect x="534.00" y="825.80" width="12.00" height="12.80" rx="2" fill="rgba(172,33,49,0.2)" /><text x="661.70" y="837.00" font-size="14.42" fill="#d8404c" text-anchor="middle" font-weight="normal"  textLength="7.79" lengthAdjust="spacingAndGlyphs">0</text><text x="115.20" y="852.00" font-size="15.04" fill="#ccccdc" text-anchor="end" font-weight="normal"  textLength="55.71" lengthAdjust="spacingAndGlyphs" stroke="#ccccdc" stroke-width="0.3">INVALID</text><rect x="129.00" y="840.80" width="12.00" height="12.80" rx="2" fill="url(#g31)" /><rect x="144.00" y="840.80" width="12.00" height="12.80" rx="2" fill="rgba(172,33,49,0.2)" /><rect x="159.00" y="840.80" width="12.00" height="12.80" rx="2" fill="rgba(172,33,49,0.2)" /><rect x="174.00" y="840.80" width="12.00" height="12.80" rx="2" fill="rgba(172,33,49,0.2)" /><rect x="189.00" y="840.80" width="12.00" height="12.80" rx="2" fill="rgba(172,33,49,0.2)" /><rect x="204.00" y="840.80" width="12.00" height="12.80" rx="2" fill="rgba(172,33,49,0.2)" /><rect x="219.00" y="840.80" width="12.00" height="12.80" rx="2" fill="rgba(172,33,49,0.2)" /><rect x="234.00" y="840.80" width="12.00" height="12.80" rx="2" fill="rgba(172,33,49,0.2)" /><rect x="249.00" y="840.80" width="12.00" height="12.80" rx="2" fill="rgba(172,33,49,0.2)" /><rect x="264.00" y="840.80" width="12.00" height="12.80" rx="2" fill="rgba(172,33,49,0.2)" /><rect x="279.00" y="840.80" width="12.00" height="12.80" rx="2" fill="rgba(172,33,49,0.2)" /><rect x="294.00" y="840.80" width="12.00" height="12.80" rx="2" fill="rgba(172,33,49,0.2)" /><rect x="309.00" y="840.80" width="12.00" height="12.80" rx="2" fill="rgba(172,33,49,0.2)" /><rect x="324.00" y="840.80" width="12.00" height="12.80" rx="2" fill="rgba(172,33,49,0.2)" /><rect x="339.00" y="840.80" width="12.00" height="12.80" rx="2" fill="rgba(172,33,49,0.2)" /><rect x="354.00" y="840.80" width="12.00" height="12.80" rx="2" fill="rgba(172,33,49,0.2)" /><rect x="369.00" y="840.80" width="12.00" height="12.80" rx="2" fill="rgba(172,33,49,0.2)" /><rect x="384.00" y="840.80" width="12.00" height="12.80" rx="2" fill="rgba(172,33,49,0.2)" /><rect x="399.00" y="840.80" width="12.00" height="12.80" rx="2" fill="rgba(172,33,49,0.2)" /><rect x="414.00" y="840.80" width="12.00" height="12.80" rx="2" fill="rgba(172,33,49,0.2)" /><rect x="429.00" y="840.80" width="12.00" height="12.80" rx="2" fill="rgba(172,33,49,0.2)" /><rect x="444.00" y="840.80" width="12.00" height="12.80" rx="2" fill="rgba(172,33,49,0.2)" /><rect x="459.00" y="840.80" width="12.00" height="12.80" rx="2" fill="rgba(172,33,49,0.2)" /><rect x="474.00" y="840.80" width="12.00" height="12.80" rx="2" fill="rgba(172,33,49,0.2)" /><rect x="489.00" y="840.80" width="12.00" height="12.80" rx="2" fill="rgba(172,33,49,0.2)" /><rect x="504.00" y="840.80" width="12.00" height="12.80" rx="2" fill="rgba(172,33,49,0.2)" /><rect x="519.00" y="840.80" width="12.00" height="12.80" rx="2" fill="rgba(172,33,49,0.2)" /><rect x="534.00" y="840.80" width="12.00" height="12.80" rx="2" fill="rgba(172,33,49,0.2)" /><text x="661.70" y="852.00" font-size="14.42" fill="#d8404c" text-anchor="middle" font-weight="normal"  textLength="7.79" lengthAdjust="spacingAndGlyphs">0</text><text x="115.20" y="867.00" font-size="15.04" fill="#ccccdc" text-anchor="end" font-weight="normal"  textLength="55.71" lengthAdjust="spacingAndGlyphs" stroke="#ccccdc" stroke-width="0.3">INVALID</text><rect x="129.00" y="855.80" width="12.00" height="12.80" rx="2" fill="url(#g31)" /><rect x="144.00" y="855.80" width="12.00" height="12.80" rx="2" fill="rgba(172,33,49,0.2)" /><rect x="159.00" y="855.80" width="12.00" height="12.80" rx="2" fill="rgba(172,33,49,0.2)" /><rect x="174.00" y="855.80" width="12.00" height="12.80" rx="2" fill="rgba(172,33,49,0.2)" /><rect x="189.00" y="855.80" width="12.00" height="12.80" rx="2" fill="rgba(172,33,49,0.2)" /><rect x="204.00" y="855.80" width="12.00" height="12.80" rx="2" fill="rgba(172,33,49,0.2)" /><rect x="219.00" y="855.80" width="12.00" height="12.80" rx="2" fill="rgba(172,33,49,0.2)" /><rect x="234.00" y="855.80" width="12.00" height="12.80" rx="2" fill="rgba(172,33,49,0.2)" /><rect x="249.00" y="855.80" width="12.00" height="12.80" rx="2" fill="rgba(172,33,49,0.2)" /><rect x="264.00" y="855.80" width="12.00" height="12.80" rx="2" fill="rgba(172,33,49,0.2)" /><rect x="279.00" y="855.80" width="12.00" height="12.80" rx="2" fill="rgba(172,33,49,0.2)" /><rect x="294.00" y="855.80" width="12.00" height="12.80" rx="2" fill="rgba(172,33,49,0.2)" /><rect x="309.00" y="855.80" width="12.00" height="12.80" rx="2" fill="rgba(172,33,49,0.2)" /><rect x="324.00" y="855.80" width="12.00" height="12.80" rx="2" fill="rgba(172,33,49,0.2)" /><rect x="339.00" y="855.80" width="12.00" height="12.80" rx="2" fill="rgba(172,33,49,0.2)" /><rect x="354.00" y="855.80" width="12.00" height="12.80" rx="2" fill="rgba(172,33,49,0.2)" /><rect x="369.00" y="855.80" width="12.00" height="12.80" rx="2" fill="rgba(172,33,49,0.2)" /><rect x="384.00" y="855.80" width="12.00" height="12.80" rx="2" fill="rgba(172,33,49,0.2)" /><rect x="399.00" y="855.80" width="12.00" height="12.80" rx="2" fill="rgba(172,33,49,0.2)" /><rect x="414.00" y="855.80" width="12.00" height="12.80" rx="2" fill="rgba(172,33,49,0.2)" /><rect x="429.00" y="855.80" width="12.00" height="12.80" rx="2" fill="rgba(172,33,49,0.2)" /><rect x="444.00" y="855.80" width="12.00" height="12.80" rx="2" fill="rgba(172,33,49,0.2)" /><rect x="459.00" y="855.80" width="12.00" height="12.80" rx="2" fill="rgba(172,33,49,0.2)" /><rect x="474.00" y="855.80" width="12.00" height="12.80" rx="2" fill="rgba(172,33,49,0.2)" /><rect x="489.00" y="855.80" width="12.00" height="12.80" rx="2" fill="rgba(172,33,49,0.2)" /><rect x="504.00" y="855.80" width="12.00" height="12.80" rx="2" fill="rgba(172,33,49,0.2)" /><rect x="519.00" y="855.80" width="12.00" height="12.80" rx="2" fill="rgba(172,33,49,0.2)" /><rect x="534.00" y="855.80" width="12.00" height="12.80" rx="2" fill="rgba(172,33,49,0.2)" /><text x="661.70" y="867.00" font-size="14.42" fill="#d8404c" text-anchor="middle" font-weight="normal"  textLength="7.79" lengthAdjust="spacingAndGlyphs">0</text></g><rect x="676.50" y="511.50" width="9.00" height="299.00" rx="0" fill="#48484f" stroke="#0c0c0f" stroke-width="1"/><text x="93.50" y="960.10" font-size="15.16" fill="#ccccdc" text-anchor="end" font-weight="normal"  textLength="49.09" lengthAdjust="spacingAndGlyphs" stroke="#ccccdc" stroke-width="0.3">PID: 16</text><rect x="107.06" y="937.90" width="11.80" height="32.90" rx="2.5" fill="url(#g30)" /><rect x="122.06" y="937.90" width="11.80" height="32.90" rx="2.5" fill="url(#g30)" /><rect x="137.06" y="937.90" width="11.80" height="32.90" rx="2.5" fill="url(#g30)" /><rect x="152.06" y="937.90" width="11.80" height="32.90" rx="2.5" fill="url(#g30)" /><rect x="167.06" y="937.90" width="11.80" height="32.90" rx="2.5" fill="url(#g30)" /><rect x="182.06" y="937.90" width="11.80" height="32.90" rx="2.5" fill="url(#g30)" /><rect x="197.06" y="937.90" width="11.80" height="32.90" rx="2.5" fill="url(#g30)" /><rect x="212.06" y="937.90" width="11.80" height="32.90" rx="2.5" fill="url(#g30)" /><rect x="227.06" y="937.90" width="11.80" height="32.90" rx="2.5" fill="url(#g30)" /><rect x="242.06" y="937.90" width="11.80" height="32.90" rx="2.5" fill="url(#g30)" /><rect x="257.06" y="937.90" width="11.80" height="32.90" rx="2.5" fill="url(#g30)" /><rect x="272.06" y="937.90" width="11.80" height="32.90" rx="2.5" fill="url(#g30)" /><rect x="287.06" y="937.90" width="11.80" height="32.90" rx="2.5" fill="url(#g30)" /><rect x="302.06" y="937.90" width="11.80" height="32.90" rx="2.5" fill="url(#g30)" /><rect x="317.06" y="937.90" width="11.80" height="32.90" rx="2.5" fill="url(#g30)" /><rect x="332.06" y="937.90" width="11.80" height="32.90" rx="2.5" fill="url(#g30)" /><rect x="347.06" y="937.90" width="11.80" height="32.90" rx="2.5" fill="url(#g30)" /><rect x="362.06" y="937.90" width="11.80" height="32.90" rx="2.5" fill="url(#g30)" /><rect x="377.06" y="937.90" width="11.80" height="32.90" rx="2.5" fill="url(#g30)" /><rect x="392.06" y="937.90" width="11.80" height="32.90" rx="2.5" fill="rgba(124,184,116,0.2)" /><rect x="407.06" y="937.90" width="11.80" height="32.90" rx="2.5" fill="rgba(124,184,116,0.2)" /><rect x="422.06" y="937.90" width="11.80" height="32.90" rx="2.5" fill="rgba(124,184,116,0.2)" /><rect x="437.06" y="937.90" width="11.80" height="32.90" rx="2.5" fill="rgba(124,184,116,0.2)" /><rect x="452.06" y="937.90" width="11.80" height="32.90" rx="2.5" fill="rgba(124,184,116,0.2)" /><rect x="467.06" y="937.90" width="11.80" height="32.90" rx="2.5" fill="rgba(124,184,116,0.2)" /><rect x="482.06" y="937.90" width="11.80" height="32.90" rx="2.5" fill="rgba(124,184,116,0.2)" /><rect x="497.06" y="937.90" width="11.80" height="32.90" rx="2.5" fill="rgba(124,184,116,0.2)" /><rect x="512.06" y="937.90" width="11.80" height="32.90" rx="2.5" fill="rgba(124,184,116,0.2)" /><rect x="527.06" y="937.90" width="11.80" height="32.90" rx="2.5" fill="rgba(124,184,116,0.2)" /><rect x="542.06" y="937.90" width="11.80" height="32.90" rx="2.5" fill="rgba(124,184,116,0.2)" /><rect x="557.06" y="937.90" width="11.80" height="32.90" rx="2.5" fill="rgba(124,184,116,0.2)" /><rect x="572.06" y="937.90" width="11.80" height="32.90" rx="2.5" fill="rgba(124,184,116,0.2)" /><rect x="587.06" y="937.90" width="11.80" height="32.90" rx="2.5" fill="rgba(124,184,116,0.2)" /><rect x="602.06" y="937.90" width="11.80" height="32.90" rx="2.5" fill="rgba(124,184,116,0.2)" /><rect x="617.06" y="937.90" width="11.80" height="32.90" rx="2.5" fill="rgba(124,184,116,0.2)" /><rect x="632.06" y="937.90" width="11.80" height="32.90" rx="2.5" fill="rgba(124,184,116,0.2)" /><rect x="647.06" y="937.90" width="11.80" height="32.90" rx="2.5" fill="rgba(124,184,116,0.2)" /><rect x="662.06" y="937.90" width="11.80" height="32.90" rx="2.5" fill="rgba(124,184,116,0.2)" /><rect x="677.06" y="937.90" width="11.80" height="32.90" rx="2.5" fill="rgba(124,184,116,0.2)" /><rect x="692.06" y="937.90" width="11.80" height="32.90" rx="2.5" fill="rgba(124,184,116,0.2)" /><rect x="707.06" y="937.90" width="11.80" height="32.90" rx="2.5" fill="rgba(124,184,116,0.2)" /><rect x="722.06" y="937.90" width="11.80" height="32.90" rx="2.5" fill="rgba(124,184,116,0.2)" /><rect x="737.06" y="937.90" width="11.80" height="32.90" rx="2.5" fill="rgba(124,184,116,0.2)" /><rect x="752.06" y="937.90" width="11.80" height="32.90" rx="2.5" fill="rgba(124,184,116,0.2)" /><rect x="767.06" y="937.90" width="11.80" height="32.90" rx="2.5" fill="rgba(124,184,116,0.2)" /><rect x="782.06" y="937.90" width="11.80" height="32.90" rx="2.5" fill="rgba(124,184,116,0.2)" /><rect x="797.06" y="937.90" width="11.80" height="32.90" rx="2.5" fill="rgba(124,184,116,0.2)" /><rect x="812.06" y="937.90" width="11.80" height="32.90" rx="2.5" fill="rgba(124,184,116,0.2)" /><rect x="827.06" y="937.90" width="11.80" height="32.90" rx="2.5" fill="rgba(124,184,116,0.2)" /><rect x="842.06" y="937.90" width="11.80" height="32.90" rx="2.5" fill="rgba(124,184,116,0.2)" /><rect x="857.06" y="937.90" width="11.80" height="32.90" rx="2.5" fill="rgba(124,184,116,0.2)" /><rect x="872.06" y="937.90" width="11.80" height="32.90" rx="2.5" fill="rgba(124,184,116,0.2)" /><rect x="887.06" y="937.90" width="11.80" height="32.90" rx="2.5" fill="rgba(124,184,116,0.2)" /><rect x="902.06" y="937.90" width="11.80" height="32.90" rx="2.5" fill="rgba(124,184,116,0.2)" /><rect x="917.06" y="937.90" width="11.80" height="32.90" rx="2.5" fill="rgba(124,184,116,0.2)" /><rect x="932.06" y="937.90" width="11.80" height="32.90" rx="2.5" fill="rgba(124,184,116,0.2)" /><rect x="947.06" y="937.90" width="11.80" height="32.90" rx="2.5" fill="rgba(124,184,116,0.2)" /><rect x="962.06" y="937.90" width="11.80" height="32.90" rx="2.5" fill="rgba(124,184,116,0.2)" /><rect x="977.06" y="937.90" width="11.80" height="32.90" rx="2.5" fill="rgba(124,184,116,0.2)" /><rect x="992.06" y="937.90" width="11.80" height="32.90" rx="2.5" fill="rgba(124,184,116,0.2)" /><rect x="1007.06" y="937.90" width="11.80" height="32.90" rx="2.5" fill="rgba(124,184,116,0.2)" /><rect x="1022.06" y="937.90" width="11.80" height="32.90" rx="2.5" fill="rgba(124,184,116,0.2)" /><rect x="1037.06" y="937.90" width="11.80" height="32.90" rx="2.5" fill="rgba(124,184,116,0.2)" /><rect x="1052.06" y="937.90" width="11.80" height="32.90" rx="2.5" fill="rgba(124,184,116,0.2)" /><rect x="1067.06" y="937.90" width="11.80" height="32.90" rx="2.5" fill="rgba(124,184,116,0.2)" /><rect x="1082.06" y="937.90" width="11.80" height="32.90" rx="2.5" fill="rgba(124,184,116,0.2)" /><rect x="1097.06" y="937.90" width="11.80" height="32.90" rx="2.5" fill="rgba(124,184,116,0.2)" /><rect x="1112.06" y="937.90" width="11.80" height="32.90" rx="2.5" fill="rgba(124,184,116,0.2)" /><rect x="1127.06" y="937.90" width="11.80" height="32.90" rx="2.5" fill="rgba(124,184,116,0.2)" /><rect x="1142.06" y="937.90" width="11.80" height="32.90" rx="2.5" fill="rgba(124,184,116,0.2)" /><rect x="1157.06" y="937.90" width="11.80" height="32.90" rx="2.5" fill="rgba(124,184,116,0.2)" /><text x="1234.00" y="966.10" font-size="34.51" fill="#78c46d" text-anchor="start" font-weight="normal"  textLength="70.2" lengthAdjust="spacingAndGlyphs" stroke="#78c46d" stroke-width="0.25">32.5</text><text x="1310.30" y="966.10" font-size="20.19" fill="#78c46d" text-anchor="start" font-weight="normal"  textLength="37.3" lengthAdjust="spacingAndGlyphs" stroke="#78c46d" stroke-width="0.2">MiB</text><text x="93.50" y="995.90" font-size="15.16" fill="#ccccdc" text-anchor="end" font-weight="normal"  textLength="49.09" lengthAdjust="spacingAndGlyphs" stroke="#ccccdc" stroke-width="0.3">PID: 17</text><rect x="107.06" y="973.70" width="11.80" height="32.90" rx="2.5" fill="url(#g30)" /><rect x="122.06" y="973.70" width="11.80" height="32.90" rx="2.5" fill="url(#g30)" /><rect x="137.06" y="973.70" width="11.80" height="32.90" rx="2.5" fill="url(#g30)" /><rect x="152.06" y="973.70" width="11.80" height="32.90" rx="2.5" fill="url(#g30)" /><rect x="167.06" y="973.70" width="11.80" height="32.90" rx="2.5" fill="url(#g30)" /><rect x="182.06" y="973.70" width="11.80" height="32.90" rx="2.5" fill="url(#g30)" /><rect x="197.06" y="973.70" width="11.80" height="32.90" rx="2.5" fill="url(#g30)" /><rect x="212.06" y="973.70" width="11.80" height="32.90" rx="2.5" fill="url(#g30)" /><rect x="227.06" y="973.70" width="11.80" height="32.90" rx="2.5" fill="url(#g30)" /><rect x="242.06" y="973.70" width="11.80" height="32.90" rx="2.5" fill="url(#g30)" /><rect x="257.06" y="973.70" width="11.80" height="32.90" rx="2.5" fill="url(#g30)" /><rect x="272.06" y="973.70" width="11.80" height="32.90" rx="2.5" fill="url(#g30)" /><rect x="287.06" y="973.70" width="11.80" height="32.90" rx="2.5" fill="url(#g30)" /><rect x="302.06" y="973.70" width="11.80" height="32.90" rx="2.5" fill="url(#g30)" /><rect x="317.06" y="973.70" width="11.80" height="32.90" rx="2.5" fill="url(#g30)" /><rect x="332.06" y="973.70" width="11.80" height="32.90" rx="2.5" fill="url(#g30)" /><rect x="347.06" y="973.70" width="11.80" height="32.90" rx="2.5" fill="url(#g30)" /><rect x="362.06" y="973.70" width="11.80" height="32.90" rx="2.5" fill="rgba(124,184,116,0.2)" /><rect x="377.06" y="973.70" width="11.80" height="32.90" rx="2.5" fill="rgba(124,184,116,0.2)" /><rect x="392.06" y="973.70" width="11.80" height="32.90" rx="2.5" fill="rgba(124,184,116,0.2)" /><rect x="407.06" y="973.70" width="11.80" height="32.90" rx="2.5" fill="rgba(124,184,116,0.2)" /><rect x="422.06" y="973.70" width="11.80" height="32.90" rx="2.5" fill="rgba(124,184,116,0.2)" /><rect x="437.06" y="973.70" width="11.80" height="32.90" rx="2.5" fill="rgba(124,184,116,0.2)" /><rect x="452.06" y="973.70" width="11.80" height="32.90" rx="2.5" fill="rgba(124,184,116,0.2)" /><rect x="467.06" y="973.70" width="11.80" height="32.90" rx="2.5" fill="rgba(124,184,116,0.2)" /><rect x="482.06" y="973.70" width="11.80" height="32.90" rx="2.5" fill="rgba(124,184,116,0.2)" /><rect x="497.06" y="973.70" width="11.80" height="32.90" rx="2.5" fill="rgba(124,184,116,0.2)" /><rect x="512.06" y="973.70" width="11.80" height="32.90" rx="2.5" fill="rgba(124,184,116,0.2)" /><rect x="527.06" y="973.70" width="11.80" height="32.90" rx="2.5" fill="rgba(124,184,116,0.2)" /><rect x="542.06" y="973.70" width="11.80" height="32.90" rx="2.5" fill="rgba(124,184,116,0.2)" /><rect x="557.06" y="973.70" width="11.80" height="32.90" rx="2.5" fill="rgba(124,184,116,0.2)" /><rect x="572.06" y="973.70" width="11.80" height="32.90" rx="2.5" fill="rgba(124,184,116,0.2)" /><rect x="587.06" y="973.70" width="11.80" height="32.90" rx="2.5" fill="rgba(124,184,116,0.2)" /><rect x="602.06" y="973.70" width="11.80" height="32.90" rx="2.5" fill="rgba(124,184,116,0.2)" /><rect x="617.06" y="973.70" width="11.80" height="32.90" rx="2.5" fill="rgba(124,184,116,0.2)" /><rect x="632.06" y="973.70" width="11.80" height="32.90" rx="2.5" fill="rgba(124,184,116,0.2)" /><rect x="647.06" y="973.70" width="11.80" height="32.90" rx="2.5" fill="rgba(124,184,116,0.2)" /><rect x="662.06" y="973.70" width="11.80" height="32.90" rx="2.5" fill="rgba(124,184,116,0.2)" /><rect x="677.06" y="973.70" width="11.80" height="32.90" rx="2.5" fill="rgba(124,184,116,0.2)" /><rect x="692.06" y="973.70" width="11.80" height="32.90" rx="2.5" fill="rgba(124,184,116,0.2)" /><rect x="707.06" y="973.70" width="11.80" height="32.90" rx="2.5" fill="rgba(124,184,116,0.2)" /><rect x="722.06" y="973.70" width="11.80" height="32.90" rx="2.5" fill="rgba(124,184,116,0.2)" /><rect x="737.06" y="973.70" width="11.80" height="32.90" rx="2.5" fill="rgba(124,184,116,0.2)" /><rect x="752.06" y="973.70" width="11.80" height="32.90" rx="2.5" fill="rgba(124,184,116,0.2)" /><rect x="767.06" y="973.70" width="11.80" height="32.90" rx="2.5" fill="rgba(124,184,116,0.2)" /><rect x="782.06" y="973.70" width="11.80" height="32.90" rx="2.5" fill="rgba(124,184,116,0.2)" /><rect x="797.06" y="973.70" width="11.80" height="32.90" rx="2.5" fill="rgba(124,184,116,0.2)" /><rect x="812.06" y="973.70" width="11.80" height="32.90" rx="2.5" fill="rgba(124,184,116,0.2)" /><rect x="827.06" y="973.70" width="11.80" height="32.90" rx="2.5" fill="rgba(124,184,116,0.2)" /><rect x="842.06" y="973.70" width="11.80" height="32.90" rx="2.5" fill="rgba(124,184,116,0.2)" /><rect x="857.06" y="973.70" width="11.80" height="32.90" rx="2.5" fill="rgba(124,184,116,0.2)" /><rect x="872.06" y="973.70" width="11.80" height="32.90" rx="2.5" fill="rgba(124,184,116,0.2)" /><rect x="887.06" y="973.70" width="11.80" height="32.90" rx="2.5" fill="rgba(124,184,116,0.2)" /><rect x="902.06" y="973.70" width="11.80" height="32.90" rx="2.5" fill="rgba(124,184,116,0.2)" /><rect x="917.06" y="973.70" width="11.80" height="32.90" rx="2.5" fill="rgba(124,184,116,0.2)" /><rect x="932.06" y="973.70" width="11.80" height="32.90" rx="2.5" fill="rgba(124,184,116,0.2)" /><rect x="947.06" y="973.70" width="11.80" height="32.90" rx="2.5" fill="rgba(124,184,116,0.2)" /><rect x="962.06" y="973.70" width="11.80" height="32.90" rx="2.5" fill="rgba(124,184,116,0.2)" /><rect x="977.06" y="973.70" width="11.80" height="32.90" rx="2.5" fill="rgba(124,184,116,0.2)" /><rect x="992.06" y="973.70" width="11.80" height="32.90" rx="2.5" fill="rgba(124,184,116,0.2)" /><rect x="1007.06" y="973.70" width="11.80" height="32.90" rx="2.5" fill="rgba(124,184,116,0.2)" /><rect x="1022.06" y="973.70" width="11.80" height="32.90" rx="2.5" fill="rgba(124,184,116,0.2)" /><rect x="1037.06" y="973.70" width="11.80" height="32.90" rx="2.5" fill="rgba(124,184,116,0.2)" /><rect x="1052.06" y="973.70" width="11.80" height="32.90" rx="2.5" fill="rgba(124,184,116,0.2)" /><rect x="1067.06" y="973.70" width="11.80" height="32.90" rx="2.5" fill="rgba(124,184,116,0.2)" /><rect x="1082.06" y="973.70" width="11.80" height="32.90" rx="2.5" fill="rgba(124,184,116,0.2)" /><rect x="1097.06" y="973.70" width="11.80" height="32.90" rx="2.5" fill="rgba(124,184,116,0.2)" /><rect x="1112.06" y="973.70" width="11.80" height="32.90" rx="2.5" fill="rgba(124,184,116,0.2)" /><rect x="1127.06" y="973.70" width="11.80" height="32.90" rx="2.5" fill="rgba(124,184,116,0.2)" /><rect x="1142.06" y="973.70" width="11.80" height="32.90" rx="2.5" fill="rgba(124,184,116,0.2)" /><rect x="1157.06" y="973.70" width="11.80" height="32.90" rx="2.5" fill="rgba(124,184,116,0.2)" /><text x="1234.00" y="1001.90" font-size="34.51" fill="#78c46d" text-anchor="start" font-weight="normal"  textLength="70.2" lengthAdjust="spacingAndGlyphs" stroke="#78c46d" stroke-width="0.25">32.3</text><text x="1310.30" y="1001.90" font-size="20.19" fill="#78c46d" text-anchor="start" font-weight="normal"  textLength="37.3" lengthAdjust="spacingAndGlyphs" stroke="#78c46d" stroke-width="0.2">MiB</text><text x="93.50" y="1031.70" font-size="15.16" fill="#ccccdc" text-anchor="end" font-weight="normal"  textLength="49.09" lengthAdjust="spacingAndGlyphs" stroke="#ccccdc" stroke-width="0.3">PID: 17</text><rect x="107.06" y="1009.50" width="11.80" height="32.90" rx="2.5" fill="url(#g30)" /><rect x="122.06" y="1009.50" width="11.80" height="32.90" rx="2.5" fill="rgba(124,184,116,0.2)" /><rect x="137.06" y="1009.50" width="11.80" height="32.90" rx="2.5" fill="rgba(124,184,116,0.2)" /><rect x="152.06" y="1009.50" width="11.80" height="32.90" rx="2.5" fill="rgba(124,184,116,0.2)" /><rect x="167.06" y="1009.50" width="11.80" height="32.90" rx="2.5" fill="rgba(124,184,116,0.2)" /><rect x="182.06" y="1009.50" width="11.80" height="32.90" rx="2.5" fill="rgba(124,184,116,0.2)" /><rect x="197.06" y="1009.50" width="11.80" height="32.90" rx="2.5" fill="rgba(124,184,116,0.2)" /><rect x="212.06" y="1009.50" width="11.80" height="32.90" rx="2.5" fill="rgba(124,184,116,0.2)" /><rect x="227.06" y="1009.50" width="11.80" height="32.90" rx="2.5" fill="rgba(124,184,116,0.2)" /><rect x="242.06" y="1009.50" width="11.80" height="32.90" rx="2.5" fill="rgba(124,184,116,0.2)" /><rect x="257.06" y="1009.50" width="11.80" height="32.90" rx="2.5" fill="rgba(124,184,116,0.2)" /><rect x="272.06" y="1009.50" width="11.80" height="32.90" rx="2.5" fill="rgba(124,184,116,0.2)" /><rect x="287.06" y="1009.50" width="11.80" height="32.90" rx="2.5" fill="rgba(124,184,116,0.2)" /><rect x="302.06" y="1009.50" width="11.80" height="32.90" rx="2.5" fill="rgba(124,184,116,0.2)" /><rect x="317.06" y="1009.50" width="11.80" height="32.90" rx="2.5" fill="rgba(124,184,116,0.2)" /><rect x="332.06" y="1009.50" width="11.80" height="32.90" rx="2.5" fill="rgba(124,184,116,0.2)" /><rect x="347.06" y="1009.50" width="11.80" height="32.90" rx="2.5" fill="rgba(124,184,116,0.2)" /><rect x="362.06" y="1009.50" width="11.80" height="32.90" rx="2.5" fill="rgba(124,184,116,0.2)" /><rect x="377.06" y="1009.50" width="11.80" height="32.90" rx="2.5" fill="rgba(124,184,116,0.2)" /><rect x="392.06" y="1009.50" width="11.80" height="32.90" rx="2.5" fill="rgba(124,184,116,0.2)" /><rect x="407.06" y="1009.50" width="11.80" height="32.90" rx="2.5" fill="rgba(124,184,116,0.2)" /><rect x="422.06" y="1009.50" width="11.80" height="32.90" rx="2.5" fill="rgba(124,184,116,0.2)" /><rect x="437.06" y="1009.50" width="11.80" height="32.90" rx="2.5" fill="rgba(124,184,116,0.2)" /><rect x="452.06" y="1009.50" width="11.80" height="32.90" rx="2.5" fill="rgba(124,184,116,0.2)" /><rect x="467.06" y="1009.50" width="11.80" height="32.90" rx="2.5" fill="rgba(124,184,116,0.2)" /><rect x="482.06" y="1009.50" width="11.80" height="32.90" rx="2.5" fill="rgba(124,184,116,0.2)" /><rect x="497.06" y="1009.50" width="11.80" height="32.90" rx="2.5" fill="rgba(124,184,116,0.2)" /><rect x="512.06" y="1009.50" width="11.80" height="32.90" rx="2.5" fill="rgba(124,184,116,0.2)" /><rect x="527.06" y="1009.50" width="11.80" height="32.90" rx="2.5" fill="rgba(124,184,116,0.2)" /><rect x="542.06" y="1009.50" width="11.80" height="32.90" rx="2.5" fill="rgba(124,184,116,0.2)" /><rect x="557.06" y="1009.50" width="11.80" height="32.90" rx="2.5" fill="rgba(124,184,116,0.2)" /><rect x="572.06" y="1009.50" width="11.80" height="32.90" rx="2.5" fill="rgba(124,184,116,0.2)" /><rect x="587.06" y="1009.50" width="11.80" height="32.90" rx="2.5" fill="rgba(124,184,116,0.2)" /><rect x="602.06" y="1009.50" width="11.80" height="32.90" rx="2.5" fill="rgba(124,184,116,0.2)" /><rect x="617.06" y="1009.50" width="11.80" height="32.90" rx="2.5" fill="rgba(124,184,116,0.2)" /><rect x="632.06" y="1009.50" width="11.80" height="32.90" rx="2.5" fill="rgba(124,184,116,0.2)" /><rect x="647.06" y="1009.50" width="11.80" height="32.90" rx="2.5" fill="rgba(124,184,116,0.2)" /><rect x="662.06" y="1009.50" width="11.80" height="32.90" rx="2.5" fill="rgba(124,184,116,0.2)" /><rect x="677.06" y="1009.50" width="11.80" height="32.90" rx="2.5" fill="rgba(124,184,116,0.2)" /><rect x="692.06" y="1009.50" width="11.80" height="32.90" rx="2.5" fill="rgba(124,184,116,0.2)" /><rect x="707.06" y="1009.50" width="11.80" height="32.90" rx="2.5" fill="rgba(124,184,116,0.2)" /><rect x="722.06" y="1009.50" width="11.80" height="32.90" rx="2.5" fill="rgba(124,184,116,0.2)" /><rect x="737.06" y="1009.50" width="11.80" height="32.90" rx="2.5" fill="rgba(124,184,116,0.2)" /><rect x="752.06" y="1009.50" width="11.80" height="32.90" rx="2.5" fill="rgba(124,184,116,0.2)" /><rect x="767.06" y="1009.50" width="11.80" height="32.90" rx="2.5" fill="rgba(124,184,116,0.2)" /><rect x="782.06" y="1009.50" width="11.80" height="32.90" rx="2.5" fill="rgba(124,184,116,0.2)" /><rect x="797.06" y="1009.50" width="11.80" height="32.90" rx="2.5" fill="rgba(124,184,116,0.2)" /><rect x="812.06" y="1009.50" width="11.80" height="32.90" rx="2.5" fill="rgba(124,184,116,0.2)" /><rect x="827.06" y="1009.50" width="11.80" height="32.90" rx="2.5" fill="rgba(124,184,116,0.2)" /><rect x="842.06" y="1009.50" width="11.80" height="32.90" rx="2.5" fill="rgba(124,184,116,0.2)" /><rect x="857.06" y="1009.50" width="11.80" height="32.90" rx="2.5" fill="rgba(124,184,116,0.2)" /><rect x="872.06" y="1009.50" width="11.80" height="32.90" rx="2.5" fill="rgba(124,184,116,0.2)" /><rect x="887.06" y="1009.50" width="11.80" height="32.90" rx="2.5" fill="rgba(124,184,116,0.2)" /><rect x="902.06" y="1009.50" width="11.80" height="32.90" rx="2.5" fill="rgba(124,184,116,0.2)" /><rect x="917.06" y="1009.50" width="11.80" height="32.90" rx="2.5" fill="rgba(124,184,116,0.2)" /><rect x="932.06" y="1009.50" width="11.80" height="32.90" rx="2.5" fill="rgba(124,184,116,0.2)" /><rect x="947.06" y="1009.50" width="11.80" height="32.90" rx="2.5" fill="rgba(124,184,116,0.2)" /><rect x="962.06" y="1009.50" width="11.80" height="32.90" rx="2.5" fill="rgba(124,184,116,0.2)" /><rect x="977.06" y="1009.50" width="11.80" height="32.90" rx="2.5" fill="rgba(124,184,116,0.2)" /><rect x="992.06" y="1009.50" width="11.80" height="32.90" rx="2.5" fill="rgba(124,184,116,0.2)" /><rect x="1007.06" y="1009.50" width="11.80" height="32.90" rx="2.5" fill="rgba(124,184,116,0.2)" /><rect x="1022.06" y="1009.50" width="11.80" height="32.90" rx="2.5" fill="rgba(124,184,116,0.2)" /><rect x="1037.06" y="1009.50" width="11.80" height="32.90" rx="2.5" fill="rgba(124,184,116,0.2)" /><rect x="1052.06" y="1009.50" width="11.80" height="32.90" rx="2.5" fill="rgba(124,184,116,0.2)" /><rect x="1067.06" y="1009.50" width="11.80" height="32.90" rx="2.5" fill="rgba(124,184,116,0.2)" /><rect x="1082.06" y="1009.50" width="11.80" height="32.90" rx="2.5" fill="rgba(124,184,116,0.2)" /><rect x="1097.06" y="1009.50" width="11.80" height="32.90" rx="2.5" fill="rgba(124,184,116,0.2)" /><rect x="1112.06" y="1009.50" width="11.80" height="32.90" rx="2.5" fill="rgba(124,184,116,0.2)" /><rect x="1127.06" y="1009.50" width="11.80" height="32.90" rx="2.5" fill="rgba(124,184,116,0.2)" /><rect x="1142.06" y="1009.50" width="11.80" height="32.90" rx="2.5" fill="rgba(124,184,116,0.2)" /><rect x="1157.06" y="1009.50" width="11.80" height="32.90" rx="2.5" fill="rgba(124,184,116,0.2)" /><text x="1236.10" y="1037.70" font-size="34.51" fill="#78c46d" text-anchor="start" font-weight="normal"  textLength="68.1" lengthAdjust="spacingAndGlyphs" stroke="#78c46d" stroke-width="0.25">30.7</text><text x="1310.30" y="1037.70" font-size="20.19" fill="#78c46d" text-anchor="start" font-weight="normal"  textLength="37.3" lengthAdjust="spacingAndGlyphs" stroke="#78c46d" stroke-width="0.2">MiB</text><text x="93.50" y="1067.50" font-size="15.16" fill="#ccccdc" text-anchor="end" font-weight="normal"  textLength="49.09" lengthAdjust="spacingAndGlyphs" stroke="#ccccdc" stroke-width="0.3">PID: 18</text><rect x="107.06" y="1045.30" width="11.80" height="32.90" rx="2.5" fill="url(#g30)" /><rect x="122.06" y="1045.30" width="11.80" height="32.90" rx="2.5" fill="url(#g30)" /><rect x="137.06" y="1045.30" width="11.80" height="32.90" rx="2.5" fill="url(#g30)" /><rect x="152.06" y="1045.30" width="11.80" height="32.90" rx="2.5" fill="url(#g30)" /><rect x="167.06" y="1045.30" width="11.80" height="32.90" rx="2.5" fill="url(#g30)" /><rect x="182.06" y="1045.30" width="11.80" height="32.90" rx="2.5" fill="url(#g30)" /><rect x="197.06" y="1045.30" width="11.80" height="32.90" rx="2.5" fill="url(#g30)" /><rect x="212.06" y="1045.30" width="11.80" height="32.90" rx="2.5" fill="url(#g30)" /><rect x="227.06" y="1045.30" width="11.80" height="32.90" rx="2.5" fill="url(#g30)" /><rect x="242.06" y="1045.30" width="11.80" height="32.90" rx="2.5" fill="rgba(124,184,116,0.2)" /><rect x="257.06" y="1045.30" width="11.80" height="32.90" rx="2.5" fill="rgba(124,184,116,0.2)" /><rect x="272.06" y="1045.30" width="11.80" height="32.90" rx="2.5" fill="rgba(124,184,116,0.2)" /><rect x="287.06" y="1045.30" width="11.80" height="32.90" rx="2.5" fill="rgba(124,184,116,0.2)" /><rect x="302.06" y="1045.30" width="11.80" height="32.90" rx="2.5" fill="rgba(124,184,116,0.2)" /><rect x="317.06" y="1045.30" width="11.80" height="32.90" rx="2.5" fill="rgba(124,184,116,0.2)" /><rect x="332.06" y="1045.30" width="11.80" height="32.90" rx="2.5" fill="rgba(124,184,116,0.2)" /><rect x="347.06" y="1045.30" width="11.80" height="32.90" rx="2.5" fill="rgba(124,184,116,0.2)" /><rect x="362.06" y="1045.30" width="11.80" height="32.90" rx="2.5" fill="rgba(124,184,116,0.2)" /><rect x="377.06" y="1045.30" width="11.80" height="32.90" rx="2.5" fill="rgba(124,184,116,0.2)" /><rect x="392.06" y="1045.30" width="11.80" height="32.90" rx="2.5" fill="rgba(124,184,116,0.2)" /><rect x="407.06" y="1045.30" width="11.80" height="32.90" rx="2.5" fill="rgba(124,184,116,0.2)" /><rect x="422.06" y="1045.30" width="11.80" height="32.90" rx="2.5" fill="rgba(124,184,116,0.2)" /><rect x="437.06" y="1045.30" width="11.80" height="32.90" rx="2.5" fill="rgba(124,184,116,0.2)" /><rect x="452.06" y="1045.30" width="11.80" height="32.90" rx="2.5" fill="rgba(124,184,116,0.2)" /><rect x="467.06" y="1045.30" width="11.80" height="32.90" rx="2.5" fill="rgba(124,184,116,0.2)" /><rect x="482.06" y="1045.30" width="11.80" height="32.90" rx="2.5" fill="rgba(124,184,116,0.2)" /><rect x="497.06" y="1045.30" width="11.80" height="32.90" rx="2.5" fill="rgba(124,184,116,0.2)" /><rect x="512.06" y="1045.30" width="11.80" height="32.90" rx="2.5" fill="rgba(124,184,116,0.2)" /><rect x="527.06" y="1045.30" width="11.80" height="32.90" rx="2.5" fill="rgba(124,184,116,0.2)" /><rect x="542.06" y="1045.30" width="11.80" height="32.90" rx="2.5" fill="rgba(124,184,116,0.2)" /><rect x="557.06" y="1045.30" width="11.80" height="32.90" rx="2.5" fill="rgba(124,184,116,0.2)" /><rect x="572.06" y="1045.30" width="11.80" height="32.90" rx="2.5" fill="rgba(124,184,116,0.2)" /><rect x="587.06" y="1045.30" width="11.80" height="32.90" rx="2.5" fill="rgba(124,184,116,0.2)" /><rect x="602.06" y="1045.30" width="11.80" height="32.90" rx="2.5" fill="rgba(124,184,116,0.2)" /><rect x="617.06" y="1045.30" width="11.80" height="32.90" rx="2.5" fill="rgba(124,184,116,0.2)" /><rect x="632.06" y="1045.30" width="11.80" height="32.90" rx="2.5" fill="rgba(124,184,116,0.2)" /><rect x="647.06" y="1045.30" width="11.80" height="32.90" rx="2.5" fill="rgba(124,184,116,0.2)" /><rect x="662.06" y="1045.30" width="11.80" height="32.90" rx="2.5" fill="rgba(124,184,116,0.2)" /><rect x="677.06" y="1045.30" width="11.80" height="32.90" rx="2.5" fill="rgba(124,184,116,0.2)" /><rect x="692.06" y="1045.30" width="11.80" height="32.90" rx="2.5" fill="rgba(124,184,116,0.2)" /><rect x="707.06" y="1045.30" width="11.80" height="32.90" rx="2.5" fill="rgba(124,184,116,0.2)" /><rect x="722.06" y="1045.30" width="11.80" height="32.90" rx="2.5" fill="rgba(124,184,116,0.2)" /><rect x="737.06" y="1045.30" width="11.80" height="32.90" rx="2.5" fill="rgba(124,184,116,0.2)" /><rect x="752.06" y="1045.30" width="11.80" height="32.90" rx="2.5" fill="rgba(124,184,116,0.2)" /><rect x="767.06" y="1045.30" width="11.80" height="32.90" rx="2.5" fill="rgba(124,184,116,0.2)" /><rect x="782.06" y="1045.30" width="11.80" height="32.90" rx="2.5" fill="rgba(124,184,116,0.2)" /><rect x="797.06" y="1045.30" width="11.80" height="32.90" rx="2.5" fill="rgba(124,184,116,0.2)" /><rect x="812.06" y="1045.30" width="11.80" height="32.90" rx="2.5" fill="rgba(124,184,116,0.2)" /><rect x="827.06" y="1045.30" width="11.80" height="32.90" rx="2.5" fill="rgba(124,184,116,0.2)" /><rect x="842.06" y="1045.30" width="11.80" height="32.90" rx="2.5" fill="rgba(124,184,116,0.2)" /><rect x="857.06" y="1045.30" width="11.80" height="32.90" rx="2.5" fill="rgba(124,184,116,0.2)" /><rect x="872.06" y="1045.30" width="11.80" height="32.90" rx="2.5" fill="rgba(124,184,116,0.2)" /><rect x="887.06" y="1045.30" width="11.80" height="32.90" rx="2.5" fill="rgba(124,184,116,0.2)" /><rect x="902.06" y="1045.30" width="11.80" height="32.90" rx="2.5" fill="rgba(124,184,116,0.2)" /><rect x="917.06" y="1045.30" width="11.80" height="32.90" rx="2.5" fill="rgba(124,184,116,0.2)" /><rect x="932.06" y="1045.30" width="11.80" height="32.90" rx="2.5" fill="rgba(124,184,116,0.2)" /><rect x="947.06" y="1045.30" width="11.80" height="32.90" rx="2.5" fill="rgba(124,184,116,0.2)" /><rect x="962.06" y="1045.30" width="11.80" height="32.90" rx="2.5" fill="rgba(124,184,116,0.2)" /><rect x="977.06" y="1045.30" width="11.80" height="32.90" rx="2.5" fill="rgba(124,184,116,0.2)" /><rect x="992.06" y="1045.30" width="11.80" height="32.90" rx="2.5" fill="rgba(124,184,116,0.2)" /><rect x="1007.06" y="1045.30" width="11.80" height="32.90" rx="2.5" fill="rgba(124,184,116,0.2)" /><rect x="1022.06" y="1045.30" width="11.80" height="32.90" rx="2.5" fill="rgba(124,184,116,0.2)" /><rect x="1037.06" y="1045.30" width="11.80" height="32.90" rx="2.5" fill="rgba(124,184,116,0.2)" /><rect x="1052.06" y="1045.30" width="11.80" height="32.90" rx="2.5" fill="rgba(124,184,116,0.2)" /><rect x="1067.06" y="1045.30" width="11.80" height="32.90" rx="2.5" fill="rgba(124,184,116,0.2)" /><rect x="1082.06" y="1045.30" width="11.80" height="32.90" rx="2.5" fill="rgba(124,184,116,0.2)" /><rect x="1097.06" y="1045.30" width="11.80" height="32.90" rx="2.5" fill="rgba(124,184,116,0.2)" /><rect x="1112.06" y="1045.30" width="11.80" height="32.90" rx="2.5" fill="rgba(124,184,116,0.2)" /><rect x="1127.06" y="1045.30" width="11.80" height="32.90" rx="2.5" fill="rgba(124,184,116,0.2)" /><rect x="1142.06" y="1045.30" width="11.80" height="32.90" rx="2.5" fill="rgba(124,184,116,0.2)" /><rect x="1157.06" y="1045.30" width="11.80" height="32.90" rx="2.5" fill="rgba(124,184,116,0.2)" /><text x="1241.10" y="1073.50" font-size="34.51" fill="#78c46d" text-anchor="start" font-weight="normal"  textLength="63.1" lengthAdjust="spacingAndGlyphs" stroke="#78c46d" stroke-width="0.25">31.5</text><text x="1310.30" y="1073.50" font-size="20.19" fill="#78c46d" text-anchor="start" font-weight="normal"  textLength="37.3" lengthAdjust="spacingAndGlyphs" stroke="#78c46d" stroke-width="0.2">MiB</text><text x="93.50" y="1103.30" font-size="15.16" fill="#ccccdc" text-anchor="end" font-weight="normal"  textLength="49.09" lengthAdjust="spacingAndGlyphs" stroke="#ccccdc" stroke-width="0.3">PID: 14</text><rect x="107.06" y="1081.10" width="11.80" height="32.90" rx="2.5" fill="url(#g30)" /><rect x="122.06" y="1081.10" width="11.80" height="32.90" rx="2.5" fill="url(#g30)" /><rect x="137.06" y="1081.10" width="11.80" height="32.90" rx="2.5" fill="url(#g30)" /><rect x="152.06" y="1081.10" width="11.80" height="32.90" rx="2.5" fill="url(#g30)" /><rect x="167.06" y="1081.10" width="11.80" height="32.90" rx="2.5" fill="url(#g30)" /><rect x="182.06" y="1081.10" width="11.80" height="32.90" rx="2.5" fill="url(#g30)" /><rect x="197.06" y="1081.10" width="11.80" height="32.90" rx="2.5" fill="url(#g30)" /><rect x="212.06" y="1081.10" width="11.80" height="32.90" rx="2.5" fill="url(#g30)" /><rect x="227.06" y="1081.10" width="11.80" height="32.90" rx="2.5" fill="url(#g30)" /><rect x="242.06" y="1081.10" width="11.80" height="32.90" rx="2.5" fill="url(#g30)" /><rect x="257.06" y="1081.10" width="11.80" height="32.90" rx="2.5" fill="url(#g30)" /><rect x="272.06" y="1081.10" width="11.80" height="32.90" rx="2.5" fill="url(#g30)" /><rect x="287.06" y="1081.10" width="11.80" height="32.90" rx="2.5" fill="url(#g30)" /><rect x="302.06" y="1081.10" width="11.80" height="32.90" rx="2.5" fill="url(#g30)" /><rect x="317.06" y="1081.10" width="11.80" height="32.90" rx="2.5" fill="url(#g30)" /><rect x="332.06" y="1081.10" width="11.80" height="32.90" rx="2.5" fill="url(#g30)" /><rect x="347.06" y="1081.10" width="11.80" height="32.90" rx="2.5" fill="url(#g30)" /><rect x="362.06" y="1081.10" width="11.80" height="32.90" rx="2.5" fill="url(#g30)" /><rect x="377.06" y="1081.10" width="11.80" height="32.90" rx="2.5" fill="url(#g30)" /><rect x="392.06" y="1081.10" width="11.80" height="32.90" rx="2.5" fill="url(#g30)" /><rect x="407.06" y="1081.10" width="11.80" height="32.90" rx="2.5" fill="url(#g30)" /><rect x="422.06" y="1081.10" width="11.80" height="32.90" rx="2.5" fill="url(#g30)" /><rect x="437.06" y="1081.10" width="11.80" height="32.90" rx="2.5" fill="url(#g30)" /><rect x="452.06" y="1081.10" width="11.80" height="32.90" rx="2.5" fill="url(#g30)" /><rect x="467.06" y="1081.10" width="11.80" height="32.90" rx="2.5" fill="url(#g30)" /><rect x="482.06" y="1081.10" width="11.80" height="32.90" rx="2.5" fill="url(#g30)" /><rect x="497.06" y="1081.10" width="11.80" height="32.90" rx="2.5" fill="url(#g30)" /><rect x="512.06" y="1081.10" width="11.80" height="32.90" rx="2.5" fill="url(#g30)" /><rect x="527.06" y="1081.10" width="11.80" height="32.90" rx="2.5" fill="url(#g30)" /><rect x="542.06" y="1081.10" width="11.80" height="32.90" rx="2.5" fill="url(#g30)" /><rect x="557.06" y="1081.10" width="11.80" height="32.90" rx="2.5" fill="rgba(124,184,116,0.2)" /><rect x="572.06" y="1081.10" width="11.80" height="32.90" rx="2.5" fill="rgba(124,184,116,0.2)" /><rect x="587.06" y="1081.10" width="11.80" height="32.90" rx="2.5" fill="rgba(124,184,116,0.2)" /><rect x="602.06" y="1081.10" width="11.80" height="32.90" rx="2.5" fill="rgba(124,184,116,0.2)" /><rect x="617.06" y="1081.10" width="11.80" height="32.90" rx="2.5" fill="rgba(124,184,116,0.2)" /><rect x="632.06" y="1081.10" width="11.80" height="32.90" rx="2.5" fill="rgba(124,184,116,0.2)" /><rect x="647.06" y="1081.10" width="11.80" height="32.90" rx="2.5" fill="rgba(124,184,116,0.2)" /><rect x="662.06" y="1081.10" width="11.80" height="32.90" rx="2.5" fill="rgba(124,184,116,0.2)" /><rect x="677.06" y="1081.10" width="11.80" height="32.90" rx="2.5" fill="rgba(124,184,116,0.2)" /><rect x="692.06" y="1081.10" width="11.80" height="32.90" rx="2.5" fill="rgba(124,184,116,0.2)" /><rect x="707.06" y="1081.10" width="11.80" height="32.90" rx="2.5" fill="rgba(124,184,116,0.2)" /><rect x="722.06" y="1081.10" width="11.80" height="32.90" rx="2.5" fill="rgba(124,184,116,0.2)" /><rect x="737.06" y="1081.10" width="11.80" height="32.90" rx="2.5" fill="rgba(124,184,116,0.2)" /><rect x="752.06" y="1081.10" width="11.80" height="32.90" rx="2.5" fill="rgba(124,184,116,0.2)" /><rect x="767.06" y="1081.10" width="11.80" height="32.90" rx="2.5" fill="rgba(124,184,116,0.2)" /><rect x="782.06" y="1081.10" width="11.80" height="32.90" rx="2.5" fill="rgba(124,184,116,0.2)" /><rect x="797.06" y="1081.10" width="11.80" height="32.90" rx="2.5" fill="rgba(124,184,116,0.2)" /><rect x="812.06" y="1081.10" width="11.80" height="32.90" rx="2.5" fill="rgba(124,184,116,0.2)" /><rect x="827.06" y="1081.10" width="11.80" height="32.90" rx="2.5" fill="rgba(124,184,116,0.2)" /><rect x="842.06" y="1081.10" width="11.80" height="32.90" rx="2.5" fill="rgba(124,184,116,0.2)" /><rect x="857.06" y="1081.10" width="11.80" height="32.90" rx="2.5" fill="rgba(124,184,116,0.2)" /><rect x="872.06" y="1081.10" width="11.80" height="32.90" rx="2.5" fill="rgba(124,184,116,0.2)" /><rect x="887.06" y="1081.10" width="11.80" height="32.90" rx="2.5" fill="rgba(124,184,116,0.2)" /><rect x="902.06" y="1081.10" width="11.80" height="32.90" rx="2.5" fill="rgba(124,184,116,0.2)" /><rect x="917.06" y="1081.10" width="11.80" height="32.90" rx="2.5" fill="rgba(124,184,116,0.2)" /><rect x="932.06" y="1081.10" width="11.80" height="32.90" rx="2.5" fill="rgba(124,184,116,0.2)" /><rect x="947.06" y="1081.10" width="11.80" height="32.90" rx="2.5" fill="rgba(124,184,116,0.2)" /><rect x="962.06" y="1081.10" width="11.80" height="32.90" rx="2.5" fill="rgba(124,184,116,0.2)" /><rect x="977.06" y="1081.10" width="11.80" height="32.90" rx="2.5" fill="rgba(124,184,116,0.2)" /><rect x="992.06" y="1081.10" width="11.80" height="32.90" rx="2.5" fill="rgba(124,184,116,0.2)" /><rect x="1007.06" y="1081.10" width="11.80" height="32.90" rx="2.5" fill="rgba(124,184,116,0.2)" /><rect x="1022.06" y="1081.10" width="11.80" height="32.90" rx="2.5" fill="rgba(124,184,116,0.2)" /><rect x="1037.06" y="1081.10" width="11.80" height="32.90" rx="2.5" fill="rgba(124,184,116,0.2)" /><rect x="1052.06" y="1081.10" width="11.80" height="32.90" rx="2.5" fill="rgba(124,184,116,0.2)" /><rect x="1067.06" y="1081.10" width="11.80" height="32.90" rx="2.5" fill="rgba(124,184,116,0.2)" /><rect x="1082.06" y="1081.10" width="11.80" height="32.90" rx="2.5" fill="rgba(124,184,116,0.2)" /><rect x="1097.06" y="1081.10" width="11.80" height="32.90" rx="2.5" fill="rgba(124,184,116,0.2)" /><rect x="1112.06" y="1081.10" width="11.80" height="32.90" rx="2.5" fill="rgba(124,184,116,0.2)" /><rect x="1127.06" y="1081.10" width="11.80" height="32.90" rx="2.5" fill="rgba(124,184,116,0.2)" /><rect x="1142.06" y="1081.10" width="11.80" height="32.90" rx="2.5" fill="rgba(124,184,116,0.2)" /><rect x="1157.06" y="1081.10" width="11.80" height="32.90" rx="2.5" fill="rgba(124,184,116,0.2)" /><text x="1234.00" y="1109.30" font-size="34.51" fill="#78c46d" text-anchor="start" font-weight="normal"  textLength="70.2" lengthAdjust="spacingAndGlyphs" stroke="#78c46d" stroke-width="0.25">33.5</text><text x="1310.30" y="1109.30" font-size="20.19" fill="#78c46d" text-anchor="start" font-weight="normal"  textLength="37.3" lengthAdjust="spacingAndGlyphs" stroke="#78c46d" stroke-width="0.2">MiB</text><text x="93.50" y="1139.10" font-size="15.16" fill="#ccccdc" text-anchor="end" font-weight="normal"  textLength="49.09" lengthAdjust="spacingAndGlyphs" stroke="#ccccdc" stroke-width="0.3">PID: 18</text><rect x="107.06" y="1116.90" width="11.80" height="32.90" rx="2.5" fill="url(#g30)" /><rect x="122.06" y="1116.90" width="11.80" height="32.90" rx="2.5" fill="url(#g30)" /><rect x="137.06" y="1116.90" width="11.80" height="32.90" rx="2.5" fill="url(#g30)" /><rect x="152.06" y="1116.90" width="11.80" height="32.90" rx="2.5" fill="url(#g30)" /><rect x="167.06" y="1116.90" width="11.80" height="32.90" rx="2.5" fill="url(#g30)" /><rect x="182.06" y="1116.90" width="11.80" height="32.90" rx="2.5" fill="url(#g30)" /><rect x="197.06" y="1116.90" width="11.80" height="32.90" rx="2.5" fill="url(#g30)" /><rect x="212.06" y="1116.90" width="11.80" height="32.90" rx="2.5" fill="url(#g30)" /><rect x="227.06" y="1116.90" width="11.80" height="32.90" rx="2.5" fill="url(#g30)" /><rect x="242.06" y="1116.90" width="11.80" height="32.90" rx="2.5" fill="url(#g30)" /><rect x="257.06" y="1116.90" width="11.80" height="32.90" rx="2.5" fill="url(#g30)" /><rect x="272.06" y="1116.90" width="11.80" height="32.90" rx="2.5" fill="url(#g30)" /><rect x="287.06" y="1116.90" width="11.80" height="32.90" rx="2.5" fill="url(#g30)" /><rect x="302.06" y="1116.90" width="11.80" height="32.90" rx="2.5" fill="url(#g30)" /><rect x="317.06" y="1116.90" width="11.80" height="32.90" rx="2.5" fill="url(#g30)" /><rect x="332.06" y="1116.90" width="11.80" height="32.90" rx="2.5" fill="url(#g30)" /><rect x="347.06" y="1116.90" width="11.80" height="32.90" rx="2.5" fill="url(#g30)" /><rect x="362.06" y="1116.90" width="11.80" height="32.90" rx="2.5" fill="url(#g30)" /><rect x="377.06" y="1116.90" width="11.80" height="32.90" rx="2.5" fill="url(#g30)" /><rect x="392.06" y="1116.90" width="11.80" height="32.90" rx="2.5" fill="url(#g30)" /><rect x="407.06" y="1116.90" width="11.80" height="32.90" rx="2.5" fill="url(#g30)" /><rect x="422.06" y="1116.90" width="11.80" height="32.90" rx="2.5" fill="url(#g30)" /><rect x="437.06" y="1116.90" width="11.80" height="32.90" rx="2.5" fill="url(#g30)" /><rect x="452.06" y="1116.90" width="11.80" height="32.90" rx="2.5" fill="rgba(124,184,116,0.2)" /><rect x="467.06" y="1116.90" width="11.80" height="32.90" rx="2.5" fill="rgba(124,184,116,0.2)" /><rect x="482.06" y="1116.90" width="11.80" height="32.90" rx="2.5" fill="rgba(124,184,116,0.2)" /><rect x="497.06" y="1116.90" width="11.80" height="32.90" rx="2.5" fill="rgba(124,184,116,0.2)" /><rect x="512.06" y="1116.90" width="11.80" height="32.90" rx="2.5" fill="rgba(124,184,116,0.2)" /><rect x="527.06" y="1116.90" width="11.80" height="32.90" rx="2.5" fill="rgba(124,184,116,0.2)" /><rect x="542.06" y="1116.90" width="11.80" height="32.90" rx="2.5" fill="rgba(124,184,116,0.2)" /><rect x="557.06" y="1116.90" width="11.80" height="32.90" rx="2.5" fill="rgba(124,184,116,0.2)" /><rect x="572.06" y="1116.90" width="11.80" height="32.90" rx="2.5" fill="rgba(124,184,116,0.2)" /><rect x="587.06" y="1116.90" width="11.80" height="32.90" rx="2.5" fill="rgba(124,184,116,0.2)" /><rect x="602.06" y="1116.90" width="11.80" height="32.90" rx="2.5" fill="rgba(124,184,116,0.2)" /><rect x="617.06" y="1116.90" width="11.80" height="32.90" rx="2.5" fill="rgba(124,184,116,0.2)" /><rect x="632.06" y="1116.90" width="11.80" height="32.90" rx="2.5" fill="rgba(124,184,116,0.2)" /><rect x="647.06" y="1116.90" width="11.80" height="32.90" rx="2.5" fill="rgba(124,184,116,0.2)" /><rect x="662.06" y="1116.90" width="11.80" height="32.90" rx="2.5" fill="rgba(124,184,116,0.2)" /><rect x="677.06" y="1116.90" width="11.80" height="32.90" rx="2.5" fill="rgba(124,184,116,0.2)" /><rect x="692.06" y="1116.90" width="11.80" height="32.90" rx="2.5" fill="rgba(124,184,116,0.2)" /><rect x="707.06" y="1116.90" width="11.80" height="32.90" rx="2.5" fill="rgba(124,184,116,0.2)" /><rect x="722.06" y="1116.90" width="11.80" height="32.90" rx="2.5" fill="rgba(124,184,116,0.2)" /><rect x="737.06" y="1116.90" width="11.80" height="32.90" rx="2.5" fill="rgba(124,184,116,0.2)" /><rect x="752.06" y="1116.90" width="11.80" height="32.90" rx="2.5" fill="rgba(124,184,116,0.2)" /><rect x="767.06" y="1116.90" width="11.80" height="32.90" rx="2.5" fill="rgba(124,184,116,0.2)" /><rect x="782.06" y="1116.90" width="11.80" height="32.90" rx="2.5" fill="rgba(124,184,116,0.2)" /><rect x="797.06" y="1116.90" width="11.80" height="32.90" rx="2.5" fill="rgba(124,184,116,0.2)" /><rect x="812.06" y="1116.90" width="11.80" height="32.90" rx="2.5" fill="rgba(124,184,116,0.2)" /><rect x="827.06" y="1116.90" width="11.80" height="32.90" rx="2.5" fill="rgba(124,184,116,0.2)" /><rect x="842.06" y="1116.90" width="11.80" height="32.90" rx="2.5" fill="rgba(124,184,116,0.2)" /><rect x="857.06" y="1116.90" width="11.80" height="32.90" rx="2.5" fill="rgba(124,184,116,0.2)" /><rect x="872.06" y="1116.90" width="11.80" height="32.90" rx="2.5" fill="rgba(124,184,116,0.2)" /><rect x="887.06" y="1116.90" width="11.80" height="32.90" rx="2.5" fill="rgba(124,184,116,0.2)" /><rect x="902.06" y="1116.90" width="11.80" height="32.90" rx="2.5" fill="rgba(124,184,116,0.2)" /><rect x="917.06" y="1116.90" width="11.80" height="32.90" rx="2.5" fill="rgba(124,184,116,0.2)" /><rect x="932.06" y="1116.90" width="11.80" height="32.90" rx="2.5" fill="rgba(124,184,116,0.2)" /><rect x="947.06" y="1116.90" width="11.80" height="32.90" rx="2.5" fill="rgba(124,184,116,0.2)" /><rect x="962.06" y="1116.90" width="11.80" height="32.90" rx="2.5" fill="rgba(124,184,116,0.2)" /><rect x="977.06" y="1116.90" width="11.80" height="32.90" rx="2.5" fill="rgba(124,184,116,0.2)" /><rect x="992.06" y="1116.90" width="11.80" height="32.90" rx="2.5" fill="rgba(124,184,116,0.2)" /><rect x="1007.06" y="1116.90" width="11.80" height="32.90" rx="2.5" fill="rgba(124,184,116,0.2)" /><rect x="1022.06" y="1116.90" width="11.80" height="32.90" rx="2.5" fill="rgba(124,184,116,0.2)" /><rect x="1037.06" y="1116.90" width="11.80" height="32.90" rx="2.5" fill="rgba(124,184,116,0.2)" /><rect x="1052.06" y="1116.90" width="11.80" height="32.90" rx="2.5" fill="rgba(124,184,116,0.2)" /><rect x="1067.06" y="1116.90" width="11.80" height="32.90" rx="2.5" fill="rgba(124,184,116,0.2)" /><rect x="1082.06" y="1116.90" width="11.80" height="32.90" rx="2.5" fill="rgba(124,184,116,0.2)" /><rect x="1097.06" y="1116.90" width="11.80" height="32.90" rx="2.5" fill="rgba(124,184,116,0.2)" /><rect x="1112.06" y="1116.90" width="11.80" height="32.90" rx="2.5" fill="rgba(124,184,116,0.2)" /><rect x="1127.06" y="1116.90" width="11.80" height="32.90" rx="2.5" fill="rgba(124,184,116,0.2)" /><rect x="1142.06" y="1116.90" width="11.80" height="32.90" rx="2.5" fill="rgba(124,184,116,0.2)" /><rect x="1157.06" y="1116.90" width="11.80" height="32.90" rx="2.5" fill="rgba(124,184,116,0.2)" /><text x="1234.00" y="1145.10" font-size="34.51" fill="#78c46d" text-anchor="start" font-weight="normal"  textLength="70.2" lengthAdjust="spacingAndGlyphs" stroke="#78c46d" stroke-width="0.25">32.9</text><text x="1310.30" y="1145.10" font-size="20.19" fill="#78c46d" text-anchor="start" font-weight="normal"  textLength="37.3" lengthAdjust="spacingAndGlyphs" stroke="#78c46d" stroke-width="0.2">MiB</text><text x="93.50" y="1174.90" font-size="15.16" fill="#ccccdc" text-anchor="end" font-weight="normal"  textLength="49.09" lengthAdjust="spacingAndGlyphs" stroke="#ccccdc" stroke-width="0.3">PID: 12</text><rect x="107.06" y="1152.70" width="11.80" height="32.90" rx="2.5" fill="url(#g30)" /><rect x="122.06" y="1152.70" width="11.80" height="32.90" rx="2.5" fill="url(#g30)" /><rect x="137.06" y="1152.70" width="11.80" height="32.90" rx="2.5" fill="url(#g30)" /><rect x="152.06" y="1152.70" width="11.80" height="32.90" rx="2.5" fill="url(#g30)" /><rect x="167.06" y="1152.70" width="11.80" height="32.90" rx="2.5" fill="url(#g30)" /><rect x="182.06" y="1152.70" width="11.80" height="32.90" rx="2.5" fill="url(#g30)" /><rect x="197.06" y="1152.70" width="11.80" height="32.90" rx="2.5" fill="url(#g30)" /><rect x="212.06" y="1152.70" width="11.80" height="32.90" rx="2.5" fill="url(#g30)" /><rect x="227.06" y="1152.70" width="11.80" height="32.90" rx="2.5" fill="url(#g30)" /><rect x="242.06" y="1152.70" width="11.80" height="32.90" rx="2.5" fill="url(#g30)" /><rect x="257.06" y="1152.70" width="11.80" height="32.90" rx="2.5" fill="url(#g30)" /><rect x="272.06" y="1152.70" width="11.80" height="32.90" rx="2.5" fill="url(#g30)" /><rect x="287.06" y="1152.70" width="11.80" height="32.90" rx="2.5" fill="url(#g30)" /><rect x="302.06" y="1152.70" width="11.80" height="32.90" rx="2.5" fill="url(#g30)" /><rect x="317.06" y="1152.70" width="11.80" height="32.90" rx="2.5" fill="url(#g30)" /><rect x="332.06" y="1152.70" width="11.80" height="32.90" rx="2.5" fill="url(#g30)" /><rect x="347.06" y="1152.70" width="11.80" height="32.90" rx="2.5" fill="url(#g30)" /><rect x="362.06" y="1152.70" width="11.80" height="32.90" rx="2.5" fill="url(#g30)" /><rect x="377.06" y="1152.70" width="11.80" height="32.90" rx="2.5" fill="url(#g30)" /><rect x="392.06" y="1152.70" width="11.80" height="32.90" rx="2.5" fill="url(#g30)" /><rect x="407.06" y="1152.70" width="11.80" height="32.90" rx="2.5" fill="url(#g30)" /><rect x="422.06" y="1152.70" width="11.80" height="32.90" rx="2.5" fill="url(#g30)" /><rect x="437.06" y="1152.70" width="11.80" height="32.90" rx="2.5" fill="url(#g30)" /><rect x="452.06" y="1152.70" width="11.80" height="32.90" rx="2.5" fill="url(#g30)" /><rect x="467.06" y="1152.70" width="11.80" height="32.90" rx="2.5" fill="url(#g30)" /><rect x="482.06" y="1152.70" width="11.80" height="32.90" rx="2.5" fill="url(#g30)" /><rect x="497.06" y="1152.70" width="11.80" height="32.90" rx="2.5" fill="url(#g30)" /><rect x="512.06" y="1152.70" width="11.80" height="32.90" rx="2.5" fill="url(#g30)" /><rect x="527.06" y="1152.70" width="11.80" height="32.90" rx="2.5" fill="url(#g30)" /><rect x="542.06" y="1152.70" width="11.80" height="32.90" rx="2.5" fill="url(#g30)" /><rect x="557.06" y="1152.70" width="11.80" height="32.90" rx="2.5" fill="url(#g30)" /><rect x="572.06" y="1152.70" width="11.80" height="32.90" rx="2.5" fill="url(#g30)" /><rect x="587.06" y="1152.70" width="11.80" height="32.90" rx="2.5" fill="url(#g30)" /><rect x="602.06" y="1152.70" width="11.80" height="32.90" rx="2.5" fill="url(#g30)" /><rect x="617.06" y="1152.70" width="11.80" height="32.90" rx="2.5" fill="url(#g30)" /><rect x="632.06" y="1152.70" width="11.80" height="32.90" rx="2.5" fill="url(#g30)" /><rect x="647.06" y="1152.70" width="11.80" height="32.90" rx="2.5" fill="url(#g30)" /><rect x="662.06" y="1152.70" width="11.80" height="32.90" rx="2.5" fill="url(#g30)" /><rect x="677.06" y="1152.70" width="11.80" height="32.90" rx="2.5" fill="url(#g30)" /><rect x="692.06" y="1152.70" width="11.80" height="32.90" rx="2.5" fill="url(#g30)" /><rect x="707.06" y="1152.70" width="11.80" height="32.90" rx="2.5" fill="url(#g30)" /><rect x="722.06" y="1152.70" width="11.80" height="32.90" rx="2.5" fill="url(#g30)" /><rect x="737.06" y="1152.70" width="11.80" height="32.90" rx="2.5" fill="url(#g30)" /><rect x="752.06" y="1152.70" width="11.80" height="32.90" rx="2.5" fill="url(#g30)" /><rect x="767.06" y="1152.70" width="11.80" height="32.90" rx="2.5" fill="url(#g30)" /><rect x="782.06" y="1152.70" width="11.80" height="32.90" rx="2.5" fill="url(#g30)" /><rect x="797.06" y="1152.70" width="11.80" height="32.90" rx="2.5" fill="url(#g30)" /><rect x="812.06" y="1152.70" width="11.80" height="32.90" rx="2.5" fill="url(#g30)" /><rect x="827.06" y="1152.70" width="11.80" height="32.90" rx="2.5" fill="url(#g30)" /><rect x="842.06" y="1152.70" width="11.80" height="32.90" rx="2.5" fill="url(#g30)" /><rect x="857.06" y="1152.70" width="11.80" height="32.90" rx="2.5" fill="url(#g30)" /><rect x="872.06" y="1152.70" width="11.80" height="32.90" rx="2.5" fill="url(#g30)" /><rect x="887.06" y="1152.70" width="11.80" height="32.90" rx="2.5" fill="url(#g30)" /><rect x="902.06" y="1152.70" width="11.80" height="32.90" rx="2.5" fill="url(#g30)" /><rect x="917.06" y="1152.70" width="11.80" height="32.90" rx="2.5" fill="url(#g30)" /><rect x="932.06" y="1152.70" width="11.80" height="32.90" rx="2.5" fill="url(#g30)" /><rect x="947.06" y="1152.70" width="11.80" height="32.90" rx="2.5" fill="url(#g30)" /><rect x="962.06" y="1152.70" width="11.80" height="32.90" rx="2.5" fill="url(#g30)" /><rect x="977.06" y="1152.70" width="11.80" height="32.90" rx="2.5" fill="url(#g30)" /><rect x="992.06" y="1152.70" width="11.80" height="32.90" rx="2.5" fill="url(#g30)" /><rect x="1007.06" y="1152.70" width="11.80" height="32.90" rx="2.5" fill="url(#g30)" /><rect x="1022.06" y="1152.70" width="11.80" height="32.90" rx="2.5" fill="url(#g30)" /><rect x="1037.06" y="1152.70" width="11.80" height="32.90" rx="2.5" fill="url(#g30)" /><rect x="1052.06" y="1152.70" width="11.80" height="32.90" rx="2.5" fill="url(#g30)" /><rect x="1067.06" y="1152.70" width="11.80" height="32.90" rx="2.5" fill="url(#g30)" /><rect x="1082.06" y="1152.70" width="11.80" height="32.90" rx="2.5" fill="url(#g30)" /><rect x="1097.06" y="1152.70" width="11.80" height="32.90" rx="2.5" fill="url(#g30)" /><rect x="1112.06" y="1152.70" width="11.80" height="32.90" rx="2.5" fill="url(#g30)" /><rect x="1127.06" y="1152.70" width="11.80" height="32.90" rx="2.5" fill="url(#g30)" /><rect x="1142.06" y="1152.70" width="11.80" height="32.90" rx="2.5" fill="url(#g30)" /><rect x="1157.06" y="1152.70" width="11.80" height="32.90" rx="2.5" fill="url(#g30)" /><text x="1240.10" y="1180.90" font-size="34.51" fill="#78c46d" text-anchor="start" font-weight="normal"  textLength="64.1" lengthAdjust="spacingAndGlyphs" stroke="#78c46d" stroke-width="0.25">37.6</text><text x="1310.30" y="1180.90" font-size="20.19" fill="#78c46d" text-anchor="start" font-weight="normal"  textLength="37.3" lengthAdjust="spacingAndGlyphs" stroke="#78c46d" stroke-width="0.2">MiB</text><text x="93.50" y="1210.70" font-size="15.16" fill="#ccccdc" text-anchor="end" font-weight="normal"  textLength="49.09" lengthAdjust="spacingAndGlyphs" stroke="#ccccdc" stroke-width="0.3">PID: 17</text><rect x="107.06" y="1188.50" width="11.80" height="32.90" rx="2.5" fill="url(#g30)" /><rect x="122.06" y="1188.50" width="11.80" height="32.90" rx="2.5" fill="url(#g30)" /><rect x="137.06" y="1188.50" width="11.80" height="32.90" rx="2.5" fill="url(#g30)" /><rect x="152.06" y="1188.50" width="11.80" height="32.90" rx="2.5" fill="url(#g30)" /><rect x="167.06" y="1188.50" width="11.80" height="32.90" rx="2.5" fill="url(#g30)" /><rect x="182.06" y="1188.50" width="11.80" height="32.90" rx="2.5" fill="url(#g30)" /><rect x="197.06" y="1188.50" width="11.80" height="32.90" rx="2.5" fill="url(#g30)" /><rect x="212.06" y="1188.50" width="11.80" height="32.90" rx="2.5" fill="url(#g30)" /><rect x="227.06" y="1188.50" width="11.80" height="32.90" rx="2.5" fill="url(#g30)" /><rect x="242.06" y="1188.50" width="11.80" height="32.90" rx="2.5" fill="url(#g30)" /><rect x="257.06" y="1188.50" width="11.80" height="32.90" rx="2.5" fill="url(#g30)" /><rect x="272.06" y="1188.50" width="11.80" height="32.90" rx="2.5" fill="url(#g30)" /><rect x="287.06" y="1188.50" width="11.80" height="32.90" rx="2.5" fill="url(#g30)" /><rect x="302.06" y="1188.50" width="11.80" height="32.90" rx="2.5" fill="url(#g30)" /><rect x="317.06" y="1188.50" width="11.80" height="32.90" rx="2.5" fill="url(#g30)" /><rect x="332.06" y="1188.50" width="11.80" height="32.90" rx="2.5" fill="url(#g30)" /><rect x="347.06" y="1188.50" width="11.80" height="32.90" rx="2.5" fill="url(#g30)" /><rect x="362.06" y="1188.50" width="11.80" height="32.90" rx="2.5" fill="url(#g30)" /><rect x="377.06" y="1188.50" width="11.80" height="32.90" rx="2.5" fill="url(#g30)" /><rect x="392.06" y="1188.50" width="11.80" height="32.90" rx="2.5" fill="url(#g30)" /><rect x="407.06" y="1188.50" width="11.80" height="32.90" rx="2.5" fill="url(#g30)" /><rect x="422.06" y="1188.50" width="11.80" height="32.90" rx="2.5" fill="url(#g30)" /><rect x="437.06" y="1188.50" width="11.80" height="32.90" rx="2.5" fill="url(#g30)" /><rect x="452.06" y="1188.50" width="11.80" height="32.90" rx="2.5" fill="url(#g30)" /><rect x="467.06" y="1188.50" width="11.80" height="32.90" rx="2.5" fill="url(#g30)" /><rect x="482.06" y="1188.50" width="11.80" height="32.90" rx="2.5" fill="url(#g30)" /><rect x="497.06" y="1188.50" width="11.80" height="32.90" rx="2.5" fill="url(#g30)" /><rect x="512.06" y="1188.50" width="11.80" height="32.90" rx="2.5" fill="url(#g30)" /><rect x="527.06" y="1188.50" width="11.80" height="32.90" rx="2.5" fill="url(#g30)" /><rect x="542.06" y="1188.50" width="11.80" height="32.90" rx="2.5" fill="url(#g30)" /><rect x="557.06" y="1188.50" width="11.80" height="32.90" rx="2.5" fill="url(#g30)" /><rect x="572.06" y="1188.50" width="11.80" height="32.90" rx="2.5" fill="url(#g30)" /><rect x="587.06" y="1188.50" width="11.80" height="32.90" rx="2.5" fill="url(#g30)" /><rect x="602.06" y="1188.50" width="11.80" height="32.90" rx="2.5" fill="url(#g30)" /><rect x="617.06" y="1188.50" width="11.80" height="32.90" rx="2.5" fill="url(#g30)" /><rect x="632.06" y="1188.50" width="11.80" height="32.90" rx="2.5" fill="url(#g30)" /><rect x="647.06" y="1188.50" width="11.80" height="32.90" rx="2.5" fill="url(#g30)" /><rect x="662.06" y="1188.50" width="11.80" height="32.90" rx="2.5" fill="url(#g30)" /><rect x="677.06" y="1188.50" width="11.80" height="32.90" rx="2.5" fill="url(#g30)" /><rect x="692.06" y="1188.50" width="11.80" height="32.90" rx="2.5" fill="url(#g30)" /><rect x="707.06" y="1188.50" width="11.80" height="32.90" rx="2.5" fill="url(#g30)" /><rect x="722.06" y="1188.50" width="11.80" height="32.90" rx="2.5" fill="url(#g30)" /><rect x="737.06" y="1188.50" width="11.80" height="32.90" rx="2.5" fill="url(#g30)" /><rect x="752.06" y="1188.50" width="11.80" height="32.90" rx="2.5" fill="url(#g30)" /><rect x="767.06" y="1188.50" width="11.80" height="32.90" rx="2.5" fill="url(#g30)" /><rect x="782.06" y="1188.50" width="11.80" height="32.90" rx="2.5" fill="url(#g30)" /><rect x="797.06" y="1188.50" width="11.80" height="32.90" rx="2.5" fill="url(#g30)" /><rect x="812.06" y="1188.50" width="11.80" height="32.90" rx="2.5" fill="url(#g30)" /><rect x="827.06" y="1188.50" width="11.80" height="32.90" rx="2.5" fill="url(#g30)" /><rect x="842.06" y="1188.50" width="11.80" height="32.90" rx="2.5" fill="url(#g30)" /><rect x="857.06" y="1188.50" width="11.80" height="32.90" rx="2.5" fill="url(#g30)" /><rect x="872.06" y="1188.50" width="11.80" height="32.90" rx="2.5" fill="url(#g30)" /><rect x="887.06" y="1188.50" width="11.80" height="32.90" rx="2.5" fill="url(#g30)" /><rect x="902.06" y="1188.50" width="11.80" height="32.90" rx="2.5" fill="url(#g30)" /><rect x="917.06" y="1188.50" width="11.80" height="32.90" rx="2.5" fill="url(#g30)" /><rect x="932.06" y="1188.50" width="11.80" height="32.90" rx="2.5" fill="url(#g30)" /><rect x="947.06" y="1188.50" width="11.80" height="32.90" rx="2.5" fill="url(#g30)" /><rect x="962.06" y="1188.50" width="11.80" height="32.90" rx="2.5" fill="url(#g30)" /><rect x="977.06" y="1188.50" width="11.80" height="32.90" rx="2.5" fill="url(#g30)" /><rect x="992.06" y="1188.50" width="11.80" height="32.90" rx="2.5" fill="url(#g30)" /><rect x="1007.06" y="1188.50" width="11.80" height="32.90" rx="2.5" fill="url(#g30)" /><rect x="1022.06" y="1188.50" width="11.80" height="32.90" rx="2.5" fill="url(#g30)" /><rect x="1037.06" y="1188.50" width="11.80" height="32.90" rx="2.5" fill="url(#g30)" /><rect x="1052.06" y="1188.50" width="11.80" height="32.90" rx="2.5" fill="url(#g30)" /><rect x="1067.06" y="1188.50" width="11.80" height="32.90" rx="2.5" fill="url(#g30)" /><rect x="1082.06" y="1188.50" width="11.80" height="32.90" rx="2.5" fill="url(#g30)" /><rect x="1097.06" y="1188.50" width="11.80" height="32.90" rx="2.5" fill="url(#g30)" /><rect x="1112.06" y="1188.50" width="11.80" height="32.90" rx="2.5" fill="url(#g30)" /><rect x="1127.06" y="1188.50" width="11.80" height="32.90" rx="2.5" fill="url(#g30)" /><rect x="1142.06" y="1188.50" width="11.80" height="32.90" rx="2.5" fill="rgba(124,184,116,0.2)" /><rect x="1157.06" y="1188.50" width="11.80" height="32.90" rx="2.5" fill="rgba(124,184,116,0.2)" /><text x="1238.60" y="1216.70" font-size="34.51" fill="#78c46d" text-anchor="start" font-weight="normal"  textLength="65.6" lengthAdjust="spacingAndGlyphs" stroke="#78c46d" stroke-width="0.25">37.4</text><text x="1310.30" y="1216.70" font-size="20.19" fill="#78c46d" text-anchor="start" font-weight="normal"  textLength="37.3" lengthAdjust="spacingAndGlyphs" stroke="#78c46d" stroke-width="0.2">MiB</text><text x="93.50" y="1246.50" font-size="15.16" fill="#ccccdc" text-anchor="end" font-weight="normal"  textLength="49.09" lengthAdjust="spacingAndGlyphs" stroke="#ccccdc" stroke-width="0.3">PID: 12</text><rect x="107.06" y="1224.30" width="11.80" height="32.90" rx="2.5" fill="url(#g30)" /><rect x="122.06" y="1224.30" width="11.80" height="32.90" rx="2.5" fill="url(#g30)" /><rect x="137.06" y="1224.30" width="11.80" height="32.90" rx="2.5" fill="url(#g30)" /><rect x="152.06" y="1224.30" width="11.80" height="32.90" rx="2.5" fill="url(#g30)" /><rect x="167.06" y="1224.30" width="11.80" height="32.90" rx="2.5" fill="url(#g30)" /><rect x="182.06" y="1224.30" width="11.80" height="32.90" rx="2.5" fill="url(#g30)" /><rect x="197.06" y="1224.30" width="11.80" height="32.90" rx="2.5" fill="url(#g30)" /><rect x="212.06" y="1224.30" width="11.80" height="32.90" rx="2.5" fill="url(#g30)" /><rect x="227.06" y="1224.30" width="11.80" height="32.90" rx="2.5" fill="url(#g30)" /><rect x="242.06" y="1224.30" width="11.80" height="32.90" rx="2.5" fill="url(#g30)" /><rect x="257.06" y="1224.30" width="11.80" height="32.90" rx="2.5" fill="url(#g30)" /><rect x="272.06" y="1224.30" width="11.80" height="32.90" rx="2.5" fill="url(#g30)" /><rect x="287.06" y="1224.30" width="11.80" height="32.90" rx="2.5" fill="url(#g30)" /><rect x="302.06" y="1224.30" width="11.80" height="32.90" rx="2.5" fill="url(#g30)" /><rect x="317.06" y="1224.30" width="11.80" height="32.90" rx="2.5" fill="url(#g30)" /><rect x="332.06" y="1224.30" width="11.80" height="32.90" rx="2.5" fill="url(#g30)" /><rect x="347.06" y="1224.30" width="11.80" height="32.90" rx="2.5" fill="url(#g30)" /><rect x="362.06" y="1224.30" width="11.80" height="32.90" rx="2.5" fill="url(#g30)" /><rect x="377.06" y="1224.30" width="11.80" height="32.90" rx="2.5" fill="url(#g30)" /><rect x="392.06" y="1224.30" width="11.80" height="32.90" rx="2.5" fill="url(#g30)" /><rect x="407.06" y="1224.30" width="11.80" height="32.90" rx="2.5" fill="url(#g30)" /><rect x="422.06" y="1224.30" width="11.80" height="32.90" rx="2.5" fill="url(#g30)" /><rect x="437.06" y="1224.30" width="11.80" height="32.90" rx="2.5" fill="url(#g30)" /><rect x="452.06" y="1224.30" width="11.80" height="32.90" rx="2.5" fill="url(#g30)" /><rect x="467.06" y="1224.30" width="11.80" height="32.90" rx="2.5" fill="url(#g30)" /><rect x="482.06" y="1224.30" width="11.80" height="32.90" rx="2.5" fill="url(#g30)" /><rect x="497.06" y="1224.30" width="11.80" height="32.90" rx="2.5" fill="url(#g30)" /><rect x="512.06" y="1224.30" width="11.80" height="32.90" rx="2.5" fill="url(#g30)" /><rect x="527.06" y="1224.30" width="11.80" height="32.90" rx="2.5" fill="url(#g30)" /><rect x="542.06" y="1224.30" width="11.80" height="32.90" rx="2.5" fill="url(#g30)" /><rect x="557.06" y="1224.30" width="11.80" height="32.90" rx="2.5" fill="url(#g30)" /><rect x="572.06" y="1224.30" width="11.80" height="32.90" rx="2.5" fill="url(#g30)" /><rect x="587.06" y="1224.30" width="11.80" height="32.90" rx="2.5" fill="url(#g30)" /><rect x="602.06" y="1224.30" width="11.80" height="32.90" rx="2.5" fill="url(#g30)" /><rect x="617.06" y="1224.30" width="11.80" height="32.90" rx="2.5" fill="url(#g30)" /><rect x="632.06" y="1224.30" width="11.80" height="32.90" rx="2.5" fill="url(#g30)" /><rect x="647.06" y="1224.30" width="11.80" height="32.90" rx="2.5" fill="url(#g30)" /><rect x="662.06" y="1224.30" width="11.80" height="32.90" rx="2.5" fill="url(#g30)" /><rect x="677.06" y="1224.30" width="11.80" height="32.90" rx="2.5" fill="url(#g30)" /><rect x="692.06" y="1224.30" width="11.80" height="32.90" rx="2.5" fill="url(#g30)" /><rect x="707.06" y="1224.30" width="11.80" height="32.90" rx="2.5" fill="url(#g30)" /><rect x="722.06" y="1224.30" width="11.80" height="32.90" rx="2.5" fill="url(#g30)" /><rect x="737.06" y="1224.30" width="11.80" height="32.90" rx="2.5" fill="url(#g30)" /><rect x="752.06" y="1224.30" width="11.80" height="32.90" rx="2.5" fill="url(#g30)" /><rect x="767.06" y="1224.30" width="11.80" height="32.90" rx="2.5" fill="url(#g30)" /><rect x="782.06" y="1224.30" width="11.80" height="32.90" rx="2.5" fill="url(#g30)" /><rect x="797.06" y="1224.30" width="11.80" height="32.90" rx="2.5" fill="url(#g30)" /><rect x="812.06" y="1224.30" width="11.80" height="32.90" rx="2.5" fill="url(#g30)" /><rect x="827.06" y="1224.30" width="11.80" height="32.90" rx="2.5" fill="url(#g30)" /><rect x="842.06" y="1224.30" width="11.80" height="32.90" rx="2.5" fill="url(#g30)" /><rect x="857.06" y="1224.30" width="11.80" height="32.90" rx="2.5" fill="url(#g30)" /><rect x="872.06" y="1224.30" width="11.80" height="32.90" rx="2.5" fill="url(#g30)" /><rect x="887.06" y="1224.30" width="11.80" height="32.90" rx="2.5" fill="url(#g30)" /><rect x="902.06" y="1224.30" width="11.80" height="32.90" rx="2.5" fill="url(#g30)" /><rect x="917.06" y="1224.30" width="11.80" height="32.90" rx="2.5" fill="url(#g30)" /><rect x="932.06" y="1224.30" width="11.80" height="32.90" rx="2.5" fill="url(#g30)" /><rect x="947.06" y="1224.30" width="11.80" height="32.90" rx="2.5" fill="url(#g30)" /><rect x="962.06" y="1224.30" width="11.80" height="32.90" rx="2.5" fill="url(#g30)" /><rect x="977.06" y="1224.30" width="11.80" height="32.90" rx="2.5" fill="url(#g30)" /><rect x="992.06" y="1224.30" width="11.80" height="32.90" rx="2.5" fill="url(#g30)" /><rect x="1007.06" y="1224.30" width="11.80" height="32.90" rx="2.5" fill="url(#g30)" /><rect x="1022.06" y="1224.30" width="11.80" height="32.90" rx="2.5" fill="url(#g30)" /><rect x="1037.06" y="1224.30" width="11.80" height="32.90" rx="2.5" fill="url(#g30)" /><rect x="1052.06" y="1224.30" width="11.80" height="32.90" rx="2.5" fill="url(#g30)" /><rect x="1067.06" y="1224.30" width="11.80" height="32.90" rx="2.5" fill="url(#g30)" /><rect x="1082.06" y="1224.30" width="11.80" height="32.90" rx="2.5" fill="rgba(124,184,116,0.2)" /><rect x="1097.06" y="1224.30" width="11.80" height="32.90" rx="2.5" fill="rgba(124,184,116,0.2)" /><rect x="1112.06" y="1224.30" width="11.80" height="32.90" rx="2.5" fill="rgba(124,184,116,0.2)" /><rect x="1127.06" y="1224.30" width="11.80" height="32.90" rx="2.5" fill="rgba(124,184,116,0.2)" /><rect x="1142.06" y="1224.30" width="11.80" height="32.90" rx="2.5" fill="rgba(124,184,116,0.2)" /><rect x="1157.06" y="1224.30" width="11.80" height="32.90" rx="2.5" fill="rgba(124,184,116,0.2)" /><text x="1240.10" y="1252.50" font-size="34.51" fill="#78c46d" text-anchor="start" font-weight="normal"  textLength="64.1" lengthAdjust="spacingAndGlyphs" stroke="#78c46d" stroke-width="0.25">37.0</text><text x="1310.30" y="1252.50" font-size="20.19" fill="#78c46d" text-anchor="start" font-weight="normal"  textLength="37.3" lengthAdjust="spacingAndGlyphs" stroke="#78c46d" stroke-width="0.2">MiB</text>
</svg>
</div>
<div id="ov"></div>
</body></html>
